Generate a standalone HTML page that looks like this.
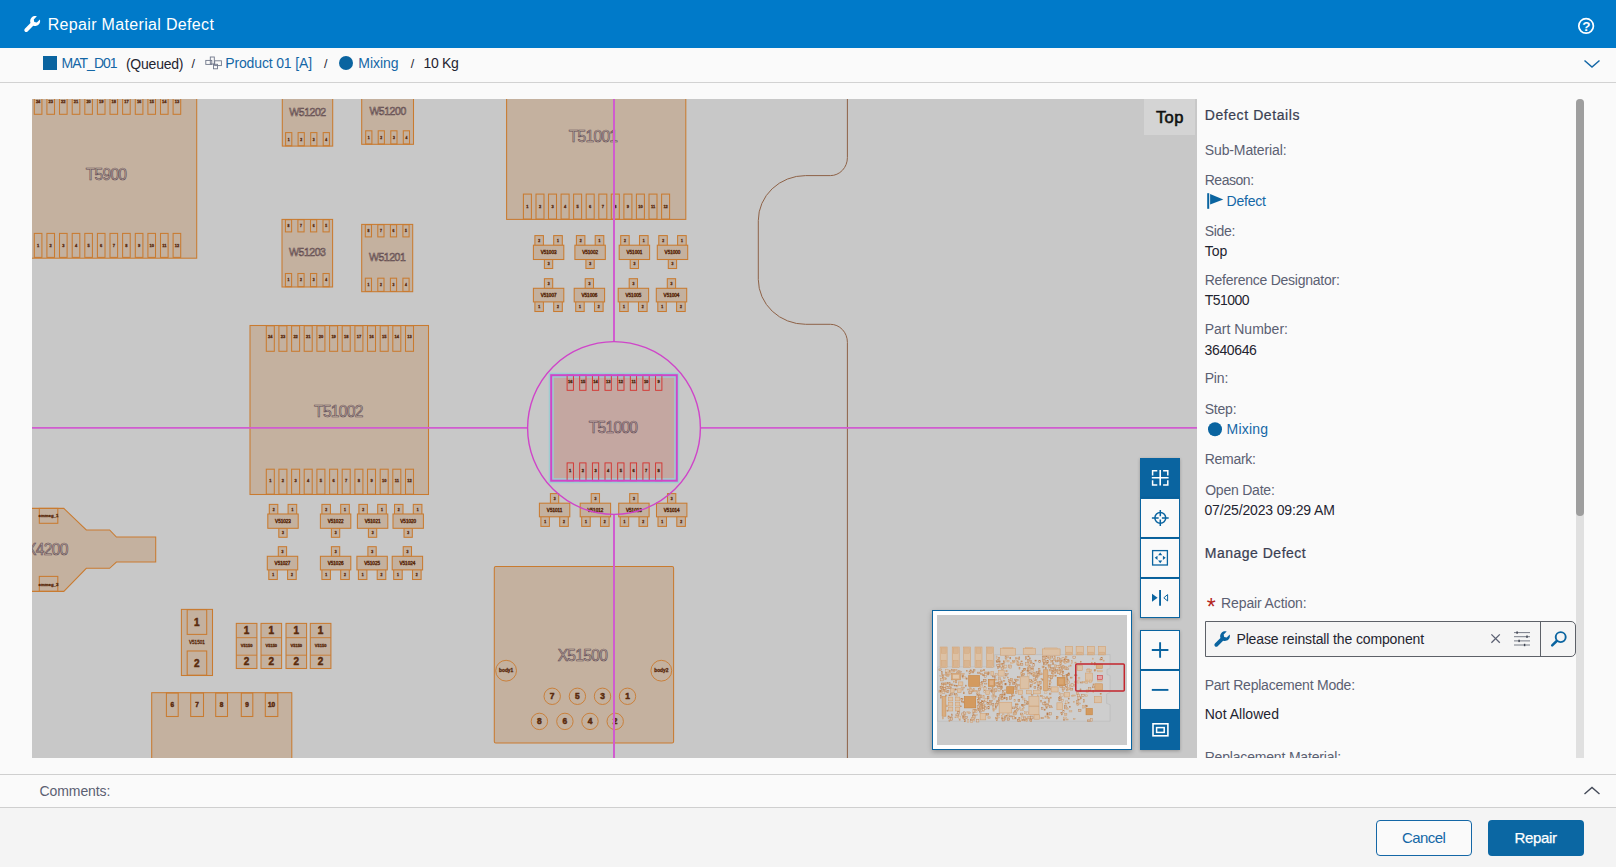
<!DOCTYPE html>
<html lang="en"><head><meta charset="utf-8"><title>Repair Material Defect</title>
<style>
html,body{margin:0;padding:0}
body{width:1616px;height:867px;overflow:hidden;position:relative;background:#fafafa;font-family:"Liberation Sans",sans-serif}
.abs{position:absolute}
.t{position:absolute;white-space:nowrap;line-height:1.149;}
#hdr{left:0;top:0;width:1616px;height:48px;background:#007ac9}
#crumb{left:0;top:48px;width:1616px;height:34px;background:#fafafa;border-bottom:1px solid #d2d2d2}
#pcbwrap{left:32px;top:99px;width:1165px;height:658.6px;background:#c8c8c8;overflow:hidden}
svg.pcb{position:absolute;left:0;top:0}
svg.pcb text.big{paint-order:stroke}
#toplabel{left:1144px;top:99px;width:51px;height:35.6px;background:#d4d4d4}
#mini{left:932px;top:610px;width:197.7px;height:137.8px;border:1px solid #0a64a0;background:#fff;box-shadow:0 2px 5px rgba(0,0,0,.28)}
#mini svg{position:absolute;left:4px;top:4px;background:#cbcbcb}
.tb{position:absolute;left:1140px;width:40px;background:#fafafa;border:1px solid #0a64a0;box-sizing:border-box;box-shadow:0 1px 3px rgba(0,0,0,.25)}
.tb.on{background:#0a64a0}
.tb svg{position:absolute;left:0;top:0}
#track{left:1576px;top:99px;width:8px;height:658.6px;background:#e0e0e0;border-radius:4px 4px 0 0}
#thumb{left:1576px;top:98.800px;width:8px;height:417.100px;background:#9e9e9e;border-radius:4px}
#panelclip{left:1197px;top:757.6px;width:395px;height:16px;background:#fafafa}
#cmt{left:0;top:774px;width:1616px;height:32px;border-top:1px solid #cfcfcf;border-bottom:1px solid #cfcfcf;background:#fafafa}
#foot{left:0;top:808px;width:1616px;height:59px;background:#f4f4f4}
#inp{left:1205px;top:621px;width:370.6px;height:36px;box-sizing:border-box;border:1px solid #5d6168;border-radius:0 5px 5px 0;background:#f5f5f5}
#inpdiv{left:1539.5px;top:621px;width:1px;height:36px;background:#5d6168}
#inpr{left:1540.5px;top:622px;width:34.1px;height:34px;background:#f5f5f5;border-radius:0 4px 4px 0}
#bcancel{left:1376px;top:820px;width:96px;height:36px;box-sizing:border-box;border:1px solid #1467a6;border-radius:4px;background:#fafafa}
#brepair{left:1488px;top:820px;width:96px;height:36px;border-radius:4px;background:#0b67a3}
</style></head><body>
<div id="hdr" class="abs"></div>
<div id="crumb" class="abs"></div>
<div id="pcbwrap" class="abs"><svg class="pcb" width="1165" height="658.6" viewBox="0 0 1165 658.6" font-family="Liberation Sans, sans-serif">
<rect x="-12.0" y="-9.0" width="176.7" height="168.2" fill="#c4b19f" stroke="#c97b30" stroke-width="1.05"/>
<rect x="2.3" y="-9.0" width="7.6" height="24.3" fill="none" stroke="#c97b30" stroke-width="1.05"/>
<text x="6.1" y="4.5" font-size="4.0" fill="#5a2a0c" font-weight="bold" text-anchor="middle" stroke="#5a2a0c" stroke-width="0.3">24</text>
<rect x="14.9" y="-9.0" width="7.6" height="24.3" fill="none" stroke="#c97b30" stroke-width="1.05"/>
<text x="18.7" y="4.5" font-size="4.0" fill="#5a2a0c" font-weight="bold" text-anchor="middle" stroke="#5a2a0c" stroke-width="0.3">23</text>
<rect x="27.5" y="-9.0" width="7.6" height="24.3" fill="none" stroke="#c97b30" stroke-width="1.05"/>
<text x="31.3" y="4.5" font-size="4.0" fill="#5a2a0c" font-weight="bold" text-anchor="middle" stroke="#5a2a0c" stroke-width="0.3">22</text>
<rect x="40.2" y="-9.0" width="7.6" height="24.3" fill="none" stroke="#c97b30" stroke-width="1.05"/>
<text x="44.0" y="4.5" font-size="4.0" fill="#5a2a0c" font-weight="bold" text-anchor="middle" stroke="#5a2a0c" stroke-width="0.3">21</text>
<rect x="52.8" y="-9.0" width="7.6" height="24.3" fill="none" stroke="#c97b30" stroke-width="1.05"/>
<text x="56.6" y="4.5" font-size="4.0" fill="#5a2a0c" font-weight="bold" text-anchor="middle" stroke="#5a2a0c" stroke-width="0.3">20</text>
<rect x="65.4" y="-9.0" width="7.6" height="24.3" fill="none" stroke="#c97b30" stroke-width="1.05"/>
<text x="69.2" y="4.5" font-size="4.0" fill="#5a2a0c" font-weight="bold" text-anchor="middle" stroke="#5a2a0c" stroke-width="0.3">19</text>
<rect x="78.0" y="-9.0" width="7.6" height="24.3" fill="none" stroke="#c97b30" stroke-width="1.05"/>
<text x="81.8" y="4.5" font-size="4.0" fill="#5a2a0c" font-weight="bold" text-anchor="middle" stroke="#5a2a0c" stroke-width="0.3">18</text>
<rect x="90.6" y="-9.0" width="7.6" height="24.3" fill="none" stroke="#c97b30" stroke-width="1.05"/>
<text x="94.4" y="4.5" font-size="4.0" fill="#5a2a0c" font-weight="bold" text-anchor="middle" stroke="#5a2a0c" stroke-width="0.3">17</text>
<rect x="103.3" y="-9.0" width="7.6" height="24.3" fill="none" stroke="#c97b30" stroke-width="1.05"/>
<text x="107.1" y="4.5" font-size="4.0" fill="#5a2a0c" font-weight="bold" text-anchor="middle" stroke="#5a2a0c" stroke-width="0.3">16</text>
<rect x="115.9" y="-9.0" width="7.6" height="24.3" fill="none" stroke="#c97b30" stroke-width="1.05"/>
<text x="119.7" y="4.5" font-size="4.0" fill="#5a2a0c" font-weight="bold" text-anchor="middle" stroke="#5a2a0c" stroke-width="0.3">15</text>
<rect x="128.5" y="-9.0" width="7.6" height="24.3" fill="none" stroke="#c97b30" stroke-width="1.05"/>
<text x="132.3" y="4.5" font-size="4.0" fill="#5a2a0c" font-weight="bold" text-anchor="middle" stroke="#5a2a0c" stroke-width="0.3">14</text>
<rect x="141.1" y="-9.0" width="7.6" height="24.3" fill="none" stroke="#c97b30" stroke-width="1.05"/>
<text x="144.9" y="4.5" font-size="4.0" fill="#5a2a0c" font-weight="bold" text-anchor="middle" stroke="#5a2a0c" stroke-width="0.3">13</text>
<rect x="2.3" y="134.4" width="7.6" height="24.0" fill="none" stroke="#c97b30" stroke-width="1.05"/>
<text x="6.1" y="148.0" font-size="4.0" fill="#5a2a0c" font-weight="bold" text-anchor="middle" stroke="#5a2a0c" stroke-width="0.3">1</text>
<rect x="14.9" y="134.4" width="7.6" height="24.0" fill="none" stroke="#c97b30" stroke-width="1.05"/>
<text x="18.7" y="148.0" font-size="4.0" fill="#5a2a0c" font-weight="bold" text-anchor="middle" stroke="#5a2a0c" stroke-width="0.3">2</text>
<rect x="27.5" y="134.4" width="7.6" height="24.0" fill="none" stroke="#c97b30" stroke-width="1.05"/>
<text x="31.3" y="148.0" font-size="4.0" fill="#5a2a0c" font-weight="bold" text-anchor="middle" stroke="#5a2a0c" stroke-width="0.3">3</text>
<rect x="40.2" y="134.4" width="7.6" height="24.0" fill="none" stroke="#c97b30" stroke-width="1.05"/>
<text x="44.0" y="148.0" font-size="4.0" fill="#5a2a0c" font-weight="bold" text-anchor="middle" stroke="#5a2a0c" stroke-width="0.3">4</text>
<rect x="52.8" y="134.4" width="7.6" height="24.0" fill="none" stroke="#c97b30" stroke-width="1.05"/>
<text x="56.6" y="148.0" font-size="4.0" fill="#5a2a0c" font-weight="bold" text-anchor="middle" stroke="#5a2a0c" stroke-width="0.3">5</text>
<rect x="65.4" y="134.4" width="7.6" height="24.0" fill="none" stroke="#c97b30" stroke-width="1.05"/>
<text x="69.2" y="148.0" font-size="4.0" fill="#5a2a0c" font-weight="bold" text-anchor="middle" stroke="#5a2a0c" stroke-width="0.3">6</text>
<rect x="78.0" y="134.4" width="7.6" height="24.0" fill="none" stroke="#c97b30" stroke-width="1.05"/>
<text x="81.8" y="148.0" font-size="4.0" fill="#5a2a0c" font-weight="bold" text-anchor="middle" stroke="#5a2a0c" stroke-width="0.3">7</text>
<rect x="90.6" y="134.4" width="7.6" height="24.0" fill="none" stroke="#c97b30" stroke-width="1.05"/>
<text x="94.4" y="148.0" font-size="4.0" fill="#5a2a0c" font-weight="bold" text-anchor="middle" stroke="#5a2a0c" stroke-width="0.3">8</text>
<rect x="103.3" y="134.4" width="7.6" height="24.0" fill="none" stroke="#c97b30" stroke-width="1.05"/>
<text x="107.1" y="148.0" font-size="4.0" fill="#5a2a0c" font-weight="bold" text-anchor="middle" stroke="#5a2a0c" stroke-width="0.3">9</text>
<rect x="115.9" y="134.4" width="7.6" height="24.0" fill="none" stroke="#c97b30" stroke-width="1.05"/>
<text x="119.7" y="148.0" font-size="4.0" fill="#5a2a0c" font-weight="bold" text-anchor="middle" stroke="#5a2a0c" stroke-width="0.3">10</text>
<rect x="128.5" y="134.4" width="7.6" height="24.0" fill="none" stroke="#c97b30" stroke-width="1.05"/>
<text x="132.3" y="148.0" font-size="4.0" fill="#5a2a0c" font-weight="bold" text-anchor="middle" stroke="#5a2a0c" stroke-width="0.3">11</text>
<rect x="141.1" y="134.4" width="7.6" height="24.0" fill="none" stroke="#c97b30" stroke-width="1.05"/>
<text x="144.9" y="148.0" font-size="4.0" fill="#5a2a0c" font-weight="bold" text-anchor="middle" stroke="#5a2a0c" stroke-width="0.3">12</text>
<text x="74.0" y="80.9" font-size="15.6" text-anchor="middle" letter-spacing="-0.7" fill="none" stroke="#5e4a56" stroke-width="0.6">T5900</text>
<rect x="250.3" y="-14.0" width="50.4" height="61.1" fill="#c4b19f" stroke="#c97b30" stroke-width="1.05"/>
<rect x="253.6" y="33.6" width="6.2" height="13.2" fill="none" stroke="#c97b30" stroke-width="1.05"/>
<text x="256.7" y="41.6" font-size="3.4" fill="#5a2a0c" font-weight="bold" text-anchor="middle" stroke="#5a2a0c" stroke-width="0.3">1</text>
<rect x="266.1" y="33.6" width="6.2" height="13.2" fill="none" stroke="#c97b30" stroke-width="1.05"/>
<text x="269.2" y="41.6" font-size="3.4" fill="#5a2a0c" font-weight="bold" text-anchor="middle" stroke="#5a2a0c" stroke-width="0.3">2</text>
<rect x="278.7" y="33.6" width="6.2" height="13.2" fill="none" stroke="#c97b30" stroke-width="1.05"/>
<text x="281.8" y="41.6" font-size="3.4" fill="#5a2a0c" font-weight="bold" text-anchor="middle" stroke="#5a2a0c" stroke-width="0.3">3</text>
<rect x="291.2" y="33.6" width="6.2" height="13.2" fill="none" stroke="#c97b30" stroke-width="1.05"/>
<text x="294.3" y="41.6" font-size="3.4" fill="#5a2a0c" font-weight="bold" text-anchor="middle" stroke="#5a2a0c" stroke-width="0.3">4</text>
<text x="275.5" y="16.9" font-size="10.5" letter-spacing="-0.45" text-anchor="middle" fill="none" stroke="#5a444a" stroke-width="0.55">W51202</text>
<rect x="329.7" y="-14.0" width="51.8" height="59.3" fill="#c4b19f" stroke="#c97b30" stroke-width="1.05"/>
<rect x="333.7" y="31.8" width="6.2" height="13.2" fill="none" stroke="#c97b30" stroke-width="1.05"/>
<text x="336.8" y="39.8" font-size="3.4" fill="#5a2a0c" font-weight="bold" text-anchor="middle" stroke="#5a2a0c" stroke-width="0.3">1</text>
<rect x="346.2" y="31.8" width="6.2" height="13.2" fill="none" stroke="#c97b30" stroke-width="1.05"/>
<text x="349.3" y="39.8" font-size="3.4" fill="#5a2a0c" font-weight="bold" text-anchor="middle" stroke="#5a2a0c" stroke-width="0.3">2</text>
<rect x="358.8" y="31.8" width="6.2" height="13.2" fill="none" stroke="#c97b30" stroke-width="1.05"/>
<text x="361.9" y="39.8" font-size="3.4" fill="#5a2a0c" font-weight="bold" text-anchor="middle" stroke="#5a2a0c" stroke-width="0.3">3</text>
<rect x="371.3" y="31.8" width="6.2" height="13.2" fill="none" stroke="#c97b30" stroke-width="1.05"/>
<text x="374.4" y="39.8" font-size="3.4" fill="#5a2a0c" font-weight="bold" text-anchor="middle" stroke="#5a2a0c" stroke-width="0.3">4</text>
<text x="355.6" y="16.0" font-size="10.5" letter-spacing="-0.45" text-anchor="middle" fill="none" stroke="#5a444a" stroke-width="0.55">W51200</text>
<rect x="250.0" y="120.4" width="50.6" height="67.6" fill="#c4b19f" stroke="#c97b30" stroke-width="1.05"/>
<rect x="253.4" y="120.7" width="6.2" height="12.2" fill="none" stroke="#c97b30" stroke-width="1.05"/>
<text x="256.5" y="127.9" font-size="3.4" fill="#5a2a0c" font-weight="bold" text-anchor="middle" stroke="#5a2a0c" stroke-width="0.3">8</text>
<rect x="265.9" y="120.7" width="6.2" height="12.2" fill="none" stroke="#c97b30" stroke-width="1.05"/>
<text x="269.0" y="127.9" font-size="3.4" fill="#5a2a0c" font-weight="bold" text-anchor="middle" stroke="#5a2a0c" stroke-width="0.3">7</text>
<rect x="278.5" y="120.7" width="6.2" height="12.2" fill="none" stroke="#c97b30" stroke-width="1.05"/>
<text x="281.6" y="127.9" font-size="3.4" fill="#5a2a0c" font-weight="bold" text-anchor="middle" stroke="#5a2a0c" stroke-width="0.3">6</text>
<rect x="291.0" y="120.7" width="6.2" height="12.2" fill="none" stroke="#c97b30" stroke-width="1.05"/>
<text x="294.1" y="127.9" font-size="3.4" fill="#5a2a0c" font-weight="bold" text-anchor="middle" stroke="#5a2a0c" stroke-width="0.3">5</text>
<rect x="253.4" y="174.5" width="6.2" height="13.2" fill="none" stroke="#c97b30" stroke-width="1.05"/>
<text x="256.5" y="182.5" font-size="3.4" fill="#5a2a0c" font-weight="bold" text-anchor="middle" stroke="#5a2a0c" stroke-width="0.3">1</text>
<rect x="265.9" y="174.5" width="6.2" height="13.2" fill="none" stroke="#c97b30" stroke-width="1.05"/>
<text x="269.0" y="182.5" font-size="3.4" fill="#5a2a0c" font-weight="bold" text-anchor="middle" stroke="#5a2a0c" stroke-width="0.3">2</text>
<rect x="278.5" y="174.5" width="6.2" height="13.2" fill="none" stroke="#c97b30" stroke-width="1.05"/>
<text x="281.6" y="182.5" font-size="3.4" fill="#5a2a0c" font-weight="bold" text-anchor="middle" stroke="#5a2a0c" stroke-width="0.3">3</text>
<rect x="291.0" y="174.5" width="6.2" height="13.2" fill="none" stroke="#c97b30" stroke-width="1.05"/>
<text x="294.1" y="182.5" font-size="3.4" fill="#5a2a0c" font-weight="bold" text-anchor="middle" stroke="#5a2a0c" stroke-width="0.3">4</text>
<text x="275.3" y="157.5" font-size="10.5" letter-spacing="-0.45" text-anchor="middle" fill="none" stroke="#5a444a" stroke-width="0.55">W51203</text>
<rect x="329.7" y="125.4" width="51.0" height="67.3" fill="#c4b19f" stroke="#c97b30" stroke-width="1.05"/>
<rect x="333.3" y="125.7" width="6.2" height="12.2" fill="none" stroke="#c97b30" stroke-width="1.05"/>
<text x="336.4" y="132.9" font-size="3.4" fill="#5a2a0c" font-weight="bold" text-anchor="middle" stroke="#5a2a0c" stroke-width="0.3">8</text>
<rect x="345.8" y="125.7" width="6.2" height="12.2" fill="none" stroke="#c97b30" stroke-width="1.05"/>
<text x="348.9" y="132.9" font-size="3.4" fill="#5a2a0c" font-weight="bold" text-anchor="middle" stroke="#5a2a0c" stroke-width="0.3">7</text>
<rect x="358.4" y="125.7" width="6.2" height="12.2" fill="none" stroke="#c97b30" stroke-width="1.05"/>
<text x="361.5" y="132.9" font-size="3.4" fill="#5a2a0c" font-weight="bold" text-anchor="middle" stroke="#5a2a0c" stroke-width="0.3">6</text>
<rect x="370.9" y="125.7" width="6.2" height="12.2" fill="none" stroke="#c97b30" stroke-width="1.05"/>
<text x="374.0" y="132.9" font-size="3.4" fill="#5a2a0c" font-weight="bold" text-anchor="middle" stroke="#5a2a0c" stroke-width="0.3">5</text>
<rect x="333.3" y="179.2" width="6.2" height="13.2" fill="none" stroke="#c97b30" stroke-width="1.05"/>
<text x="336.4" y="187.2" font-size="3.4" fill="#5a2a0c" font-weight="bold" text-anchor="middle" stroke="#5a2a0c" stroke-width="0.3">1</text>
<rect x="345.8" y="179.2" width="6.2" height="13.2" fill="none" stroke="#c97b30" stroke-width="1.05"/>
<text x="348.9" y="187.2" font-size="3.4" fill="#5a2a0c" font-weight="bold" text-anchor="middle" stroke="#5a2a0c" stroke-width="0.3">2</text>
<rect x="358.4" y="179.2" width="6.2" height="13.2" fill="none" stroke="#c97b30" stroke-width="1.05"/>
<text x="361.5" y="187.2" font-size="3.4" fill="#5a2a0c" font-weight="bold" text-anchor="middle" stroke="#5a2a0c" stroke-width="0.3">3</text>
<rect x="370.9" y="179.2" width="6.2" height="13.2" fill="none" stroke="#c97b30" stroke-width="1.05"/>
<text x="374.0" y="187.2" font-size="3.4" fill="#5a2a0c" font-weight="bold" text-anchor="middle" stroke="#5a2a0c" stroke-width="0.3">4</text>
<text x="355.2" y="162.5" font-size="10.5" letter-spacing="-0.45" text-anchor="middle" fill="none" stroke="#5a444a" stroke-width="0.55">W51201</text>
<rect x="474.6" y="-14.0" width="179.2" height="134.4" fill="#c4b19f" stroke="#c97b30" stroke-width="1.05"/>
<rect x="491.4" y="95.1" width="8.0" height="25.0" fill="none" stroke="#c97b30" stroke-width="1.05"/>
<text x="495.4" y="109.0" font-size="4.0" fill="#5a2a0c" font-weight="bold" text-anchor="middle" stroke="#5a2a0c" stroke-width="0.3">1</text>
<rect x="504.0" y="95.1" width="8.0" height="25.0" fill="none" stroke="#c97b30" stroke-width="1.05"/>
<text x="508.0" y="109.0" font-size="4.0" fill="#5a2a0c" font-weight="bold" text-anchor="middle" stroke="#5a2a0c" stroke-width="0.3">2</text>
<rect x="516.5" y="95.1" width="8.0" height="25.0" fill="none" stroke="#c97b30" stroke-width="1.05"/>
<text x="520.5" y="109.0" font-size="4.0" fill="#5a2a0c" font-weight="bold" text-anchor="middle" stroke="#5a2a0c" stroke-width="0.3">3</text>
<rect x="529.1" y="95.1" width="8.0" height="25.0" fill="none" stroke="#c97b30" stroke-width="1.05"/>
<text x="533.1" y="109.0" font-size="4.0" fill="#5a2a0c" font-weight="bold" text-anchor="middle" stroke="#5a2a0c" stroke-width="0.3">4</text>
<rect x="541.6" y="95.1" width="8.0" height="25.0" fill="none" stroke="#c97b30" stroke-width="1.05"/>
<text x="545.6" y="109.0" font-size="4.0" fill="#5a2a0c" font-weight="bold" text-anchor="middle" stroke="#5a2a0c" stroke-width="0.3">5</text>
<rect x="554.2" y="95.1" width="8.0" height="25.0" fill="none" stroke="#c97b30" stroke-width="1.05"/>
<text x="558.2" y="109.0" font-size="4.0" fill="#5a2a0c" font-weight="bold" text-anchor="middle" stroke="#5a2a0c" stroke-width="0.3">6</text>
<rect x="566.8" y="95.1" width="8.0" height="25.0" fill="none" stroke="#c97b30" stroke-width="1.05"/>
<text x="570.8" y="109.0" font-size="4.0" fill="#5a2a0c" font-weight="bold" text-anchor="middle" stroke="#5a2a0c" stroke-width="0.3">7</text>
<rect x="579.3" y="95.1" width="8.0" height="25.0" fill="none" stroke="#c97b30" stroke-width="1.05"/>
<text x="583.3" y="109.0" font-size="4.0" fill="#5a2a0c" font-weight="bold" text-anchor="middle" stroke="#5a2a0c" stroke-width="0.3">8</text>
<rect x="591.9" y="95.1" width="8.0" height="25.0" fill="none" stroke="#c97b30" stroke-width="1.05"/>
<text x="595.9" y="109.0" font-size="4.0" fill="#5a2a0c" font-weight="bold" text-anchor="middle" stroke="#5a2a0c" stroke-width="0.3">9</text>
<rect x="604.4" y="95.1" width="8.0" height="25.0" fill="none" stroke="#c97b30" stroke-width="1.05"/>
<text x="608.4" y="109.0" font-size="4.0" fill="#5a2a0c" font-weight="bold" text-anchor="middle" stroke="#5a2a0c" stroke-width="0.3">10</text>
<rect x="617.0" y="95.1" width="8.0" height="25.0" fill="none" stroke="#c97b30" stroke-width="1.05"/>
<text x="621.0" y="109.0" font-size="4.0" fill="#5a2a0c" font-weight="bold" text-anchor="middle" stroke="#5a2a0c" stroke-width="0.3">11</text>
<rect x="629.6" y="95.1" width="8.0" height="25.0" fill="none" stroke="#c97b30" stroke-width="1.05"/>
<text x="633.6" y="109.0" font-size="4.0" fill="#5a2a0c" font-weight="bold" text-anchor="middle" stroke="#5a2a0c" stroke-width="0.3">12</text>
<text x="561.0" y="42.6" font-size="15.6" text-anchor="middle" letter-spacing="-0.7" fill="none" stroke="#5e4a56" stroke-width="0.6">T51001</text>
<rect x="502.9" y="136.6" width="8.5" height="10.1" fill="#c4b19f" stroke="#c97b30" stroke-width="1.05"/>
<text x="507.2" y="142.8" font-size="3.4" fill="#5a2a0c" font-weight="bold" text-anchor="middle" stroke="#5a2a0c" stroke-width="0.3">2</text>
<rect x="521.7" y="136.6" width="8.6" height="10.1" fill="#c4b19f" stroke="#c97b30" stroke-width="1.05"/>
<text x="526.0" y="142.8" font-size="3.4" fill="#5a2a0c" font-weight="bold" text-anchor="middle" stroke="#5a2a0c" stroke-width="0.3">1</text>
<rect x="512.4" y="160.0" width="8.3" height="9.5" fill="#c4b19f" stroke="#c97b30" stroke-width="1.05"/>
<text x="516.6" y="166.1" font-size="3.4" fill="#5a2a0c" font-weight="bold" text-anchor="middle" stroke="#5a2a0c" stroke-width="0.3">3</text>
<rect x="501.4" y="146.2" width="30.4" height="14.3" fill="#c4b19f" stroke="#c97b30" stroke-width="1.05"/>
<text x="516.6" y="154.9" font-size="4.6" fill="#5a2a0c" font-weight="normal" text-anchor="middle" stroke="#5a2a0c" stroke-width="0.4">V51003</text>
<rect x="544.4" y="136.6" width="8.5" height="10.1" fill="#c4b19f" stroke="#c97b30" stroke-width="1.05"/>
<text x="548.7" y="142.8" font-size="3.4" fill="#5a2a0c" font-weight="bold" text-anchor="middle" stroke="#5a2a0c" stroke-width="0.3">2</text>
<rect x="563.2" y="136.6" width="8.6" height="10.1" fill="#c4b19f" stroke="#c97b30" stroke-width="1.05"/>
<text x="567.5" y="142.8" font-size="3.4" fill="#5a2a0c" font-weight="bold" text-anchor="middle" stroke="#5a2a0c" stroke-width="0.3">1</text>
<rect x="553.9" y="160.0" width="8.3" height="9.5" fill="#c4b19f" stroke="#c97b30" stroke-width="1.05"/>
<text x="558.1" y="166.1" font-size="3.4" fill="#5a2a0c" font-weight="bold" text-anchor="middle" stroke="#5a2a0c" stroke-width="0.3">3</text>
<rect x="542.9" y="146.2" width="30.4" height="14.3" fill="#c4b19f" stroke="#c97b30" stroke-width="1.05"/>
<text x="558.1" y="154.9" font-size="4.6" fill="#5a2a0c" font-weight="normal" text-anchor="middle" stroke="#5a2a0c" stroke-width="0.4">V51002</text>
<rect x="588.7" y="136.6" width="8.5" height="10.1" fill="#c4b19f" stroke="#c97b30" stroke-width="1.05"/>
<text x="593.0" y="142.8" font-size="3.4" fill="#5a2a0c" font-weight="bold" text-anchor="middle" stroke="#5a2a0c" stroke-width="0.3">2</text>
<rect x="607.5" y="136.6" width="8.6" height="10.1" fill="#c4b19f" stroke="#c97b30" stroke-width="1.05"/>
<text x="611.8" y="142.8" font-size="3.4" fill="#5a2a0c" font-weight="bold" text-anchor="middle" stroke="#5a2a0c" stroke-width="0.3">1</text>
<rect x="598.2" y="160.0" width="8.3" height="9.5" fill="#c4b19f" stroke="#c97b30" stroke-width="1.05"/>
<text x="602.4" y="166.1" font-size="3.4" fill="#5a2a0c" font-weight="bold" text-anchor="middle" stroke="#5a2a0c" stroke-width="0.3">3</text>
<rect x="587.2" y="146.2" width="30.4" height="14.3" fill="#c4b19f" stroke="#c97b30" stroke-width="1.05"/>
<text x="602.4" y="154.9" font-size="4.6" fill="#5a2a0c" font-weight="normal" text-anchor="middle" stroke="#5a2a0c" stroke-width="0.4">V51001</text>
<rect x="626.8" y="136.6" width="8.5" height="10.1" fill="#c4b19f" stroke="#c97b30" stroke-width="1.05"/>
<text x="631.1" y="142.8" font-size="3.4" fill="#5a2a0c" font-weight="bold" text-anchor="middle" stroke="#5a2a0c" stroke-width="0.3">2</text>
<rect x="645.6" y="136.6" width="8.6" height="10.1" fill="#c4b19f" stroke="#c97b30" stroke-width="1.05"/>
<text x="649.9" y="142.8" font-size="3.4" fill="#5a2a0c" font-weight="bold" text-anchor="middle" stroke="#5a2a0c" stroke-width="0.3">1</text>
<rect x="636.3" y="160.0" width="8.3" height="9.5" fill="#c4b19f" stroke="#c97b30" stroke-width="1.05"/>
<text x="640.5" y="166.1" font-size="3.4" fill="#5a2a0c" font-weight="bold" text-anchor="middle" stroke="#5a2a0c" stroke-width="0.3">3</text>
<rect x="625.3" y="146.2" width="30.4" height="14.3" fill="#c4b19f" stroke="#c97b30" stroke-width="1.05"/>
<text x="640.5" y="154.9" font-size="4.6" fill="#5a2a0c" font-weight="normal" text-anchor="middle" stroke="#5a2a0c" stroke-width="0.4">V51000</text>
<rect x="512.4" y="179.7" width="8.3" height="10.1" fill="#c4b19f" stroke="#c97b30" stroke-width="1.05"/>
<text x="516.6" y="185.9" font-size="3.4" fill="#5a2a0c" font-weight="bold" text-anchor="middle" stroke="#5a2a0c" stroke-width="0.3">3</text>
<rect x="502.9" y="202.4" width="8.5" height="10.1" fill="#c4b19f" stroke="#c97b30" stroke-width="1.05"/>
<text x="507.2" y="208.9" font-size="3.4" fill="#5a2a0c" font-weight="bold" text-anchor="middle" stroke="#5a2a0c" stroke-width="0.3">1</text>
<rect x="521.7" y="202.4" width="8.6" height="10.1" fill="#c4b19f" stroke="#c97b30" stroke-width="1.05"/>
<text x="526.0" y="208.9" font-size="3.4" fill="#5a2a0c" font-weight="bold" text-anchor="middle" stroke="#5a2a0c" stroke-width="0.3">2</text>
<rect x="501.4" y="189.3" width="30.4" height="13.6" fill="#c4b19f" stroke="#c97b30" stroke-width="1.05"/>
<text x="516.6" y="197.7" font-size="4.6" fill="#5a2a0c" font-weight="normal" text-anchor="middle" stroke="#5a2a0c" stroke-width="0.4">V51007</text>
<rect x="553.2" y="179.7" width="8.3" height="10.1" fill="#c4b19f" stroke="#c97b30" stroke-width="1.05"/>
<text x="557.4" y="185.9" font-size="3.4" fill="#5a2a0c" font-weight="bold" text-anchor="middle" stroke="#5a2a0c" stroke-width="0.3">3</text>
<rect x="543.7" y="202.4" width="8.5" height="10.1" fill="#c4b19f" stroke="#c97b30" stroke-width="1.05"/>
<text x="548.0" y="208.9" font-size="3.4" fill="#5a2a0c" font-weight="bold" text-anchor="middle" stroke="#5a2a0c" stroke-width="0.3">1</text>
<rect x="562.5" y="202.4" width="8.6" height="10.1" fill="#c4b19f" stroke="#c97b30" stroke-width="1.05"/>
<text x="566.8" y="208.9" font-size="3.4" fill="#5a2a0c" font-weight="bold" text-anchor="middle" stroke="#5a2a0c" stroke-width="0.3">2</text>
<rect x="542.2" y="189.3" width="30.4" height="13.6" fill="#c4b19f" stroke="#c97b30" stroke-width="1.05"/>
<text x="557.4" y="197.7" font-size="4.6" fill="#5a2a0c" font-weight="normal" text-anchor="middle" stroke="#5a2a0c" stroke-width="0.4">V51006</text>
<rect x="597.2" y="179.7" width="8.3" height="10.1" fill="#c4b19f" stroke="#c97b30" stroke-width="1.05"/>
<text x="601.4" y="185.9" font-size="3.4" fill="#5a2a0c" font-weight="bold" text-anchor="middle" stroke="#5a2a0c" stroke-width="0.3">3</text>
<rect x="587.7" y="202.4" width="8.5" height="10.1" fill="#c4b19f" stroke="#c97b30" stroke-width="1.05"/>
<text x="592.0" y="208.9" font-size="3.4" fill="#5a2a0c" font-weight="bold" text-anchor="middle" stroke="#5a2a0c" stroke-width="0.3">1</text>
<rect x="606.5" y="202.4" width="8.6" height="10.1" fill="#c4b19f" stroke="#c97b30" stroke-width="1.05"/>
<text x="610.8" y="208.9" font-size="3.4" fill="#5a2a0c" font-weight="bold" text-anchor="middle" stroke="#5a2a0c" stroke-width="0.3">2</text>
<rect x="586.2" y="189.3" width="30.4" height="13.6" fill="#c4b19f" stroke="#c97b30" stroke-width="1.05"/>
<text x="601.4" y="197.7" font-size="4.6" fill="#5a2a0c" font-weight="normal" text-anchor="middle" stroke="#5a2a0c" stroke-width="0.4">V51005</text>
<rect x="635.3" y="179.7" width="8.3" height="10.1" fill="#c4b19f" stroke="#c97b30" stroke-width="1.05"/>
<text x="639.5" y="185.9" font-size="3.4" fill="#5a2a0c" font-weight="bold" text-anchor="middle" stroke="#5a2a0c" stroke-width="0.3">3</text>
<rect x="625.8" y="202.4" width="8.5" height="10.1" fill="#c4b19f" stroke="#c97b30" stroke-width="1.05"/>
<text x="630.1" y="208.9" font-size="3.4" fill="#5a2a0c" font-weight="bold" text-anchor="middle" stroke="#5a2a0c" stroke-width="0.3">1</text>
<rect x="644.6" y="202.4" width="8.6" height="10.1" fill="#c4b19f" stroke="#c97b30" stroke-width="1.05"/>
<text x="648.9" y="208.9" font-size="3.4" fill="#5a2a0c" font-weight="bold" text-anchor="middle" stroke="#5a2a0c" stroke-width="0.3">2</text>
<rect x="624.3" y="189.3" width="30.4" height="13.6" fill="#c4b19f" stroke="#c97b30" stroke-width="1.05"/>
<text x="639.5" y="197.7" font-size="4.6" fill="#5a2a0c" font-weight="normal" text-anchor="middle" stroke="#5a2a0c" stroke-width="0.4">V51004</text>
<rect x="237.3" y="405.4" width="8.5" height="10.1" fill="#c4b19f" stroke="#c97b30" stroke-width="1.05"/>
<text x="241.6" y="411.6" font-size="3.4" fill="#5a2a0c" font-weight="bold" text-anchor="middle" stroke="#5a2a0c" stroke-width="0.3">2</text>
<rect x="256.1" y="405.4" width="8.6" height="10.1" fill="#c4b19f" stroke="#c97b30" stroke-width="1.05"/>
<text x="260.4" y="411.6" font-size="3.4" fill="#5a2a0c" font-weight="bold" text-anchor="middle" stroke="#5a2a0c" stroke-width="0.3">1</text>
<rect x="246.8" y="428.8" width="8.3" height="9.5" fill="#c4b19f" stroke="#c97b30" stroke-width="1.05"/>
<text x="251.0" y="434.9" font-size="3.4" fill="#5a2a0c" font-weight="bold" text-anchor="middle" stroke="#5a2a0c" stroke-width="0.3">3</text>
<rect x="235.8" y="415.0" width="30.4" height="14.3" fill="#c4b19f" stroke="#c97b30" stroke-width="1.05"/>
<text x="251.0" y="423.8" font-size="4.6" fill="#5a2a0c" font-weight="normal" text-anchor="middle" stroke="#5a2a0c" stroke-width="0.4">V51023</text>
<rect x="289.9" y="405.4" width="8.5" height="10.1" fill="#c4b19f" stroke="#c97b30" stroke-width="1.05"/>
<text x="294.2" y="411.6" font-size="3.4" fill="#5a2a0c" font-weight="bold" text-anchor="middle" stroke="#5a2a0c" stroke-width="0.3">2</text>
<rect x="308.7" y="405.4" width="8.6" height="10.1" fill="#c4b19f" stroke="#c97b30" stroke-width="1.05"/>
<text x="313.0" y="411.6" font-size="3.4" fill="#5a2a0c" font-weight="bold" text-anchor="middle" stroke="#5a2a0c" stroke-width="0.3">1</text>
<rect x="299.4" y="428.8" width="8.3" height="9.5" fill="#c4b19f" stroke="#c97b30" stroke-width="1.05"/>
<text x="303.6" y="434.9" font-size="3.4" fill="#5a2a0c" font-weight="bold" text-anchor="middle" stroke="#5a2a0c" stroke-width="0.3">3</text>
<rect x="288.4" y="415.0" width="30.4" height="14.3" fill="#c4b19f" stroke="#c97b30" stroke-width="1.05"/>
<text x="303.6" y="423.8" font-size="4.6" fill="#5a2a0c" font-weight="normal" text-anchor="middle" stroke="#5a2a0c" stroke-width="0.4">V51022</text>
<rect x="326.9" y="405.4" width="8.5" height="10.1" fill="#c4b19f" stroke="#c97b30" stroke-width="1.05"/>
<text x="331.2" y="411.6" font-size="3.4" fill="#5a2a0c" font-weight="bold" text-anchor="middle" stroke="#5a2a0c" stroke-width="0.3">2</text>
<rect x="345.7" y="405.4" width="8.6" height="10.1" fill="#c4b19f" stroke="#c97b30" stroke-width="1.05"/>
<text x="350.0" y="411.6" font-size="3.4" fill="#5a2a0c" font-weight="bold" text-anchor="middle" stroke="#5a2a0c" stroke-width="0.3">1</text>
<rect x="336.4" y="428.8" width="8.3" height="9.5" fill="#c4b19f" stroke="#c97b30" stroke-width="1.05"/>
<text x="340.6" y="434.9" font-size="3.4" fill="#5a2a0c" font-weight="bold" text-anchor="middle" stroke="#5a2a0c" stroke-width="0.3">3</text>
<rect x="325.4" y="415.0" width="30.4" height="14.3" fill="#c4b19f" stroke="#c97b30" stroke-width="1.05"/>
<text x="340.6" y="423.8" font-size="4.6" fill="#5a2a0c" font-weight="normal" text-anchor="middle" stroke="#5a2a0c" stroke-width="0.4">V51021</text>
<rect x="362.5" y="405.4" width="8.5" height="10.1" fill="#c4b19f" stroke="#c97b30" stroke-width="1.05"/>
<text x="366.8" y="411.6" font-size="3.4" fill="#5a2a0c" font-weight="bold" text-anchor="middle" stroke="#5a2a0c" stroke-width="0.3">2</text>
<rect x="381.3" y="405.4" width="8.6" height="10.1" fill="#c4b19f" stroke="#c97b30" stroke-width="1.05"/>
<text x="385.6" y="411.6" font-size="3.4" fill="#5a2a0c" font-weight="bold" text-anchor="middle" stroke="#5a2a0c" stroke-width="0.3">1</text>
<rect x="372.0" y="428.8" width="8.3" height="9.5" fill="#c4b19f" stroke="#c97b30" stroke-width="1.05"/>
<text x="376.2" y="434.9" font-size="3.4" fill="#5a2a0c" font-weight="bold" text-anchor="middle" stroke="#5a2a0c" stroke-width="0.3">3</text>
<rect x="361.0" y="415.0" width="30.4" height="14.3" fill="#c4b19f" stroke="#c97b30" stroke-width="1.05"/>
<text x="376.2" y="423.8" font-size="4.6" fill="#5a2a0c" font-weight="normal" text-anchor="middle" stroke="#5a2a0c" stroke-width="0.4">V51020</text>
<rect x="246.3" y="447.7" width="8.3" height="10.1" fill="#c4b19f" stroke="#c97b30" stroke-width="1.05"/>
<text x="250.5" y="453.9" font-size="3.4" fill="#5a2a0c" font-weight="bold" text-anchor="middle" stroke="#5a2a0c" stroke-width="0.3">3</text>
<rect x="236.8" y="470.4" width="8.5" height="10.1" fill="#c4b19f" stroke="#c97b30" stroke-width="1.05"/>
<text x="241.1" y="476.9" font-size="3.4" fill="#5a2a0c" font-weight="bold" text-anchor="middle" stroke="#5a2a0c" stroke-width="0.3">1</text>
<rect x="255.6" y="470.4" width="8.6" height="10.1" fill="#c4b19f" stroke="#c97b30" stroke-width="1.05"/>
<text x="259.9" y="476.9" font-size="3.4" fill="#5a2a0c" font-weight="bold" text-anchor="middle" stroke="#5a2a0c" stroke-width="0.3">2</text>
<rect x="235.3" y="457.3" width="30.4" height="13.6" fill="#c4b19f" stroke="#c97b30" stroke-width="1.05"/>
<text x="250.5" y="465.7" font-size="4.6" fill="#5a2a0c" font-weight="normal" text-anchor="middle" stroke="#5a2a0c" stroke-width="0.4">V51027</text>
<rect x="299.4" y="447.7" width="8.3" height="10.1" fill="#c4b19f" stroke="#c97b30" stroke-width="1.05"/>
<text x="303.6" y="453.9" font-size="3.4" fill="#5a2a0c" font-weight="bold" text-anchor="middle" stroke="#5a2a0c" stroke-width="0.3">3</text>
<rect x="289.9" y="470.4" width="8.5" height="10.1" fill="#c4b19f" stroke="#c97b30" stroke-width="1.05"/>
<text x="294.2" y="476.9" font-size="3.4" fill="#5a2a0c" font-weight="bold" text-anchor="middle" stroke="#5a2a0c" stroke-width="0.3">1</text>
<rect x="308.7" y="470.4" width="8.6" height="10.1" fill="#c4b19f" stroke="#c97b30" stroke-width="1.05"/>
<text x="313.0" y="476.9" font-size="3.4" fill="#5a2a0c" font-weight="bold" text-anchor="middle" stroke="#5a2a0c" stroke-width="0.3">2</text>
<rect x="288.4" y="457.3" width="30.4" height="13.6" fill="#c4b19f" stroke="#c97b30" stroke-width="1.05"/>
<text x="303.6" y="465.7" font-size="4.6" fill="#5a2a0c" font-weight="normal" text-anchor="middle" stroke="#5a2a0c" stroke-width="0.4">V51026</text>
<rect x="335.9" y="447.7" width="8.3" height="10.1" fill="#c4b19f" stroke="#c97b30" stroke-width="1.05"/>
<text x="340.1" y="453.9" font-size="3.4" fill="#5a2a0c" font-weight="bold" text-anchor="middle" stroke="#5a2a0c" stroke-width="0.3">3</text>
<rect x="326.4" y="470.4" width="8.5" height="10.1" fill="#c4b19f" stroke="#c97b30" stroke-width="1.05"/>
<text x="330.7" y="476.9" font-size="3.4" fill="#5a2a0c" font-weight="bold" text-anchor="middle" stroke="#5a2a0c" stroke-width="0.3">1</text>
<rect x="345.2" y="470.4" width="8.6" height="10.1" fill="#c4b19f" stroke="#c97b30" stroke-width="1.05"/>
<text x="349.5" y="476.9" font-size="3.4" fill="#5a2a0c" font-weight="bold" text-anchor="middle" stroke="#5a2a0c" stroke-width="0.3">2</text>
<rect x="324.9" y="457.3" width="30.4" height="13.6" fill="#c4b19f" stroke="#c97b30" stroke-width="1.05"/>
<text x="340.1" y="465.7" font-size="4.6" fill="#5a2a0c" font-weight="normal" text-anchor="middle" stroke="#5a2a0c" stroke-width="0.4">V51025</text>
<rect x="371.2" y="447.7" width="8.3" height="10.1" fill="#c4b19f" stroke="#c97b30" stroke-width="1.05"/>
<text x="375.4" y="453.9" font-size="3.4" fill="#5a2a0c" font-weight="bold" text-anchor="middle" stroke="#5a2a0c" stroke-width="0.3">3</text>
<rect x="361.7" y="470.4" width="8.5" height="10.1" fill="#c4b19f" stroke="#c97b30" stroke-width="1.05"/>
<text x="366.0" y="476.9" font-size="3.4" fill="#5a2a0c" font-weight="bold" text-anchor="middle" stroke="#5a2a0c" stroke-width="0.3">1</text>
<rect x="380.5" y="470.4" width="8.6" height="10.1" fill="#c4b19f" stroke="#c97b30" stroke-width="1.05"/>
<text x="384.8" y="476.9" font-size="3.4" fill="#5a2a0c" font-weight="bold" text-anchor="middle" stroke="#5a2a0c" stroke-width="0.3">2</text>
<rect x="360.2" y="457.3" width="30.4" height="13.6" fill="#c4b19f" stroke="#c97b30" stroke-width="1.05"/>
<text x="375.4" y="465.7" font-size="4.6" fill="#5a2a0c" font-weight="normal" text-anchor="middle" stroke="#5a2a0c" stroke-width="0.4">V51024</text>
<rect x="518.4" y="394.6" width="8.3" height="10.1" fill="#c4b19f" stroke="#c97b30" stroke-width="1.05"/>
<text x="522.6" y="400.8" font-size="3.4" fill="#5a2a0c" font-weight="bold" text-anchor="middle" stroke="#5a2a0c" stroke-width="0.3">3</text>
<rect x="508.9" y="417.3" width="8.5" height="10.1" fill="#c4b19f" stroke="#c97b30" stroke-width="1.05"/>
<text x="513.2" y="423.8" font-size="3.4" fill="#5a2a0c" font-weight="bold" text-anchor="middle" stroke="#5a2a0c" stroke-width="0.3">1</text>
<rect x="527.7" y="417.3" width="8.6" height="10.1" fill="#c4b19f" stroke="#c97b30" stroke-width="1.05"/>
<text x="532.0" y="423.8" font-size="3.4" fill="#5a2a0c" font-weight="bold" text-anchor="middle" stroke="#5a2a0c" stroke-width="0.3">2</text>
<rect x="507.4" y="404.2" width="30.4" height="13.6" fill="#c4b19f" stroke="#c97b30" stroke-width="1.05"/>
<text x="522.6" y="412.6" font-size="4.6" fill="#5a2a0c" font-weight="normal" text-anchor="middle" stroke="#5a2a0c" stroke-width="0.4">V51011</text>
<rect x="559.2" y="394.6" width="8.3" height="10.1" fill="#c4b19f" stroke="#c97b30" stroke-width="1.05"/>
<text x="563.4" y="400.8" font-size="3.4" fill="#5a2a0c" font-weight="bold" text-anchor="middle" stroke="#5a2a0c" stroke-width="0.3">3</text>
<rect x="549.7" y="417.3" width="8.5" height="10.1" fill="#c4b19f" stroke="#c97b30" stroke-width="1.05"/>
<text x="554.0" y="423.8" font-size="3.4" fill="#5a2a0c" font-weight="bold" text-anchor="middle" stroke="#5a2a0c" stroke-width="0.3">1</text>
<rect x="568.5" y="417.3" width="8.6" height="10.1" fill="#c4b19f" stroke="#c97b30" stroke-width="1.05"/>
<text x="572.8" y="423.8" font-size="3.4" fill="#5a2a0c" font-weight="bold" text-anchor="middle" stroke="#5a2a0c" stroke-width="0.3">2</text>
<rect x="548.2" y="404.2" width="30.4" height="13.6" fill="#c4b19f" stroke="#c97b30" stroke-width="1.05"/>
<text x="563.4" y="412.6" font-size="4.6" fill="#5a2a0c" font-weight="normal" text-anchor="middle" stroke="#5a2a0c" stroke-width="0.4">V51012</text>
<rect x="597.7" y="394.6" width="8.3" height="10.1" fill="#c4b19f" stroke="#c97b30" stroke-width="1.05"/>
<text x="601.9" y="400.8" font-size="3.4" fill="#5a2a0c" font-weight="bold" text-anchor="middle" stroke="#5a2a0c" stroke-width="0.3">3</text>
<rect x="588.2" y="417.3" width="8.5" height="10.1" fill="#c4b19f" stroke="#c97b30" stroke-width="1.05"/>
<text x="592.5" y="423.8" font-size="3.4" fill="#5a2a0c" font-weight="bold" text-anchor="middle" stroke="#5a2a0c" stroke-width="0.3">1</text>
<rect x="607.0" y="417.3" width="8.6" height="10.1" fill="#c4b19f" stroke="#c97b30" stroke-width="1.05"/>
<text x="611.3" y="423.8" font-size="3.4" fill="#5a2a0c" font-weight="bold" text-anchor="middle" stroke="#5a2a0c" stroke-width="0.3">2</text>
<rect x="586.7" y="404.2" width="30.4" height="13.6" fill="#c4b19f" stroke="#c97b30" stroke-width="1.05"/>
<text x="601.9" y="412.6" font-size="4.6" fill="#5a2a0c" font-weight="normal" text-anchor="middle" stroke="#5a2a0c" stroke-width="0.4">V51013</text>
<rect x="635.5" y="394.6" width="8.3" height="10.1" fill="#c4b19f" stroke="#c97b30" stroke-width="1.05"/>
<text x="639.7" y="400.8" font-size="3.4" fill="#5a2a0c" font-weight="bold" text-anchor="middle" stroke="#5a2a0c" stroke-width="0.3">3</text>
<rect x="626.0" y="417.3" width="8.5" height="10.1" fill="#c4b19f" stroke="#c97b30" stroke-width="1.05"/>
<text x="630.3" y="423.8" font-size="3.4" fill="#5a2a0c" font-weight="bold" text-anchor="middle" stroke="#5a2a0c" stroke-width="0.3">1</text>
<rect x="644.8" y="417.3" width="8.6" height="10.1" fill="#c4b19f" stroke="#c97b30" stroke-width="1.05"/>
<text x="649.1" y="423.8" font-size="3.4" fill="#5a2a0c" font-weight="bold" text-anchor="middle" stroke="#5a2a0c" stroke-width="0.3">2</text>
<rect x="624.5" y="404.2" width="30.4" height="13.6" fill="#c4b19f" stroke="#c97b30" stroke-width="1.05"/>
<text x="639.7" y="412.6" font-size="4.6" fill="#5a2a0c" font-weight="normal" text-anchor="middle" stroke="#5a2a0c" stroke-width="0.4">V51014</text>
<rect x="218.0" y="226.5" width="178.5" height="169.0" fill="#c4b19f" stroke="#c97b30" stroke-width="1.05"/>
<rect x="234.3" y="226.8" width="8.0" height="25.5" fill="none" stroke="#c97b30" stroke-width="1.05"/>
<text x="238.3" y="239.5" font-size="4.0" fill="#5a2a0c" font-weight="bold" text-anchor="middle" stroke="#5a2a0c" stroke-width="0.3">24</text>
<rect x="246.9" y="226.8" width="8.0" height="25.5" fill="none" stroke="#c97b30" stroke-width="1.05"/>
<text x="250.9" y="239.5" font-size="4.0" fill="#5a2a0c" font-weight="bold" text-anchor="middle" stroke="#5a2a0c" stroke-width="0.3">23</text>
<rect x="259.6" y="226.8" width="8.0" height="25.5" fill="none" stroke="#c97b30" stroke-width="1.05"/>
<text x="263.6" y="239.5" font-size="4.0" fill="#5a2a0c" font-weight="bold" text-anchor="middle" stroke="#5a2a0c" stroke-width="0.3">22</text>
<rect x="272.2" y="226.8" width="8.0" height="25.5" fill="none" stroke="#c97b30" stroke-width="1.05"/>
<text x="276.2" y="239.5" font-size="4.0" fill="#5a2a0c" font-weight="bold" text-anchor="middle" stroke="#5a2a0c" stroke-width="0.3">21</text>
<rect x="284.9" y="226.8" width="8.0" height="25.5" fill="none" stroke="#c97b30" stroke-width="1.05"/>
<text x="288.9" y="239.5" font-size="4.0" fill="#5a2a0c" font-weight="bold" text-anchor="middle" stroke="#5a2a0c" stroke-width="0.3">20</text>
<rect x="297.6" y="226.8" width="8.0" height="25.5" fill="none" stroke="#c97b30" stroke-width="1.05"/>
<text x="301.6" y="239.5" font-size="4.0" fill="#5a2a0c" font-weight="bold" text-anchor="middle" stroke="#5a2a0c" stroke-width="0.3">19</text>
<rect x="310.2" y="226.8" width="8.0" height="25.5" fill="none" stroke="#c97b30" stroke-width="1.05"/>
<text x="314.2" y="239.5" font-size="4.0" fill="#5a2a0c" font-weight="bold" text-anchor="middle" stroke="#5a2a0c" stroke-width="0.3">18</text>
<rect x="322.9" y="226.8" width="8.0" height="25.5" fill="none" stroke="#c97b30" stroke-width="1.05"/>
<text x="326.9" y="239.5" font-size="4.0" fill="#5a2a0c" font-weight="bold" text-anchor="middle" stroke="#5a2a0c" stroke-width="0.3">17</text>
<rect x="335.5" y="226.8" width="8.0" height="25.5" fill="none" stroke="#c97b30" stroke-width="1.05"/>
<text x="339.5" y="239.5" font-size="4.0" fill="#5a2a0c" font-weight="bold" text-anchor="middle" stroke="#5a2a0c" stroke-width="0.3">16</text>
<rect x="348.2" y="226.8" width="8.0" height="25.5" fill="none" stroke="#c97b30" stroke-width="1.05"/>
<text x="352.2" y="239.5" font-size="4.0" fill="#5a2a0c" font-weight="bold" text-anchor="middle" stroke="#5a2a0c" stroke-width="0.3">15</text>
<rect x="360.8" y="226.8" width="8.0" height="25.5" fill="none" stroke="#c97b30" stroke-width="1.05"/>
<text x="364.8" y="239.5" font-size="4.0" fill="#5a2a0c" font-weight="bold" text-anchor="middle" stroke="#5a2a0c" stroke-width="0.3">14</text>
<rect x="373.5" y="226.8" width="8.0" height="25.5" fill="none" stroke="#c97b30" stroke-width="1.05"/>
<text x="377.5" y="239.5" font-size="4.0" fill="#5a2a0c" font-weight="bold" text-anchor="middle" stroke="#5a2a0c" stroke-width="0.3">13</text>
<rect x="234.3" y="370.2" width="8.0" height="25.0" fill="none" stroke="#c97b30" stroke-width="1.05"/>
<text x="238.3" y="383.5" font-size="4.0" fill="#5a2a0c" font-weight="bold" text-anchor="middle" stroke="#5a2a0c" stroke-width="0.3">1</text>
<rect x="246.9" y="370.2" width="8.0" height="25.0" fill="none" stroke="#c97b30" stroke-width="1.05"/>
<text x="250.9" y="383.5" font-size="4.0" fill="#5a2a0c" font-weight="bold" text-anchor="middle" stroke="#5a2a0c" stroke-width="0.3">2</text>
<rect x="259.6" y="370.2" width="8.0" height="25.0" fill="none" stroke="#c97b30" stroke-width="1.05"/>
<text x="263.6" y="383.5" font-size="4.0" fill="#5a2a0c" font-weight="bold" text-anchor="middle" stroke="#5a2a0c" stroke-width="0.3">3</text>
<rect x="272.2" y="370.2" width="8.0" height="25.0" fill="none" stroke="#c97b30" stroke-width="1.05"/>
<text x="276.2" y="383.5" font-size="4.0" fill="#5a2a0c" font-weight="bold" text-anchor="middle" stroke="#5a2a0c" stroke-width="0.3">4</text>
<rect x="284.9" y="370.2" width="8.0" height="25.0" fill="none" stroke="#c97b30" stroke-width="1.05"/>
<text x="288.9" y="383.5" font-size="4.0" fill="#5a2a0c" font-weight="bold" text-anchor="middle" stroke="#5a2a0c" stroke-width="0.3">5</text>
<rect x="297.6" y="370.2" width="8.0" height="25.0" fill="none" stroke="#c97b30" stroke-width="1.05"/>
<text x="301.6" y="383.5" font-size="4.0" fill="#5a2a0c" font-weight="bold" text-anchor="middle" stroke="#5a2a0c" stroke-width="0.3">6</text>
<rect x="310.2" y="370.2" width="8.0" height="25.0" fill="none" stroke="#c97b30" stroke-width="1.05"/>
<text x="314.2" y="383.5" font-size="4.0" fill="#5a2a0c" font-weight="bold" text-anchor="middle" stroke="#5a2a0c" stroke-width="0.3">7</text>
<rect x="322.9" y="370.2" width="8.0" height="25.0" fill="none" stroke="#c97b30" stroke-width="1.05"/>
<text x="326.9" y="383.5" font-size="4.0" fill="#5a2a0c" font-weight="bold" text-anchor="middle" stroke="#5a2a0c" stroke-width="0.3">8</text>
<rect x="335.5" y="370.2" width="8.0" height="25.0" fill="none" stroke="#c97b30" stroke-width="1.05"/>
<text x="339.5" y="383.5" font-size="4.0" fill="#5a2a0c" font-weight="bold" text-anchor="middle" stroke="#5a2a0c" stroke-width="0.3">9</text>
<rect x="348.2" y="370.2" width="8.0" height="25.0" fill="none" stroke="#c97b30" stroke-width="1.05"/>
<text x="352.2" y="383.5" font-size="4.0" fill="#5a2a0c" font-weight="bold" text-anchor="middle" stroke="#5a2a0c" stroke-width="0.3">10</text>
<rect x="360.8" y="370.2" width="8.0" height="25.0" fill="none" stroke="#c97b30" stroke-width="1.05"/>
<text x="364.8" y="383.5" font-size="4.0" fill="#5a2a0c" font-weight="bold" text-anchor="middle" stroke="#5a2a0c" stroke-width="0.3">11</text>
<rect x="373.5" y="370.2" width="8.0" height="25.0" fill="none" stroke="#c97b30" stroke-width="1.05"/>
<text x="377.5" y="383.5" font-size="4.0" fill="#5a2a0c" font-weight="bold" text-anchor="middle" stroke="#5a2a0c" stroke-width="0.3">12</text>
<text x="306.4" y="317.7" font-size="15.6" text-anchor="middle" letter-spacing="-0.7" fill="none" stroke="#5e4a56" stroke-width="0.6">T51002</text>
<polygon points="-12.0,409.4 31.8,409.4 54.3,431.0 77.6,431.0 84.4,438.0 123.7,438.0 123.7,463.1 84.4,463.1 77.6,469.3 54.3,469.3 31.8,492.4 -12.0,492.4" fill="#c4b19f" stroke="#c97b30" stroke-width="1.05"/>
<rect x="7.3" y="409.4" width="18.5" height="14.9" fill="none" stroke="#c97b30" stroke-width="1.05"/>
<text x="16.5" y="418.0" font-size="4.3" fill="#5a2a0c" font-weight="bold" text-anchor="middle" stroke="#5a2a0c" stroke-width="0.3">smmsg_1</text>
<rect x="7.3" y="477.4" width="18.5" height="15.0" fill="none" stroke="#c97b30" stroke-width="1.05"/>
<text x="16.5" y="486.6" font-size="4.3" fill="#5a2a0c" font-weight="bold" text-anchor="middle" stroke="#5a2a0c" stroke-width="0.3">smmsg_3</text>
<text x="35.6" y="456.4" font-size="15.6" text-anchor="end" letter-spacing="-0.7" fill="none" stroke="#5e4a56" stroke-width="0.6">X4200</text>
<rect x="149.4" y="510.4" width="31.1" height="66.1" fill="#c4b19f" stroke="#c97b30" stroke-width="1.05"/>
<rect x="155.2" y="510.7" width="19.5" height="24.7" fill="none" stroke="#c97b30" stroke-width="1.05"/>
<text x="164.9" y="526.8" font-size="10" fill="#5a2a0c" font-weight="bold" text-anchor="middle" stroke="#5a2a0c" stroke-width="0.5">1</text>
<rect x="155.2" y="552.0" width="19.5" height="24.2" fill="none" stroke="#c97b30" stroke-width="1.05"/>
<text x="164.9" y="567.6" font-size="10" fill="#5a2a0c" font-weight="bold" text-anchor="middle" stroke="#5a2a0c" stroke-width="0.5">2</text>
<text x="164.9" y="544.8" font-size="4.6" fill="#5a2a0c" font-weight="normal" text-anchor="middle" stroke="#5a2a0c" stroke-width="0.3">V51501</text>
<rect x="204.3" y="524.4" width="20.6" height="45.1" fill="#c4b19f" stroke="#c97b30" stroke-width="1.05"/>
<line x1="204.3" x2="224.9" y1="538.7" y2="538.7" stroke="#c97b30" stroke-width="0.9"/>
<line x1="204.3" x2="224.9" y1="556.2" y2="556.2" stroke="#c97b30" stroke-width="0.9"/>
<text x="214.6" y="535.0" font-size="10" fill="#5a2a0c" font-weight="bold" text-anchor="middle" stroke="#5a2a0c" stroke-width="0.5">1</text>
<text x="214.6" y="566.2" font-size="10" fill="#5a2a0c" font-weight="bold" text-anchor="middle" stroke="#5a2a0c" stroke-width="0.5">2</text>
<text x="214.6" y="548.2" font-size="4.0" fill="#5a2a0c" font-weight="bold" text-anchor="middle" stroke="#5a2a0c" stroke-width="0.3">V5150</text>
<rect x="229.0" y="524.4" width="20.6" height="45.1" fill="#c4b19f" stroke="#c97b30" stroke-width="1.05"/>
<line x1="229.0" x2="249.6" y1="538.7" y2="538.7" stroke="#c97b30" stroke-width="0.9"/>
<line x1="229.0" x2="249.6" y1="556.2" y2="556.2" stroke="#c97b30" stroke-width="0.9"/>
<text x="239.3" y="535.0" font-size="10" fill="#5a2a0c" font-weight="bold" text-anchor="middle" stroke="#5a2a0c" stroke-width="0.5">1</text>
<text x="239.3" y="566.2" font-size="10" fill="#5a2a0c" font-weight="bold" text-anchor="middle" stroke="#5a2a0c" stroke-width="0.5">2</text>
<text x="239.3" y="548.2" font-size="4.0" fill="#5a2a0c" font-weight="bold" text-anchor="middle" stroke="#5a2a0c" stroke-width="0.3">V5150</text>
<rect x="254.0" y="524.4" width="20.6" height="45.1" fill="#c4b19f" stroke="#c97b30" stroke-width="1.05"/>
<line x1="254.0" x2="274.6" y1="538.7" y2="538.7" stroke="#c97b30" stroke-width="0.9"/>
<line x1="254.0" x2="274.6" y1="556.2" y2="556.2" stroke="#c97b30" stroke-width="0.9"/>
<text x="264.3" y="535.0" font-size="10" fill="#5a2a0c" font-weight="bold" text-anchor="middle" stroke="#5a2a0c" stroke-width="0.5">1</text>
<text x="264.3" y="566.2" font-size="10" fill="#5a2a0c" font-weight="bold" text-anchor="middle" stroke="#5a2a0c" stroke-width="0.5">2</text>
<text x="264.3" y="548.2" font-size="4.0" fill="#5a2a0c" font-weight="bold" text-anchor="middle" stroke="#5a2a0c" stroke-width="0.3">V5150</text>
<rect x="278.3" y="524.4" width="20.6" height="45.1" fill="#c4b19f" stroke="#c97b30" stroke-width="1.05"/>
<line x1="278.3" x2="298.9" y1="538.7" y2="538.7" stroke="#c97b30" stroke-width="0.9"/>
<line x1="278.3" x2="298.9" y1="556.2" y2="556.2" stroke="#c97b30" stroke-width="0.9"/>
<text x="288.6" y="535.0" font-size="10" fill="#5a2a0c" font-weight="bold" text-anchor="middle" stroke="#5a2a0c" stroke-width="0.5">1</text>
<text x="288.6" y="566.2" font-size="10" fill="#5a2a0c" font-weight="bold" text-anchor="middle" stroke="#5a2a0c" stroke-width="0.5">2</text>
<text x="288.6" y="548.2" font-size="4.0" fill="#5a2a0c" font-weight="bold" text-anchor="middle" stroke="#5a2a0c" stroke-width="0.3">V5150</text>
<rect x="119.7" y="593.7" width="140.1" height="82.3" fill="#c4b19f" stroke="#c97b30" stroke-width="1.05"/>
<rect x="134.4" y="594.0" width="11.8" height="23.5" fill="none" stroke="#c97b30" stroke-width="1.05"/>
<text x="140.3" y="608.4" font-size="6.4" fill="#5a2a0c" font-weight="bold" text-anchor="middle" stroke="#5a2a0c" stroke-width="0.5">6</text>
<rect x="158.7" y="594.0" width="12.8" height="23.5" fill="none" stroke="#c97b30" stroke-width="1.05"/>
<text x="165.1" y="608.4" font-size="6.4" fill="#5a2a0c" font-weight="bold" text-anchor="middle" stroke="#5a2a0c" stroke-width="0.5">7</text>
<rect x="183.7" y="594.0" width="11.8" height="23.5" fill="none" stroke="#c97b30" stroke-width="1.05"/>
<text x="189.6" y="608.4" font-size="6.4" fill="#5a2a0c" font-weight="bold" text-anchor="middle" stroke="#5a2a0c" stroke-width="0.5">8</text>
<rect x="209.3" y="594.0" width="11.5" height="23.5" fill="none" stroke="#c97b30" stroke-width="1.05"/>
<text x="215.1" y="608.4" font-size="6.4" fill="#5a2a0c" font-weight="bold" text-anchor="middle" stroke="#5a2a0c" stroke-width="0.5">9</text>
<rect x="233.3" y="594.0" width="12.5" height="23.5" fill="none" stroke="#c97b30" stroke-width="1.05"/>
<text x="239.6" y="608.4" font-size="6.4" fill="#5a2a0c" font-weight="bold" text-anchor="middle" stroke="#5a2a0c" stroke-width="0.5">10</text>
<rect x="462.3" y="467.6" width="179.3" height="176.5" fill="#c4b19f" stroke="#c97b30" stroke-width="1.05" rx="1.5"/>
<text x="550.4" y="562.0" font-size="15.6" text-anchor="middle" letter-spacing="-0.7" fill="none" stroke="#5e4a56" stroke-width="0.6">X51500</text>
<circle cx="474.1" cy="571.7" r="10.4" fill="none" stroke="#c97b30" stroke-width="0.9"/>
<text x="474.1" y="573.3" font-size="4.8" fill="#5a2a0c" font-weight="bold" text-anchor="middle" stroke="#5a2a0c" stroke-width="0.3">body1</text>
<circle cx="629.3" cy="571.7" r="10.4" fill="none" stroke="#c97b30" stroke-width="0.9"/>
<text x="629.3" y="573.3" font-size="4.8" fill="#5a2a0c" font-weight="bold" text-anchor="middle" stroke="#5a2a0c" stroke-width="0.3">body2</text>
<circle cx="520.2" cy="597.3" r="8.2" fill="none" stroke="#c97b30" stroke-width="0.9"/>
<text x="520.2" y="600.4" font-size="8.4" fill="#5a2a0c" font-weight="bold" text-anchor="middle" stroke="#5a2a0c" stroke-width="0.5">7</text>
<circle cx="545.4" cy="597.3" r="8.2" fill="none" stroke="#c97b30" stroke-width="0.9"/>
<text x="545.4" y="600.4" font-size="8.4" fill="#5a2a0c" font-weight="bold" text-anchor="middle" stroke="#5a2a0c" stroke-width="0.5">5</text>
<circle cx="570.5" cy="597.3" r="8.2" fill="none" stroke="#c97b30" stroke-width="0.9"/>
<text x="570.5" y="600.4" font-size="8.4" fill="#5a2a0c" font-weight="bold" text-anchor="middle" stroke="#5a2a0c" stroke-width="0.5">3</text>
<circle cx="595.5" cy="597.3" r="8.2" fill="none" stroke="#c97b30" stroke-width="0.9"/>
<text x="595.5" y="600.4" font-size="8.4" fill="#5a2a0c" font-weight="bold" text-anchor="middle" stroke="#5a2a0c" stroke-width="0.5">1</text>
<circle cx="507.4" cy="622.4" r="8.2" fill="none" stroke="#c97b30" stroke-width="0.9"/>
<text x="507.4" y="625.5" font-size="8.4" fill="#5a2a0c" font-weight="bold" text-anchor="middle" stroke="#5a2a0c" stroke-width="0.5">8</text>
<circle cx="532.9" cy="622.4" r="8.2" fill="none" stroke="#c97b30" stroke-width="0.9"/>
<text x="532.9" y="625.5" font-size="8.4" fill="#5a2a0c" font-weight="bold" text-anchor="middle" stroke="#5a2a0c" stroke-width="0.5">6</text>
<circle cx="558.0" cy="622.4" r="8.2" fill="none" stroke="#c97b30" stroke-width="0.9"/>
<text x="558.0" y="625.5" font-size="8.4" fill="#5a2a0c" font-weight="bold" text-anchor="middle" stroke="#5a2a0c" stroke-width="0.5">4</text>
<circle cx="583.2" cy="622.4" r="8.2" fill="none" stroke="#c97b30" stroke-width="0.9"/>
<text x="583.2" y="625.5" font-size="8.4" fill="#5a2a0c" font-weight="bold" text-anchor="middle" stroke="#5a2a0c" stroke-width="0.5">2</text>
<path d="M815.4,-9.0 V58.6 A17,18 0 0 1 798.4,76.6 H773.6 A47.3,45 0 0 0 726.3,121.6 V180.6 A47.3,45 0 0 0 773.6,225.3 H798.4 A17,18 0 0 1 815.4,243.3 V780" fill="none" stroke="#8e6146" stroke-width="1"/>
<rect x="519.2" y="276.2" width="125.6" height="105.5" fill="#c4a7a1" stroke="#9ecdd1" stroke-width="5"/>
<rect x="535.1" y="276.2" width="6.3" height="15.1" fill="none" stroke="#d4302c" stroke-width="0.9"/>
<text x="538.2" y="283.6" font-size="4.0" fill="#4a2208" font-weight="bold" text-anchor="middle" stroke="#4a2208" stroke-width="0.3">16</text>
<rect x="547.7" y="276.2" width="6.3" height="15.1" fill="none" stroke="#d4302c" stroke-width="0.9"/>
<text x="550.9" y="283.6" font-size="4.0" fill="#4a2208" font-weight="bold" text-anchor="middle" stroke="#4a2208" stroke-width="0.3">15</text>
<rect x="560.4" y="276.2" width="6.3" height="15.1" fill="none" stroke="#d4302c" stroke-width="0.9"/>
<text x="563.5" y="283.6" font-size="4.0" fill="#4a2208" font-weight="bold" text-anchor="middle" stroke="#4a2208" stroke-width="0.3">14</text>
<rect x="573.0" y="276.2" width="6.3" height="15.1" fill="none" stroke="#d4302c" stroke-width="0.9"/>
<text x="576.2" y="283.6" font-size="4.0" fill="#4a2208" font-weight="bold" text-anchor="middle" stroke="#4a2208" stroke-width="0.3">13</text>
<rect x="585.7" y="276.2" width="6.3" height="15.1" fill="none" stroke="#d4302c" stroke-width="0.9"/>
<text x="588.8" y="283.6" font-size="4.0" fill="#4a2208" font-weight="bold" text-anchor="middle" stroke="#4a2208" stroke-width="0.3">12</text>
<rect x="598.3" y="276.2" width="6.3" height="15.1" fill="none" stroke="#d4302c" stroke-width="0.9"/>
<text x="601.5" y="283.6" font-size="4.0" fill="#4a2208" font-weight="bold" text-anchor="middle" stroke="#4a2208" stroke-width="0.3">11</text>
<rect x="610.9" y="276.2" width="6.3" height="15.1" fill="none" stroke="#d4302c" stroke-width="0.9"/>
<text x="614.1" y="283.6" font-size="4.0" fill="#4a2208" font-weight="bold" text-anchor="middle" stroke="#4a2208" stroke-width="0.3">10</text>
<rect x="623.6" y="276.2" width="6.3" height="15.1" fill="none" stroke="#d4302c" stroke-width="0.9"/>
<text x="626.7" y="283.6" font-size="4.0" fill="#4a2208" font-weight="bold" text-anchor="middle" stroke="#4a2208" stroke-width="0.3">9</text>
<rect x="535.1" y="363.9" width="6.3" height="17.8" fill="none" stroke="#d4302c" stroke-width="0.9"/>
<text x="538.2" y="373.5" font-size="4.0" fill="#4a2208" font-weight="bold" text-anchor="middle" stroke="#4a2208" stroke-width="0.3">1</text>
<rect x="547.7" y="363.9" width="6.3" height="17.8" fill="none" stroke="#d4302c" stroke-width="0.9"/>
<text x="550.9" y="373.5" font-size="4.0" fill="#4a2208" font-weight="bold" text-anchor="middle" stroke="#4a2208" stroke-width="0.3">2</text>
<rect x="560.4" y="363.9" width="6.3" height="17.8" fill="none" stroke="#d4302c" stroke-width="0.9"/>
<text x="563.5" y="373.5" font-size="4.0" fill="#4a2208" font-weight="bold" text-anchor="middle" stroke="#4a2208" stroke-width="0.3">3</text>
<rect x="573.0" y="363.9" width="6.3" height="17.8" fill="none" stroke="#d4302c" stroke-width="0.9"/>
<text x="576.2" y="373.5" font-size="4.0" fill="#4a2208" font-weight="bold" text-anchor="middle" stroke="#4a2208" stroke-width="0.3">4</text>
<rect x="585.7" y="363.9" width="6.3" height="17.8" fill="none" stroke="#d4302c" stroke-width="0.9"/>
<text x="588.8" y="373.5" font-size="4.0" fill="#4a2208" font-weight="bold" text-anchor="middle" stroke="#4a2208" stroke-width="0.3">5</text>
<rect x="598.3" y="363.9" width="6.3" height="17.8" fill="none" stroke="#d4302c" stroke-width="0.9"/>
<text x="601.5" y="373.5" font-size="4.0" fill="#4a2208" font-weight="bold" text-anchor="middle" stroke="#4a2208" stroke-width="0.3">6</text>
<rect x="610.9" y="363.9" width="6.3" height="17.8" fill="none" stroke="#d4302c" stroke-width="0.9"/>
<text x="614.1" y="373.5" font-size="4.0" fill="#4a2208" font-weight="bold" text-anchor="middle" stroke="#4a2208" stroke-width="0.3">7</text>
<rect x="623.6" y="363.9" width="6.3" height="17.8" fill="none" stroke="#d4302c" stroke-width="0.9"/>
<text x="626.7" y="373.5" font-size="4.0" fill="#4a2208" font-weight="bold" text-anchor="middle" stroke="#4a2208" stroke-width="0.3">8</text>
<rect x="519.2" y="276.2" width="125.6" height="105.5" fill="none" stroke="#cf45c9" stroke-width="2"/>
<text x="581.0" y="334.0" font-size="15.6" text-anchor="middle" letter-spacing="-0.7" fill="none" stroke="#5e4a56" stroke-width="0.6">T51000</text>
<line x1="582" x2="582" y1="-5" y2="242.6" stroke="#d05ccf" stroke-width="2"/>
<line x1="582" x2="582" y1="415.4" y2="700" stroke="#d05ccf" stroke-width="2"/>
<line x1="-5" x2="495.6" y1="328.8" y2="328.8" stroke="#d05ccf" stroke-width="1.8"/>
<line x1="668.4" x2="1300" y1="328.8" y2="328.8" stroke="#d05ccf" stroke-width="1.8"/>
<circle cx="582" cy="329" r="86.4" fill="none" stroke="#cf45c9" stroke-width="1.4"/>
</svg></div>
<div id="toplabel" class="abs"></div>
<div id="mini" class="abs"><svg class="mini" width="190" height="130" viewBox="0 0 190 130">
<polygon points="0.6,51.9 57.7,51.9 57.7,39.6 173.1,39.6 173.1,53.5 170.0,54.4 170.0,59.5 173.1,60.5 173.1,77.6 169.6,78.9 169.6,88.4 173.1,89.7 173.1,106.2 86.9,106.2 85.6,104.9 84.3,106.2 0.6,106.2 0.6,78.3 1.6,77.0 0.6,75.7" fill="#cecece" stroke="#b9b9b9" stroke-width="0.6"/>
<rect x="3.1" y="32.0" width="7.0" height="20.3" fill="#dcc1a5" stroke="#d29c69" stroke-width="0.5"/>
<rect x="4.2" y="32.9" width="4.9" height="5.5" fill="#d8b592" stroke="#d29d6b" stroke-width="0.3"/>
<rect x="4.2" y="45.3" width="4.9" height="6.1" fill="#d8b592" stroke="#d29d6b" stroke-width="0.3"/>
<rect x="15.2" y="32.0" width="7.0" height="20.3" fill="#dcc1a5" stroke="#d29c69" stroke-width="0.5"/>
<rect x="16.2" y="32.9" width="4.9" height="5.5" fill="#d8b592" stroke="#d29d6b" stroke-width="0.3"/>
<rect x="16.2" y="45.3" width="4.9" height="6.1" fill="#d8b592" stroke="#d29d6b" stroke-width="0.3"/>
<rect x="26.6" y="32.0" width="7.0" height="20.3" fill="#dcc1a5" stroke="#d29c69" stroke-width="0.5"/>
<rect x="27.6" y="32.9" width="4.9" height="5.5" fill="#d8b592" stroke="#d29d6b" stroke-width="0.3"/>
<rect x="27.6" y="45.3" width="4.9" height="6.1" fill="#d8b592" stroke="#d29d6b" stroke-width="0.3"/>
<rect x="38.0" y="32.0" width="7.0" height="20.3" fill="#dcc1a5" stroke="#d29c69" stroke-width="0.5"/>
<rect x="39.0" y="32.9" width="4.9" height="5.5" fill="#d8b592" stroke="#d29d6b" stroke-width="0.3"/>
<rect x="39.0" y="45.3" width="4.9" height="6.1" fill="#d8b592" stroke="#d29d6b" stroke-width="0.3"/>
<rect x="49.5" y="32.0" width="7.0" height="20.3" fill="#dcc1a5" stroke="#d29c69" stroke-width="0.5"/>
<rect x="50.5" y="32.9" width="4.9" height="5.5" fill="#d8b592" stroke="#d29d6b" stroke-width="0.3"/>
<rect x="50.5" y="45.3" width="4.9" height="6.1" fill="#d8b592" stroke="#d29d6b" stroke-width="0.3"/>
<rect x="63.4" y="33.2" width="15.2" height="7.0" fill="#dcc1a5" stroke="#d29c69" stroke-width="0.5"/>
<rect x="65.9" y="32.2" width="10.1" height="1.0" fill="#dcc0a2" stroke="#d29d6b" stroke-width="0.3"/>
<rect x="86.2" y="33.2" width="12.1" height="6.3" fill="#dcc1a5" stroke="#d29c69" stroke-width="0.5"/>
<rect x="88.8" y="32.2" width="7.0" height="1.0" fill="#dcc0a2" stroke="#d29d6b" stroke-width="0.3"/>
<rect x="105.3" y="33.9" width="17.8" height="6.3" fill="#dcc1a5" stroke="#d29c69" stroke-width="0.5"/>
<rect x="107.8" y="32.9" width="12.7" height="1.0" fill="#dcc0a2" stroke="#d29d6b" stroke-width="0.3"/>
<rect x="128.5" y="31.3" width="7.2" height="8.6" fill="#dcc1a5" stroke="#d29c69" stroke-width="0.5"/>
<rect x="129.5" y="37.1" width="5.2" height="2.2" fill="#d8b592" stroke="#d29d6b" stroke-width="0.3"/>
<rect x="139.1" y="31.3" width="7.2" height="8.6" fill="#dcc1a5" stroke="#d29c69" stroke-width="0.5"/>
<rect x="140.2" y="37.1" width="5.2" height="2.2" fill="#d8b592" stroke="#d29d6b" stroke-width="0.3"/>
<rect x="150.3" y="31.3" width="7.2" height="8.6" fill="#dcc1a5" stroke="#d29c69" stroke-width="0.5"/>
<rect x="151.3" y="37.1" width="5.2" height="2.2" fill="#d8b592" stroke="#d29d6b" stroke-width="0.3"/>
<rect x="161.5" y="31.3" width="7.2" height="8.6" fill="#dcc1a5" stroke="#d29c69" stroke-width="0.5"/>
<rect x="162.5" y="37.1" width="5.2" height="2.2" fill="#d8b592" stroke="#d29d6b" stroke-width="0.3"/>
<rect x="14.6" y="58.6" width="8.9" height="6.3" fill="#d9ae82" stroke="#cd8f54" stroke-width="0.55"/>
<rect x="15.8" y="59.6" width="6.3" height="4.3" fill="#e0c8ae" stroke="#d29d6b" stroke-width="0.3"/>
<rect x="31.7" y="60.5" width="10.8" height="10.8" fill="#d39a5f" stroke="#c8843f" stroke-width="0.6"/>
<rect x="51.4" y="64.3" width="6.3" height="7.0" fill="#d39a5f" stroke="#c8843f" stroke-width="0.6"/>
<rect x="52.4" y="65.3" width="4.3" height="4.9" fill="#dcb088" stroke="#d29d6b" stroke-width="0.3"/>
<rect x="27.3" y="81.5" width="11.4" height="11.4" fill="#d39a5f" stroke="#c8843f" stroke-width="0.6"/>
<rect x="69.7" y="71.7" width="7.0" height="6.6" fill="#d39a5f" stroke="#c8843f" stroke-width="0.6"/>
<rect x="120.2" y="62.4" width="7.9" height="8.2" fill="#d39a5f" stroke="#c8843f" stroke-width="0.6"/>
<rect x="121.6" y="63.8" width="5.1" height="5.5" fill="#d8a672" stroke="#d29d6b" stroke-width="0.3"/>
<rect x="83.1" y="61.8" width="8.9" height="12.1" fill="#dcc1a5" stroke="#d29c69" stroke-width="0.5"/>
<rect x="61.5" y="55.4" width="5.7" height="5.7" fill="#dcc1a5" stroke="#d29c69" stroke-width="0.5"/>
<rect x="62.1" y="87.2" width="12.7" height="10.8" fill="#dcc1a5" stroke="#d29c69" stroke-width="0.5"/>
<rect x="91.9" y="81.5" width="10.1" height="9.5" fill="#dcc1a5" stroke="#d29c69" stroke-width="0.5"/>
<rect x="91.9" y="91.6" width="10.1" height="8.2" fill="#dcc1a5" stroke="#d29c69" stroke-width="0.5"/>
<rect x="106.5" y="54.8" width="4.4" height="20.9" fill="#d9ae82" stroke="#cd8f54" stroke-width="0.55"/>
<rect x="114.1" y="71.9" width="7.0" height="5.1" fill="#dcc1a5" stroke="#d29c69" stroke-width="0.5"/>
<rect x="119.9" y="87.8" width="5.7" height="7.0" fill="#dcc1a5" stroke="#d29c69" stroke-width="0.5"/>
<rect x="148.4" y="58.0" width="7.0" height="8.2" fill="#dcc1a5" stroke="#d29c69" stroke-width="0.5"/>
<rect x="149.3" y="65.0" width="1.6" height="2.9" fill="#dcc0a2" stroke="#d29d6b" stroke-width="0.3"/>
<rect x="152.6" y="65.0" width="1.8" height="2.9" fill="#dcc0a2" stroke="#d29d6b" stroke-width="0.3"/>
<rect x="157.9" y="68.8" width="7.6" height="6.3" fill="#d9ae82" stroke="#cd8f54" stroke-width="0.55"/>
<rect x="159.2" y="49.1" width="6.3" height="4.4" fill="#d9ae82" stroke="#cd8f54" stroke-width="0.55"/>
<rect x="140.2" y="50.4" width="5.1" height="5.1" fill="#dcc1a5" stroke="#d29c69" stroke-width="0.5"/>
<rect x="157.3" y="81.5" width="7.0" height="6.3" fill="#dcc1a5" stroke="#d29c69" stroke-width="0.5"/>
<rect x="149.0" y="93.5" width="6.3" height="6.3" fill="#d39a5f" stroke="#c8843f" stroke-width="0.6"/>
<rect x="43.1" y="98.6" width="5.7" height="6.3" fill="#dcc1a5" stroke="#d29c69" stroke-width="0.5"/>
<rect x="97.0" y="99.8" width="5.7" height="4.4" fill="#dcc1a5" stroke="#d29c69" stroke-width="0.5"/>
<rect x="5.1" y="81.5" width="3.8" height="19.7" fill="#d9ae82" stroke="#cd8f54" stroke-width="0.55"/>
<rect x="53.9" y="56.7" width="2.5" height="3.8" fill="#dcc1a5" stroke="#d29c69" stroke-width="0.5"/>
<rect x="21.5" y="66.9" width="4.4" height="3.8" fill="#dcc1a5" stroke="#d29c69" stroke-width="0.5"/>
<rect x="48.8" y="75.7" width="3.8" height="3.8" fill="#dcc1a5" stroke="#d29c69" stroke-width="0.5"/>
<rect x="127.5" y="77.6" width="5.1" height="4.4" fill="#dcc1a5" stroke="#d29c69" stroke-width="0.5"/>
<rect x="81.2" y="75.1" width="4.4" height="4.4" fill="#dcc1a5" stroke="#d29c69" stroke-width="0.5"/>
<rect x="89.4" y="75.7" width="5.1" height="3.2" fill="#dcc1a5" stroke="#d29c69" stroke-width="0.5"/>
<rect x="96.4" y="75.7" width="7.0" height="3.2" fill="#dcc1a5" stroke="#d29c69" stroke-width="0.5"/>
<rect x="11.4" y="82.1" width="4.4" height="3.8" fill="#dcc1a5" stroke="#d29c69" stroke-width="0.5"/>
<rect x="11.4" y="87.2" width="4.4" height="3.8" fill="#dcc1a5" stroke="#d29c69" stroke-width="0.5"/>
<rect x="11.4" y="92.2" width="4.4" height="3.8" fill="#dcc1a5" stroke="#d29c69" stroke-width="0.5"/>
<rect x="18.4" y="82.1" width="4.4" height="3.8" fill="#dcc1a5" stroke="#d29c69" stroke-width="0.5"/>
<rect x="18.4" y="87.2" width="4.4" height="3.8" fill="#dcc1a5" stroke="#d29c69" stroke-width="0.5"/>
<rect x="18.4" y="92.2" width="4.4" height="3.8" fill="#dcc1a5" stroke="#d29c69" stroke-width="0.5"/>
<rect x="13.3" y="73.8" width="3.8" height="3.8" fill="#dcc1a5" stroke="#d29c69" stroke-width="0.5"/>
<rect x="20.3" y="73.8" width="3.8" height="3.8" fill="#dcc1a5" stroke="#d29c69" stroke-width="0.5"/>
<rect x="160.7" y="65.3" width="4.6" height="1.0" fill="#dcc0a2" stroke="#d29d6b" stroke-width="0.3"/>
<rect x="160.7" y="55.4" width="4.6" height="1.5" fill="#dcc0a2" stroke="#d29d6b" stroke-width="0.3"/>
<rect x="149.7" y="54.4" width="5.1" height="2.3" fill="#dcc0a2" stroke="#d29d6b" stroke-width="0.3"/>
<rect x="78.2" y="76.7" width="1.8" height="1.8" fill="#d6bea6" stroke="#c48a58" stroke-width="0.42"/>
<rect x="102.3" y="66.2" width="1.8" height="2.8" fill="#d6bea6" stroke="#b87a4a" stroke-width="0.42"/>
<rect x="4.4" y="74.7" width="1.0" height="1.0" fill="#d6bea6" stroke="#c48a58" stroke-width="0.42"/>
<rect x="101.6" y="53.4" width="1.3" height="2.8" fill="#dbccbd" stroke="#bd8150" stroke-width="0.42"/>
<rect x="112.4" y="66.9" width="2.3" height="1.0" fill="#dbccbd" stroke="#d0a47a" stroke-width="0.42"/>
<rect x="129.8" y="73.7" width="1.0" height="1.0" fill="#d8c6b4" stroke="#bd8150" stroke-width="0.42"/>
<rect x="155.5" y="71.0" width="1.8" height="1.8" fill="#d8c6b4" stroke="#b87a4a" stroke-width="0.42"/>
<rect x="24.6" y="86.1" width="1.0" height="1.0" fill="#d4b89c" stroke="#bd8150" stroke-width="0.42"/>
<rect x="31.9" y="76.7" width="1.8" height="2.3" fill="#d6bea6" stroke="#c48a58" stroke-width="0.42"/>
<rect x="72.6" y="65.4" width="1.8" height="1.8" fill="#d6bea6" stroke="#cc9a6c" stroke-width="0.42"/>
<rect x="33.5" y="104.7" width="2.3" height="2.8" fill="#d8c6b4" stroke="#cc9a6c" stroke-width="0.42"/>
<rect x="45.5" y="90.4" width="1.5" height="1.5" fill="#d4b89c" stroke="#cc9a6c" stroke-width="0.42"/>
<rect x="14.4" y="54.2" width="2.8" height="1.3" fill="#d8c6b4" stroke="#b87a4a" stroke-width="0.42"/>
<rect x="64.1" y="80.7" width="1.3" height="2.3" fill="#d4b89c" stroke="#b87a4a" stroke-width="0.42"/>
<rect x="124.3" y="51.0" width="2.8" height="2.3" fill="#d6bea6" stroke="#bd8150" stroke-width="0.42"/>
<rect x="45.2" y="93.6" width="2.3" height="1.8" fill="#dbccbd" stroke="#b87a4a" stroke-width="0.42"/>
<rect x="40.4" y="76.7" width="2.3" height="2.3" fill="#d8c6b4" stroke="#d0a47a" stroke-width="0.42"/>
<rect x="37.7" y="99.5" width="2.8" height="1.0" fill="#d8c6b4" stroke="#d0a47a" stroke-width="0.42"/>
<rect x="9.7" y="58.9" width="2.3" height="2.3" fill="#d6bea6" stroke="#cc9a6c" stroke-width="0.42"/>
<rect x="125.5" y="74.3" width="1.3" height="2.3" fill="#d8c6b4" stroke="#cc9a6c" stroke-width="0.42"/>
<rect x="78.3" y="64.4" width="1.0" height="2.8" fill="#d6bea6" stroke="#d0a47a" stroke-width="0.42"/>
<rect x="61.2" y="84.7" width="1.0" height="1.8" fill="#d8c6b4" stroke="#bd8150" stroke-width="0.42"/>
<rect x="100.2" y="79.9" width="1.0" height="1.0" fill="#d8c6b4" stroke="#d0a47a" stroke-width="0.42"/>
<rect x="143.3" y="46.2" width="1.0" height="1.5" fill="#d8c6b4" stroke="#bd8150" stroke-width="0.42"/>
<rect x="5.6" y="102.2" width="1.0" height="1.8" fill="#d4b89c" stroke="#d0a47a" stroke-width="0.42"/>
<rect x="108.9" y="92.3" width="1.3" height="1.3" fill="#d4b89c" stroke="#c48a58" stroke-width="0.42"/>
<rect x="100.3" y="61.1" width="1.3" height="1.3" fill="#d4b89c" stroke="#d0a47a" stroke-width="0.42"/>
<rect x="55.9" y="93.9" width="1.5" height="2.3" fill="#d8c6b4" stroke="#d0a47a" stroke-width="0.42"/>
<rect x="98.1" y="60.7" width="2.3" height="1.0" fill="#d6bea6" stroke="#bd8150" stroke-width="0.42"/>
<rect x="78.6" y="42.4" width="1.5" height="1.3" fill="#d6bea6" stroke="#cc9a6c" stroke-width="0.42"/>
<rect x="82.0" y="52.3" width="1.0" height="1.8" fill="#d8c6b4" stroke="#c48a58" stroke-width="0.42"/>
<rect x="40.1" y="90.7" width="2.3" height="2.8" fill="#d6bea6" stroke="#bd8150" stroke-width="0.42"/>
<rect x="112.0" y="73.1" width="1.5" height="1.8" fill="#dbccbd" stroke="#c48a58" stroke-width="0.42"/>
<rect x="22.7" y="56.4" width="1.8" height="1.0" fill="#dbccbd" stroke="#b87a4a" stroke-width="0.42"/>
<rect x="46.1" y="86.9" width="1.0" height="1.5" fill="#d8c6b4" stroke="#cc9a6c" stroke-width="0.42"/>
<rect x="157.1" y="54.8" width="1.8" height="1.0" fill="#d6bea6" stroke="#b87a4a" stroke-width="0.42"/>
<rect x="58.4" y="91.3" width="1.3" height="1.8" fill="#d6bea6" stroke="#b87a4a" stroke-width="0.42"/>
<rect x="76.1" y="97.2" width="2.3" height="2.8" fill="#d8c6b4" stroke="#c48a58" stroke-width="0.42"/>
<rect x="93.8" y="58.3" width="1.8" height="1.3" fill="#d4b89c" stroke="#b87a4a" stroke-width="0.42"/>
<rect x="65.5" y="75.3" width="1.0" height="2.3" fill="#d4b89c" stroke="#b87a4a" stroke-width="0.42"/>
<rect x="118.5" y="45.1" width="2.3" height="1.8" fill="#d4b89c" stroke="#bd8150" stroke-width="0.42"/>
<rect x="47.3" y="71.2" width="1.3" height="1.5" fill="#d4b89c" stroke="#bd8150" stroke-width="0.42"/>
<rect x="90.5" y="47.8" width="1.8" height="2.3" fill="#d8c6b4" stroke="#d0a47a" stroke-width="0.42"/>
<rect x="23.7" y="90.8" width="1.0" height="1.0" fill="#d6bea6" stroke="#c48a58" stroke-width="0.42"/>
<rect x="40.2" y="84.9" width="1.5" height="2.8" fill="#dbccbd" stroke="#c48a58" stroke-width="0.42"/>
<rect x="106.4" y="47.6" width="2.8" height="2.3" fill="#d8c6b4" stroke="#b87a4a" stroke-width="0.42"/>
<rect x="107.1" y="86.8" width="1.8" height="1.0" fill="#d4b89c" stroke="#bd8150" stroke-width="0.42"/>
<rect x="38.4" y="75.6" width="2.3" height="1.3" fill="#d6bea6" stroke="#d0a47a" stroke-width="0.42"/>
<rect x="157.6" y="54.8" width="1.0" height="1.3" fill="#d6bea6" stroke="#c48a58" stroke-width="0.42"/>
<rect x="124.5" y="57.5" width="1.0" height="1.8" fill="#d4b89c" stroke="#b87a4a" stroke-width="0.42"/>
<rect x="117.5" y="42.0" width="1.3" height="2.3" fill="#dbccbd" stroke="#d0a47a" stroke-width="0.42"/>
<rect x="36.3" y="94.7" width="1.5" height="2.8" fill="#d8c6b4" stroke="#b87a4a" stroke-width="0.42"/>
<rect x="12.3" y="101.8" width="1.8" height="1.0" fill="#d8c6b4" stroke="#d0a47a" stroke-width="0.42"/>
<rect x="67.8" y="68.2" width="1.5" height="1.8" fill="#d6bea6" stroke="#b87a4a" stroke-width="0.42"/>
<rect x="64.8" y="81.5" width="1.0" height="1.3" fill="#d6bea6" stroke="#bd8150" stroke-width="0.42"/>
<rect x="78.5" y="88.2" width="1.8" height="1.3" fill="#d6bea6" stroke="#cc9a6c" stroke-width="0.42"/>
<rect x="88.4" y="41.8" width="1.0" height="2.8" fill="#d4b89c" stroke="#b87a4a" stroke-width="0.42"/>
<rect x="103.0" y="73.2" width="1.5" height="1.5" fill="#dbccbd" stroke="#cc9a6c" stroke-width="0.42"/>
<rect x="127.5" y="90.7" width="1.8" height="1.3" fill="#dbccbd" stroke="#b87a4a" stroke-width="0.42"/>
<rect x="123.8" y="45.4" width="1.5" height="1.5" fill="#d4b89c" stroke="#cc9a6c" stroke-width="0.42"/>
<rect x="3.7" y="63.6" width="2.8" height="2.3" fill="#d8c6b4" stroke="#c48a58" stroke-width="0.42"/>
<rect x="20.1" y="56.0" width="1.8" height="1.8" fill="#d8c6b4" stroke="#c48a58" stroke-width="0.42"/>
<rect x="111.2" y="41.5" width="1.5" height="1.5" fill="#dbccbd" stroke="#d0a47a" stroke-width="0.42"/>
<rect x="67.1" y="101.0" width="1.8" height="1.8" fill="#d6bea6" stroke="#bd8150" stroke-width="0.42"/>
<rect x="96.5" y="59.0" width="2.8" height="2.8" fill="#dbccbd" stroke="#cc9a6c" stroke-width="0.42"/>
<rect x="4.2" y="56.6" width="1.0" height="2.8" fill="#d6bea6" stroke="#bd8150" stroke-width="0.42"/>
<rect x="129.2" y="65.8" width="1.5" height="2.8" fill="#d4b89c" stroke="#cc9a6c" stroke-width="0.42"/>
<rect x="44.2" y="89.3" width="1.0" height="2.3" fill="#d8c6b4" stroke="#bd8150" stroke-width="0.42"/>
<rect x="26.2" y="102.4" width="1.3" height="2.3" fill="#d8c6b4" stroke="#cc9a6c" stroke-width="0.42"/>
<rect x="62.1" y="50.8" width="1.5" height="1.8" fill="#d6bea6" stroke="#bd8150" stroke-width="0.42"/>
<rect x="100.1" y="67.7" width="2.8" height="2.3" fill="#d6bea6" stroke="#d0a47a" stroke-width="0.42"/>
<rect x="125.8" y="56.1" width="1.0" height="2.3" fill="#dbccbd" stroke="#b87a4a" stroke-width="0.42"/>
<rect x="47.6" y="68.1" width="2.3" height="1.0" fill="#d8c6b4" stroke="#c48a58" stroke-width="0.42"/>
<rect x="93.3" y="45.5" width="1.0" height="2.8" fill="#d6bea6" stroke="#b87a4a" stroke-width="0.42"/>
<rect x="61.6" y="62.5" width="1.8" height="2.8" fill="#d6bea6" stroke="#cc9a6c" stroke-width="0.42"/>
<rect x="137.2" y="69.5" width="1.3" height="1.8" fill="#d4b89c" stroke="#d0a47a" stroke-width="0.42"/>
<rect x="67.7" y="50.5" width="1.3" height="2.8" fill="#dbccbd" stroke="#d0a47a" stroke-width="0.42"/>
<rect x="112.2" y="78.1" width="1.8" height="1.5" fill="#d8c6b4" stroke="#b87a4a" stroke-width="0.42"/>
<rect x="80.1" y="93.6" width="1.0" height="1.0" fill="#dbccbd" stroke="#c48a58" stroke-width="0.42"/>
<rect x="85.4" y="89.8" width="1.5" height="1.5" fill="#d6bea6" stroke="#c48a58" stroke-width="0.42"/>
<rect x="156.0" y="68.9" width="1.5" height="1.8" fill="#dbccbd" stroke="#c48a58" stroke-width="0.42"/>
<rect x="69.3" y="100.7" width="2.3" height="1.3" fill="#d8c6b4" stroke="#d0a47a" stroke-width="0.42"/>
<rect x="64.0" y="65.9" width="1.3" height="2.3" fill="#d6bea6" stroke="#c48a58" stroke-width="0.42"/>
<rect x="17.0" y="70.0" width="1.5" height="1.0" fill="#d6bea6" stroke="#b87a4a" stroke-width="0.42"/>
<rect x="53.4" y="75.8" width="1.5" height="1.0" fill="#dbccbd" stroke="#cc9a6c" stroke-width="0.42"/>
<rect x="43.3" y="55.0" width="2.3" height="1.5" fill="#d4b89c" stroke="#bd8150" stroke-width="0.42"/>
<rect x="24.9" y="72.1" width="2.8" height="1.0" fill="#d8c6b4" stroke="#bd8150" stroke-width="0.42"/>
<rect x="129.6" y="104.0" width="1.5" height="1.0" fill="#d4b89c" stroke="#cc9a6c" stroke-width="0.42"/>
<rect x="90.3" y="86.3" width="1.0" height="1.8" fill="#d4b89c" stroke="#c48a58" stroke-width="0.42"/>
<rect x="67.6" y="74.8" width="1.5" height="1.0" fill="#d4b89c" stroke="#d0a47a" stroke-width="0.42"/>
<rect x="125.2" y="60.3" width="1.3" height="1.3" fill="#d8c6b4" stroke="#bd8150" stroke-width="0.42"/>
<rect x="4.8" y="71.7" width="1.0" height="1.5" fill="#d8c6b4" stroke="#c48a58" stroke-width="0.42"/>
<rect x="33.0" y="54.8" width="1.3" height="2.3" fill="#d4b89c" stroke="#b87a4a" stroke-width="0.42"/>
<rect x="94.2" y="102.2" width="1.8" height="1.3" fill="#d4b89c" stroke="#cc9a6c" stroke-width="0.42"/>
<rect x="136.6" y="103.4" width="1.5" height="1.0" fill="#d6bea6" stroke="#cc9a6c" stroke-width="0.42"/>
<rect x="43.5" y="67.9" width="1.3" height="1.8" fill="#d6bea6" stroke="#d0a47a" stroke-width="0.42"/>
<rect x="26.3" y="99.0" width="2.3" height="1.3" fill="#dbccbd" stroke="#b87a4a" stroke-width="0.42"/>
<rect x="92.1" y="50.5" width="1.3" height="1.0" fill="#d6bea6" stroke="#c48a58" stroke-width="0.42"/>
<rect x="122.8" y="47.1" width="1.8" height="2.8" fill="#d4b89c" stroke="#cc9a6c" stroke-width="0.42"/>
<rect x="163.1" y="78.4" width="1.5" height="1.0" fill="#d6bea6" stroke="#bd8150" stroke-width="0.42"/>
<rect x="8.2" y="67.3" width="1.8" height="1.3" fill="#dbccbd" stroke="#d0a47a" stroke-width="0.42"/>
<rect x="77.0" y="96.2" width="2.8" height="2.8" fill="#d4b89c" stroke="#c48a58" stroke-width="0.42"/>
<rect x="132.1" y="95.7" width="2.8" height="1.3" fill="#d6bea6" stroke="#d0a47a" stroke-width="0.42"/>
<rect x="107.8" y="100.9" width="1.5" height="1.8" fill="#d8c6b4" stroke="#d0a47a" stroke-width="0.42"/>
<rect x="108.2" y="52.3" width="1.3" height="1.8" fill="#d8c6b4" stroke="#bd8150" stroke-width="0.42"/>
<rect x="101.9" y="46.6" width="1.3" height="1.0" fill="#d6bea6" stroke="#cc9a6c" stroke-width="0.42"/>
<rect x="55.5" y="91.4" width="1.3" height="2.8" fill="#d8c6b4" stroke="#d0a47a" stroke-width="0.42"/>
<rect x="105.0" y="51.0" width="2.3" height="1.5" fill="#d6bea6" stroke="#d0a47a" stroke-width="0.42"/>
<rect x="35.3" y="100.7" width="2.8" height="2.8" fill="#d6bea6" stroke="#b87a4a" stroke-width="0.42"/>
<rect x="80.0" y="48.8" width="2.8" height="1.3" fill="#d6bea6" stroke="#b87a4a" stroke-width="0.42"/>
<rect x="26.5" y="100.7" width="1.0" height="1.5" fill="#dbccbd" stroke="#c48a58" stroke-width="0.42"/>
<rect x="129.8" y="64.1" width="1.3" height="1.3" fill="#d8c6b4" stroke="#bd8150" stroke-width="0.42"/>
<rect x="113.0" y="60.6" width="2.8" height="2.8" fill="#d4b89c" stroke="#b87a4a" stroke-width="0.42"/>
<rect x="67.1" y="77.3" width="1.3" height="1.5" fill="#d6bea6" stroke="#d0a47a" stroke-width="0.42"/>
<rect x="97.2" y="66.9" width="1.5" height="1.8" fill="#d4b89c" stroke="#bd8150" stroke-width="0.42"/>
<rect x="72.8" y="42.4" width="1.0" height="1.5" fill="#d4b89c" stroke="#bd8150" stroke-width="0.42"/>
<rect x="102.0" y="45.3" width="1.0" height="1.8" fill="#d6bea6" stroke="#b87a4a" stroke-width="0.42"/>
<rect x="19.7" y="99.1" width="2.3" height="1.5" fill="#d4b89c" stroke="#c48a58" stroke-width="0.42"/>
<rect x="150.3" y="104.9" width="2.8" height="1.5" fill="#d4b89c" stroke="#b87a4a" stroke-width="0.42"/>
<rect x="154.3" y="47.2" width="1.0" height="2.3" fill="#d4b89c" stroke="#cc9a6c" stroke-width="0.42"/>
<rect x="51.8" y="87.5" width="1.0" height="1.5" fill="#d6bea6" stroke="#cc9a6c" stroke-width="0.42"/>
<rect x="150.1" y="53.8" width="2.8" height="1.0" fill="#d6bea6" stroke="#d0a47a" stroke-width="0.42"/>
<rect x="30.9" y="97.2" width="2.3" height="1.3" fill="#d6bea6" stroke="#c48a58" stroke-width="0.42"/>
<rect x="111.6" y="60.5" width="1.5" height="1.5" fill="#d4b89c" stroke="#c48a58" stroke-width="0.42"/>
<rect x="58.4" y="102.2" width="1.8" height="1.8" fill="#d8c6b4" stroke="#c48a58" stroke-width="0.42"/>
<rect x="41.6" y="83.4" width="1.5" height="1.5" fill="#d8c6b4" stroke="#b87a4a" stroke-width="0.42"/>
<rect x="88.9" y="103.5" width="1.3" height="2.8" fill="#d6bea6" stroke="#d0a47a" stroke-width="0.42"/>
<rect x="24.2" y="83.6" width="1.8" height="1.0" fill="#d4b89c" stroke="#b87a4a" stroke-width="0.42"/>
<rect x="14.3" y="99.0" width="1.0" height="2.3" fill="#dbccbd" stroke="#b87a4a" stroke-width="0.42"/>
<rect x="44.2" y="92.3" width="1.0" height="1.3" fill="#dbccbd" stroke="#c48a58" stroke-width="0.42"/>
<rect x="43.4" y="58.7" width="2.3" height="1.0" fill="#d6bea6" stroke="#c48a58" stroke-width="0.42"/>
<rect x="79.8" y="88.9" width="1.8" height="1.0" fill="#d4b89c" stroke="#cc9a6c" stroke-width="0.42"/>
<rect x="32.2" y="76.5" width="2.8" height="1.5" fill="#dbccbd" stroke="#bd8150" stroke-width="0.42"/>
<rect x="132.3" y="91.2" width="1.3" height="1.5" fill="#d4b89c" stroke="#b87a4a" stroke-width="0.42"/>
<rect x="39.2" y="78.0" width="1.8" height="1.5" fill="#d8c6b4" stroke="#c48a58" stroke-width="0.42"/>
<rect x="4.9" y="72.6" width="1.8" height="2.3" fill="#d4b89c" stroke="#d0a47a" stroke-width="0.42"/>
<rect x="54.9" y="80.7" width="2.3" height="1.5" fill="#d4b89c" stroke="#cc9a6c" stroke-width="0.42"/>
<rect x="111.6" y="73.6" width="1.8" height="1.5" fill="#d6bea6" stroke="#c48a58" stroke-width="0.42"/>
<rect x="85.7" y="83.1" width="2.3" height="1.8" fill="#d8c6b4" stroke="#d0a47a" stroke-width="0.42"/>
<rect x="71.2" y="64.2" width="1.3" height="2.8" fill="#d8c6b4" stroke="#c48a58" stroke-width="0.42"/>
<rect x="84.5" y="89.6" width="1.3" height="1.3" fill="#d4b89c" stroke="#b87a4a" stroke-width="0.42"/>
<rect x="127.6" y="43.4" width="1.3" height="1.8" fill="#d6bea6" stroke="#cc9a6c" stroke-width="0.42"/>
<rect x="68.2" y="60.0" width="1.8" height="1.0" fill="#d8c6b4" stroke="#b87a4a" stroke-width="0.42"/>
<rect x="40.7" y="57.1" width="2.3" height="1.3" fill="#d4b89c" stroke="#bd8150" stroke-width="0.42"/>
<rect x="16.4" y="55.4" width="1.5" height="1.5" fill="#d6bea6" stroke="#cc9a6c" stroke-width="0.42"/>
<rect x="59.8" y="85.4" width="2.3" height="1.3" fill="#d4b89c" stroke="#bd8150" stroke-width="0.42"/>
<rect x="10.2" y="67.7" width="1.3" height="1.3" fill="#d6bea6" stroke="#bd8150" stroke-width="0.42"/>
<rect x="36.2" y="54.6" width="1.8" height="1.5" fill="#d4b89c" stroke="#bd8150" stroke-width="0.42"/>
<rect x="84.6" y="81.0" width="1.3" height="1.8" fill="#d6bea6" stroke="#b87a4a" stroke-width="0.42"/>
<rect x="66.5" y="45.5" width="2.8" height="1.5" fill="#dbccbd" stroke="#d0a47a" stroke-width="0.42"/>
<rect x="131.1" y="87.2" width="1.0" height="1.0" fill="#dbccbd" stroke="#bd8150" stroke-width="0.42"/>
<rect x="77.8" y="95.6" width="1.8" height="1.5" fill="#dbccbd" stroke="#b87a4a" stroke-width="0.42"/>
<rect x="114.8" y="60.2" width="2.3" height="1.3" fill="#d4b89c" stroke="#cc9a6c" stroke-width="0.42"/>
<rect x="33.6" y="73.8" width="1.3" height="1.0" fill="#d6bea6" stroke="#d0a47a" stroke-width="0.42"/>
<rect x="78.1" y="65.0" width="1.3" height="1.5" fill="#d4b89c" stroke="#bd8150" stroke-width="0.42"/>
<rect x="24.9" y="74.0" width="1.5" height="1.3" fill="#d8c6b4" stroke="#d0a47a" stroke-width="0.42"/>
<rect x="64.4" y="80.0" width="1.3" height="1.0" fill="#d8c6b4" stroke="#bd8150" stroke-width="0.42"/>
<rect x="113.3" y="45.1" width="1.3" height="2.3" fill="#dbccbd" stroke="#cc9a6c" stroke-width="0.42"/>
<rect x="41.5" y="81.4" width="1.0" height="1.8" fill="#d8c6b4" stroke="#bd8150" stroke-width="0.42"/>
<rect x="85.8" y="58.8" width="1.3" height="1.8" fill="#d6bea6" stroke="#bd8150" stroke-width="0.42"/>
<rect x="89.7" y="88.4" width="1.8" height="1.3" fill="#d4b89c" stroke="#b87a4a" stroke-width="0.42"/>
<rect x="123.2" y="97.6" width="1.0" height="1.0" fill="#d8c6b4" stroke="#d0a47a" stroke-width="0.42"/>
<rect x="66.7" y="62.7" width="1.5" height="1.0" fill="#d6bea6" stroke="#cc9a6c" stroke-width="0.42"/>
<rect x="40.4" y="84.4" width="1.3" height="2.3" fill="#d8c6b4" stroke="#b87a4a" stroke-width="0.42"/>
<rect x="107.2" y="76.8" width="2.8" height="1.5" fill="#dbccbd" stroke="#d0a47a" stroke-width="0.42"/>
<rect x="63.8" y="83.7" width="1.8" height="1.3" fill="#d6bea6" stroke="#d0a47a" stroke-width="0.42"/>
<rect x="88.6" y="48.9" width="1.0" height="1.0" fill="#d8c6b4" stroke="#d0a47a" stroke-width="0.42"/>
<rect x="10.9" y="57.1" width="2.3" height="2.8" fill="#d4b89c" stroke="#d0a47a" stroke-width="0.42"/>
<rect x="122.7" y="57.0" width="2.8" height="2.8" fill="#dbccbd" stroke="#c48a58" stroke-width="0.42"/>
<rect x="58.2" y="89.5" width="2.3" height="1.3" fill="#d4b89c" stroke="#c48a58" stroke-width="0.42"/>
<rect x="107.0" y="94.1" width="1.3" height="1.3" fill="#d4b89c" stroke="#b87a4a" stroke-width="0.42"/>
<rect x="114.8" y="55.7" width="1.3" height="1.0" fill="#d4b89c" stroke="#b87a4a" stroke-width="0.42"/>
<rect x="47.6" y="57.0" width="2.8" height="1.8" fill="#d4b89c" stroke="#c48a58" stroke-width="0.42"/>
<rect x="70.1" y="98.8" width="2.3" height="1.8" fill="#d6bea6" stroke="#d0a47a" stroke-width="0.42"/>
<rect x="13.2" y="69.0" width="2.8" height="1.5" fill="#d6bea6" stroke="#bd8150" stroke-width="0.42"/>
<rect x="20.0" y="100.7" width="1.5" height="1.8" fill="#d4b89c" stroke="#cc9a6c" stroke-width="0.42"/>
<rect x="27.5" y="97.5" width="1.5" height="2.3" fill="#d6bea6" stroke="#d0a47a" stroke-width="0.42"/>
<rect x="32.7" y="71.8" width="1.3" height="1.8" fill="#d4b89c" stroke="#cc9a6c" stroke-width="0.42"/>
<rect x="50.9" y="56.8" width="1.8" height="2.3" fill="#d8c6b4" stroke="#c48a58" stroke-width="0.42"/>
<rect x="115.7" y="58.2" width="1.0" height="2.3" fill="#dbccbd" stroke="#cc9a6c" stroke-width="0.42"/>
<rect x="88.6" y="41.5" width="1.3" height="1.0" fill="#dbccbd" stroke="#cc9a6c" stroke-width="0.42"/>
<rect x="131.3" y="57.8" width="1.3" height="2.8" fill="#d4b89c" stroke="#bd8150" stroke-width="0.42"/>
<rect x="53.8" y="74.9" width="2.8" height="1.0" fill="#d4b89c" stroke="#bd8150" stroke-width="0.42"/>
<rect x="143.6" y="67.0" width="2.3" height="1.0" fill="#d8c6b4" stroke="#b87a4a" stroke-width="0.42"/>
<rect x="25.6" y="61.6" width="2.8" height="1.5" fill="#dbccbd" stroke="#d0a47a" stroke-width="0.42"/>
<rect x="46.5" y="54.5" width="1.3" height="1.3" fill="#d8c6b4" stroke="#c48a58" stroke-width="0.42"/>
<rect x="61.0" y="68.5" width="1.0" height="1.8" fill="#d8c6b4" stroke="#bd8150" stroke-width="0.42"/>
<rect x="17.9" y="101.8" width="1.3" height="1.0" fill="#d6bea6" stroke="#d0a47a" stroke-width="0.42"/>
<rect x="13.1" y="78.6" width="2.3" height="1.5" fill="#d4b89c" stroke="#bd8150" stroke-width="0.42"/>
<rect x="121.0" y="52.2" width="1.5" height="1.0" fill="#d4b89c" stroke="#d0a47a" stroke-width="0.42"/>
<rect x="60.0" y="69.0" width="2.8" height="2.8" fill="#d4b89c" stroke="#b87a4a" stroke-width="0.42"/>
<rect x="40.7" y="79.3" width="2.3" height="1.0" fill="#d8c6b4" stroke="#b87a4a" stroke-width="0.42"/>
<rect x="81.0" y="104.5" width="2.8" height="2.3" fill="#dbccbd" stroke="#c48a58" stroke-width="0.42"/>
<rect x="126.2" y="104.2" width="1.8" height="1.0" fill="#d6bea6" stroke="#bd8150" stroke-width="0.42"/>
<rect x="19.5" y="57.0" width="1.5" height="1.0" fill="#d6bea6" stroke="#cc9a6c" stroke-width="0.42"/>
<rect x="121.9" y="56.9" width="1.5" height="1.8" fill="#d6bea6" stroke="#b87a4a" stroke-width="0.42"/>
<rect x="4.3" y="68.2" width="1.8" height="1.5" fill="#d6bea6" stroke="#cc9a6c" stroke-width="0.42"/>
<rect x="166.0" y="45.1" width="1.5" height="1.3" fill="#d8c6b4" stroke="#d0a47a" stroke-width="0.42"/>
<rect x="8.1" y="63.0" width="1.3" height="1.5" fill="#d8c6b4" stroke="#bd8150" stroke-width="0.42"/>
<rect x="139.6" y="85.7" width="1.5" height="2.8" fill="#d6bea6" stroke="#c48a58" stroke-width="0.42"/>
<rect x="21.5" y="101.1" width="2.3" height="2.3" fill="#dbccbd" stroke="#d0a47a" stroke-width="0.42"/>
<rect x="35.0" y="104.6" width="2.8" height="1.3" fill="#dbccbd" stroke="#d0a47a" stroke-width="0.42"/>
<rect x="46.7" y="64.9" width="2.3" height="1.8" fill="#dbccbd" stroke="#bd8150" stroke-width="0.42"/>
<rect x="17.9" y="73.8" width="1.8" height="1.3" fill="#d4b89c" stroke="#b87a4a" stroke-width="0.42"/>
<rect x="113.5" y="41.7" width="2.3" height="1.3" fill="#d8c6b4" stroke="#bd8150" stroke-width="0.42"/>
<rect x="65.1" y="78.9" width="1.5" height="1.8" fill="#d4b89c" stroke="#d0a47a" stroke-width="0.42"/>
<rect x="94.0" y="47.2" width="1.3" height="1.0" fill="#dbccbd" stroke="#cc9a6c" stroke-width="0.42"/>
<rect x="59.9" y="98.4" width="1.0" height="2.8" fill="#d6bea6" stroke="#bd8150" stroke-width="0.42"/>
<rect x="12.2" y="55.1" width="1.0" height="1.8" fill="#d4b89c" stroke="#c48a58" stroke-width="0.42"/>
<rect x="111.5" y="85.8" width="1.0" height="1.8" fill="#d4b89c" stroke="#c48a58" stroke-width="0.42"/>
<rect x="135.9" y="41.1" width="2.8" height="2.3" fill="#dbccbd" stroke="#bd8150" stroke-width="0.42"/>
<rect x="61.1" y="75.2" width="2.3" height="1.0" fill="#d8c6b4" stroke="#d0a47a" stroke-width="0.42"/>
<rect x="13.3" y="56.1" width="2.8" height="1.0" fill="#dbccbd" stroke="#d0a47a" stroke-width="0.42"/>
<rect x="80.6" y="104.3" width="2.3" height="1.8" fill="#d6bea6" stroke="#b87a4a" stroke-width="0.42"/>
<rect x="26.2" y="77.0" width="1.3" height="1.8" fill="#d8c6b4" stroke="#bd8150" stroke-width="0.42"/>
<rect x="155.8" y="75.7" width="1.0" height="1.8" fill="#d4b89c" stroke="#d0a47a" stroke-width="0.42"/>
<rect x="112.2" y="97.7" width="2.3" height="2.3" fill="#d8c6b4" stroke="#bd8150" stroke-width="0.42"/>
<rect x="54.4" y="74.9" width="1.3" height="2.3" fill="#d4b89c" stroke="#b87a4a" stroke-width="0.42"/>
<rect x="56.3" y="93.3" width="2.8" height="1.0" fill="#dbccbd" stroke="#cc9a6c" stroke-width="0.42"/>
<rect x="54.9" y="71.9" width="1.3" height="2.3" fill="#d4b89c" stroke="#cc9a6c" stroke-width="0.42"/>
<rect x="64.9" y="78.9" width="1.0" height="1.0" fill="#dbccbd" stroke="#c48a58" stroke-width="0.42"/>
<rect x="63.6" y="79.2" width="1.5" height="1.5" fill="#d6bea6" stroke="#b87a4a" stroke-width="0.42"/>
<rect x="130.6" y="44.4" width="1.3" height="1.8" fill="#d8c6b4" stroke="#b87a4a" stroke-width="0.42"/>
<rect x="129.8" y="62.9" width="1.0" height="1.3" fill="#dbccbd" stroke="#b87a4a" stroke-width="0.42"/>
<rect x="47.5" y="91.8" width="1.8" height="2.8" fill="#dbccbd" stroke="#bd8150" stroke-width="0.42"/>
<rect x="68.8" y="55.3" width="1.5" height="1.5" fill="#d8c6b4" stroke="#d0a47a" stroke-width="0.42"/>
<rect x="50.0" y="58.9" width="1.8" height="1.0" fill="#d4b89c" stroke="#b87a4a" stroke-width="0.42"/>
<rect x="59.3" y="86.8" width="2.3" height="2.8" fill="#d6bea6" stroke="#b87a4a" stroke-width="0.42"/>
<rect x="58.5" y="80.9" width="1.0" height="1.3" fill="#d8c6b4" stroke="#bd8150" stroke-width="0.42"/>
<rect x="117.5" y="49.8" width="1.8" height="2.8" fill="#d4b89c" stroke="#cc9a6c" stroke-width="0.42"/>
<rect x="77.0" y="98.3" width="2.8" height="1.0" fill="#d8c6b4" stroke="#d0a47a" stroke-width="0.42"/>
<rect x="21.1" y="96.5" width="1.0" height="1.8" fill="#dbccbd" stroke="#b87a4a" stroke-width="0.42"/>
<rect x="25.5" y="101.6" width="1.3" height="1.5" fill="#d4b89c" stroke="#bd8150" stroke-width="0.42"/>
<rect x="7.2" y="68.5" width="1.8" height="1.3" fill="#d4b89c" stroke="#bd8150" stroke-width="0.42"/>
<rect x="75.6" y="92.0" width="2.3" height="1.8" fill="#d8c6b4" stroke="#b87a4a" stroke-width="0.42"/>
<rect x="127.1" y="51.5" width="2.3" height="1.5" fill="#d6bea6" stroke="#cc9a6c" stroke-width="0.42"/>
<rect x="60.3" y="51.4" width="1.5" height="1.8" fill="#d4b89c" stroke="#bd8150" stroke-width="0.42"/>
<rect x="61.1" y="67.2" width="1.0" height="1.5" fill="#d8c6b4" stroke="#d0a47a" stroke-width="0.42"/>
<rect x="27.2" y="104.5" width="1.5" height="2.3" fill="#d6bea6" stroke="#b87a4a" stroke-width="0.42"/>
<rect x="137.8" y="47.1" width="1.3" height="1.3" fill="#dbccbd" stroke="#cc9a6c" stroke-width="0.42"/>
<rect x="30.3" y="104.7" width="1.5" height="2.8" fill="#dbccbd" stroke="#d0a47a" stroke-width="0.42"/>
<rect x="92.5" y="57.1" width="1.5" height="1.5" fill="#dbccbd" stroke="#b87a4a" stroke-width="0.42"/>
<rect x="24.1" y="71.9" width="1.5" height="1.0" fill="#dbccbd" stroke="#d0a47a" stroke-width="0.42"/>
<rect x="128.5" y="85.9" width="2.3" height="2.8" fill="#dbccbd" stroke="#d0a47a" stroke-width="0.42"/>
<rect x="11.0" y="100.9" width="1.5" height="2.8" fill="#d6bea6" stroke="#bd8150" stroke-width="0.42"/>
<rect x="78.3" y="64.6" width="2.8" height="1.3" fill="#dbccbd" stroke="#b87a4a" stroke-width="0.42"/>
<rect x="124.5" y="97.6" width="1.0" height="2.3" fill="#d8c6b4" stroke="#b87a4a" stroke-width="0.42"/>
<rect x="22.1" y="104.2" width="1.5" height="1.5" fill="#d6bea6" stroke="#cc9a6c" stroke-width="0.42"/>
<rect x="71.6" y="50.0" width="2.8" height="2.3" fill="#d8c6b4" stroke="#bd8150" stroke-width="0.42"/>
<rect x="90.8" y="52.7" width="2.3" height="2.8" fill="#dbccbd" stroke="#b87a4a" stroke-width="0.42"/>
<rect x="86.1" y="53.5" width="2.8" height="1.0" fill="#d4b89c" stroke="#c48a58" stroke-width="0.42"/>
<rect x="83.9" y="45.9" width="1.8" height="1.0" fill="#d8c6b4" stroke="#c48a58" stroke-width="0.42"/>
<rect x="131.7" y="50.9" width="1.0" height="1.0" fill="#dbccbd" stroke="#d0a47a" stroke-width="0.42"/>
<rect x="64.5" y="102.2" width="1.3" height="1.8" fill="#d6bea6" stroke="#bd8150" stroke-width="0.42"/>
<rect x="61.3" y="82.6" width="1.8" height="1.3" fill="#d6bea6" stroke="#c48a58" stroke-width="0.42"/>
<rect x="33.0" y="55.7" width="1.5" height="2.3" fill="#dbccbd" stroke="#c48a58" stroke-width="0.42"/>
<rect x="114.9" y="45.3" width="1.0" height="1.8" fill="#d6bea6" stroke="#bd8150" stroke-width="0.42"/>
<rect x="85.0" y="55.3" width="1.5" height="1.5" fill="#d6bea6" stroke="#c48a58" stroke-width="0.42"/>
<rect x="25.8" y="86.6" width="1.0" height="1.3" fill="#d6bea6" stroke="#c48a58" stroke-width="0.42"/>
<rect x="120.3" y="56.0" width="2.8" height="2.8" fill="#d4b89c" stroke="#d0a47a" stroke-width="0.42"/>
<rect x="64.7" y="48.6" width="1.5" height="1.3" fill="#d8c6b4" stroke="#c48a58" stroke-width="0.42"/>
<rect x="124.3" y="84.2" width="1.0" height="1.5" fill="#dbccbd" stroke="#c48a58" stroke-width="0.42"/>
<rect x="100.2" y="58.4" width="2.3" height="2.3" fill="#d4b89c" stroke="#b87a4a" stroke-width="0.42"/>
<rect x="112.2" y="41.9" width="1.5" height="2.8" fill="#d6bea6" stroke="#c48a58" stroke-width="0.42"/>
<rect x="83.5" y="98.1" width="2.3" height="1.8" fill="#dbccbd" stroke="#b87a4a" stroke-width="0.42"/>
<rect x="81.0" y="84.3" width="1.8" height="2.3" fill="#d4b89c" stroke="#b87a4a" stroke-width="0.42"/>
<rect x="6.0" y="68.0" width="1.8" height="2.3" fill="#d8c6b4" stroke="#bd8150" stroke-width="0.42"/>
<rect x="6.0" y="62.8" width="1.3" height="1.5" fill="#d8c6b4" stroke="#d0a47a" stroke-width="0.42"/>
<rect x="45.8" y="80.5" width="1.5" height="2.8" fill="#d4b89c" stroke="#d0a47a" stroke-width="0.42"/>
<rect x="93.0" y="70.3" width="1.5" height="1.8" fill="#d6bea6" stroke="#b87a4a" stroke-width="0.42"/>
<rect x="87.7" y="103.9" width="1.5" height="1.3" fill="#dbccbd" stroke="#c48a58" stroke-width="0.42"/>
<rect x="95.5" y="66.7" width="2.8" height="1.5" fill="#dbccbd" stroke="#cc9a6c" stroke-width="0.42"/>
<rect x="108.8" y="41.1" width="1.8" height="2.3" fill="#d8c6b4" stroke="#bd8150" stroke-width="0.42"/>
<rect x="127.6" y="92.1" width="2.8" height="1.8" fill="#d8c6b4" stroke="#bd8150" stroke-width="0.42"/>
<rect x="79.9" y="46.6" width="1.8" height="2.8" fill="#d4b89c" stroke="#cc9a6c" stroke-width="0.42"/>
<rect x="76.6" y="46.3" width="1.0" height="1.3" fill="#d4b89c" stroke="#cc9a6c" stroke-width="0.42"/>
<rect x="38.2" y="94.3" width="1.5" height="2.8" fill="#d6bea6" stroke="#c48a58" stroke-width="0.42"/>
<rect x="136.4" y="86.4" width="1.3" height="1.0" fill="#d4b89c" stroke="#d0a47a" stroke-width="0.42"/>
<rect x="122.4" y="43.7" width="1.0" height="2.3" fill="#dbccbd" stroke="#bd8150" stroke-width="0.42"/>
<rect x="135.5" y="80.0" width="2.8" height="1.0" fill="#d6bea6" stroke="#cc9a6c" stroke-width="0.42"/>
<rect x="45.7" y="59.3" width="1.8" height="1.5" fill="#dbccbd" stroke="#c48a58" stroke-width="0.42"/>
<rect x="121.4" y="82.4" width="2.8" height="2.8" fill="#d8c6b4" stroke="#bd8150" stroke-width="0.42"/>
<rect x="148.3" y="90.1" width="1.0" height="2.3" fill="#dbccbd" stroke="#bd8150" stroke-width="0.42"/>
<rect x="61.5" y="42.3" width="1.3" height="1.8" fill="#d6bea6" stroke="#c48a58" stroke-width="0.42"/>
<rect x="112.2" y="90.5" width="2.3" height="1.8" fill="#dbccbd" stroke="#bd8150" stroke-width="0.42"/>
<rect x="111.2" y="84.8" width="1.5" height="1.5" fill="#d8c6b4" stroke="#cc9a6c" stroke-width="0.42"/>
<rect x="50.9" y="101.8" width="2.3" height="1.5" fill="#d4b89c" stroke="#cc9a6c" stroke-width="0.42"/>
<rect x="58.1" y="58.7" width="2.3" height="1.8" fill="#d8c6b4" stroke="#cc9a6c" stroke-width="0.42"/>
<rect x="129.5" y="74.6" width="1.5" height="1.3" fill="#dbccbd" stroke="#c48a58" stroke-width="0.42"/>
<rect x="75.1" y="66.4" width="1.5" height="1.0" fill="#dbccbd" stroke="#d0a47a" stroke-width="0.42"/>
<rect x="90.8" y="101.6" width="2.8" height="2.3" fill="#d4b89c" stroke="#c48a58" stroke-width="0.42"/>
<rect x="81.8" y="102.3" width="1.0" height="1.8" fill="#d4b89c" stroke="#bd8150" stroke-width="0.42"/>
<rect x="110.1" y="101.0" width="1.5" height="2.3" fill="#d4b89c" stroke="#cc9a6c" stroke-width="0.42"/>
<rect x="90.9" y="53.0" width="1.0" height="2.3" fill="#d6bea6" stroke="#c48a58" stroke-width="0.42"/>
<rect x="94.9" y="58.3" width="2.8" height="2.3" fill="#dbccbd" stroke="#d0a47a" stroke-width="0.42"/>
<rect x="78.9" y="68.6" width="1.0" height="1.8" fill="#d6bea6" stroke="#d0a47a" stroke-width="0.42"/>
<rect x="47.3" y="85.3" width="1.8" height="1.3" fill="#d4b89c" stroke="#bd8150" stroke-width="0.42"/>
<rect x="42.4" y="96.2" width="1.8" height="1.0" fill="#d8c6b4" stroke="#b87a4a" stroke-width="0.42"/>
<rect x="81.8" y="41.9" width="1.0" height="2.8" fill="#d4b89c" stroke="#bd8150" stroke-width="0.42"/>
<rect x="45.3" y="91.5" width="2.8" height="1.5" fill="#d4b89c" stroke="#c48a58" stroke-width="0.42"/>
<rect x="63.6" y="68.8" width="1.8" height="1.8" fill="#dbccbd" stroke="#c48a58" stroke-width="0.42"/>
<rect x="153.4" y="103.4" width="1.8" height="2.8" fill="#d8c6b4" stroke="#c48a58" stroke-width="0.42"/>
<rect x="51.9" y="87.2" width="2.3" height="2.8" fill="#d4b89c" stroke="#bd8150" stroke-width="0.42"/>
<rect x="92.8" y="103.6" width="1.5" height="2.3" fill="#d4b89c" stroke="#cc9a6c" stroke-width="0.42"/>
<rect x="63.4" y="71.5" width="1.5" height="2.8" fill="#d4b89c" stroke="#b87a4a" stroke-width="0.42"/>
<rect x="5.7" y="59.4" width="1.8" height="1.0" fill="#d8c6b4" stroke="#cc9a6c" stroke-width="0.42"/>
<rect x="52.6" y="85.2" width="2.8" height="1.5" fill="#d6bea6" stroke="#bd8150" stroke-width="0.42"/>
<rect x="120.9" y="50.2" width="2.3" height="2.3" fill="#d8c6b4" stroke="#b87a4a" stroke-width="0.42"/>
<rect x="65.1" y="83.0" width="1.3" height="1.5" fill="#d6bea6" stroke="#c48a58" stroke-width="0.42"/>
<rect x="46.5" y="72.2" width="2.8" height="2.3" fill="#d8c6b4" stroke="#d0a47a" stroke-width="0.42"/>
<rect x="120.2" y="42.6" width="2.3" height="1.5" fill="#dbccbd" stroke="#c48a58" stroke-width="0.42"/>
<rect x="94.5" y="79.4" width="1.5" height="1.3" fill="#dbccbd" stroke="#bd8150" stroke-width="0.42"/>
<rect x="103.9" y="63.2" width="1.5" height="1.3" fill="#d4b89c" stroke="#d0a47a" stroke-width="0.42"/>
<rect x="11.9" y="72.4" width="2.8" height="1.0" fill="#d8c6b4" stroke="#b87a4a" stroke-width="0.42"/>
<rect x="47.9" y="83.6" width="2.8" height="2.8" fill="#dbccbd" stroke="#cc9a6c" stroke-width="0.42"/>
<rect x="96.6" y="63.7" width="1.5" height="1.0" fill="#d6bea6" stroke="#d0a47a" stroke-width="0.42"/>
<rect x="63.3" y="67.5" width="1.3" height="1.5" fill="#d6bea6" stroke="#cc9a6c" stroke-width="0.42"/>
<rect x="116.2" y="53.0" width="2.3" height="2.3" fill="#d4b89c" stroke="#b87a4a" stroke-width="0.42"/>
<rect x="43.1" y="93.2" width="1.5" height="2.3" fill="#dbccbd" stroke="#bd8150" stroke-width="0.42"/>
<rect x="5.6" y="60.1" width="1.0" height="2.8" fill="#d8c6b4" stroke="#b87a4a" stroke-width="0.42"/>
<rect x="78.9" y="74.3" width="1.5" height="2.3" fill="#d4b89c" stroke="#d0a47a" stroke-width="0.42"/>
<rect x="89.1" y="104.3" width="1.0" height="2.3" fill="#d8c6b4" stroke="#cc9a6c" stroke-width="0.42"/>
<rect x="128.6" y="69.5" width="1.8" height="2.3" fill="#d8c6b4" stroke="#b87a4a" stroke-width="0.42"/>
<rect x="121.6" y="45.3" width="2.8" height="1.3" fill="#d4b89c" stroke="#c48a58" stroke-width="0.42"/>
<rect x="105.6" y="41.6" width="2.8" height="2.8" fill="#d6bea6" stroke="#b87a4a" stroke-width="0.42"/>
<rect x="129.8" y="44.5" width="1.0" height="2.8" fill="#d6bea6" stroke="#c48a58" stroke-width="0.42"/>
<rect x="108.9" y="88.3" width="2.8" height="1.5" fill="#dbccbd" stroke="#c48a58" stroke-width="0.42"/>
<rect x="122.5" y="52.7" width="1.8" height="2.8" fill="#d8c6b4" stroke="#c48a58" stroke-width="0.42"/>
<rect x="101.6" y="58.2" width="1.3" height="2.8" fill="#d8c6b4" stroke="#cc9a6c" stroke-width="0.42"/>
<rect x="44.3" y="85.4" width="1.8" height="1.5" fill="#d8c6b4" stroke="#bd8150" stroke-width="0.42"/>
<rect x="62.6" y="79.9" width="2.3" height="1.5" fill="#d4b89c" stroke="#c48a58" stroke-width="0.42"/>
<rect x="112.9" y="82.1" width="1.8" height="1.3" fill="#d4b89c" stroke="#cc9a6c" stroke-width="0.42"/>
<rect x="65.3" y="51.3" width="1.5" height="2.8" fill="#d8c6b4" stroke="#d0a47a" stroke-width="0.42"/>
<rect x="101.9" y="55.6" width="1.3" height="1.3" fill="#d4b89c" stroke="#cc9a6c" stroke-width="0.42"/>
<rect x="75.6" y="45.6" width="2.3" height="1.3" fill="#d8c6b4" stroke="#c48a58" stroke-width="0.42"/>
<rect x="2.8" y="60.6" width="2.3" height="1.0" fill="#d6bea6" stroke="#d0a47a" stroke-width="0.42"/>
<rect x="93.3" y="101.1" width="1.3" height="1.3" fill="#d4b89c" stroke="#d0a47a" stroke-width="0.42"/>
<rect x="46.4" y="59.9" width="1.3" height="1.0" fill="#d6bea6" stroke="#bd8150" stroke-width="0.42"/>
<rect x="95.9" y="48.6" width="1.8" height="2.8" fill="#dbccbd" stroke="#b87a4a" stroke-width="0.42"/>
<rect x="104.0" y="102.3" width="2.3" height="1.5" fill="#d6bea6" stroke="#bd8150" stroke-width="0.42"/>
<rect x="56.3" y="79.7" width="1.3" height="1.5" fill="#d4b89c" stroke="#cc9a6c" stroke-width="0.42"/>
<rect x="46.2" y="64.3" width="2.8" height="2.3" fill="#d6bea6" stroke="#b87a4a" stroke-width="0.42"/>
<rect x="59.1" y="40.9" width="1.0" height="2.8" fill="#d8c6b4" stroke="#d0a47a" stroke-width="0.42"/>
<rect x="6.4" y="68.5" width="1.3" height="1.8" fill="#d6bea6" stroke="#bd8150" stroke-width="0.42"/>
<rect x="105.9" y="51.2" width="1.0" height="1.8" fill="#d4b89c" stroke="#c48a58" stroke-width="0.42"/>
<rect x="93.9" y="53.3" width="2.8" height="2.8" fill="#dbccbd" stroke="#cc9a6c" stroke-width="0.42"/>
<rect x="64.2" y="100.6" width="1.3" height="1.8" fill="#dbccbd" stroke="#d0a47a" stroke-width="0.42"/>
<rect x="18.9" y="78.4" width="1.0" height="1.3" fill="#dbccbd" stroke="#c48a58" stroke-width="0.42"/>
<rect x="64.8" y="82.5" width="1.5" height="1.8" fill="#d6bea6" stroke="#cc9a6c" stroke-width="0.42"/>
<rect x="3.7" y="71.4" width="1.5" height="1.8" fill="#d6bea6" stroke="#b87a4a" stroke-width="0.42"/>
<rect x="46.8" y="75.4" width="1.5" height="2.3" fill="#dbccbd" stroke="#cc9a6c" stroke-width="0.42"/>
<rect x="137.5" y="66.1" width="1.8" height="1.8" fill="#d4b89c" stroke="#d0a47a" stroke-width="0.42"/>
<rect x="111.5" y="60.8" width="1.8" height="1.3" fill="#d8c6b4" stroke="#cc9a6c" stroke-width="0.42"/>
<rect x="24.8" y="97.9" width="2.8" height="2.8" fill="#d8c6b4" stroke="#b87a4a" stroke-width="0.42"/>
<rect x="115.8" y="54.6" width="1.8" height="1.3" fill="#d8c6b4" stroke="#d0a47a" stroke-width="0.42"/>
<rect x="111.9" y="71.0" width="1.3" height="1.0" fill="#d6bea6" stroke="#bd8150" stroke-width="0.42"/>
<rect x="72.6" y="50.9" width="1.8" height="2.3" fill="#d6bea6" stroke="#d0a47a" stroke-width="0.42"/>
<rect x="12.1" y="67.6" width="1.0" height="2.3" fill="#d6bea6" stroke="#c48a58" stroke-width="0.42"/>
<rect x="89.1" y="96.9" width="2.3" height="2.8" fill="#dbccbd" stroke="#c48a58" stroke-width="0.42"/>
<rect x="58.7" y="67.8" width="2.8" height="2.8" fill="#d6bea6" stroke="#bd8150" stroke-width="0.42"/>
<rect x="43.0" y="67.8" width="2.8" height="1.8" fill="#dbccbd" stroke="#c48a58" stroke-width="0.42"/>
<rect x="64.1" y="52.1" width="2.3" height="2.3" fill="#d6bea6" stroke="#c48a58" stroke-width="0.42"/>
<rect x="96.5" y="58.0" width="2.8" height="2.8" fill="#d6bea6" stroke="#d0a47a" stroke-width="0.42"/>
<rect x="67.0" y="82.0" width="1.5" height="1.8" fill="#dbccbd" stroke="#b87a4a" stroke-width="0.42"/>
<rect x="65.7" y="48.4" width="1.3" height="2.8" fill="#d8c6b4" stroke="#b87a4a" stroke-width="0.42"/>
<rect x="44.8" y="89.5" width="1.3" height="1.0" fill="#d8c6b4" stroke="#d0a47a" stroke-width="0.42"/>
<rect x="119.9" y="101.2" width="1.5" height="1.8" fill="#dbccbd" stroke="#d0a47a" stroke-width="0.42"/>
<rect x="124.9" y="42.8" width="2.8" height="2.3" fill="#dbccbd" stroke="#bd8150" stroke-width="0.42"/>
<rect x="4.4" y="69.9" width="2.3" height="1.8" fill="#dbccbd" stroke="#d0a47a" stroke-width="0.42"/>
<rect x="7.8" y="67.8" width="1.5" height="1.5" fill="#d6bea6" stroke="#d0a47a" stroke-width="0.42"/>
<rect x="106.8" y="89.3" width="1.0" height="1.3" fill="#dbccbd" stroke="#cc9a6c" stroke-width="0.42"/>
<rect x="127.6" y="98.2" width="2.3" height="2.3" fill="#d4b89c" stroke="#cc9a6c" stroke-width="0.42"/>
<rect x="139.9" y="88.6" width="1.5" height="1.0" fill="#d4b89c" stroke="#c48a58" stroke-width="0.42"/>
<rect x="133.3" y="62.1" width="1.8" height="1.0" fill="#d4b89c" stroke="#b87a4a" stroke-width="0.42"/>
<rect x="65.7" y="98.8" width="1.3" height="1.0" fill="#dbccbd" stroke="#d0a47a" stroke-width="0.42"/>
<rect x="111.2" y="83.6" width="1.3" height="1.8" fill="#dbccbd" stroke="#b87a4a" stroke-width="0.42"/>
<rect x="112.3" y="68.3" width="1.0" height="1.5" fill="#d8c6b4" stroke="#bd8150" stroke-width="0.42"/>
<rect x="35.2" y="75.0" width="2.3" height="1.8" fill="#d8c6b4" stroke="#c48a58" stroke-width="0.42"/>
<rect x="129.4" y="93.3" width="2.3" height="1.3" fill="#d8c6b4" stroke="#d0a47a" stroke-width="0.42"/>
<rect x="29.6" y="55.7" width="1.0" height="1.0" fill="#d4b89c" stroke="#c48a58" stroke-width="0.42"/>
<rect x="163.9" y="42.6" width="1.8" height="2.3" fill="#dbccbd" stroke="#b87a4a" stroke-width="0.42"/>
<rect x="119.6" y="50.7" width="2.3" height="1.8" fill="#dbccbd" stroke="#cc9a6c" stroke-width="0.42"/>
<rect x="10.4" y="59.2" width="1.5" height="1.8" fill="#d4b89c" stroke="#cc9a6c" stroke-width="0.42"/>
<rect x="43.3" y="87.7" width="1.5" height="1.8" fill="#d6bea6" stroke="#bd8150" stroke-width="0.42"/>
<rect x="92.7" y="64.5" width="1.8" height="2.8" fill="#d8c6b4" stroke="#d0a47a" stroke-width="0.42"/>
<rect x="106.9" y="41.3" width="1.5" height="1.3" fill="#d8c6b4" stroke="#c48a58" stroke-width="0.42"/>
<rect x="6.9" y="71.6" width="1.0" height="2.8" fill="#d8c6b4" stroke="#d0a47a" stroke-width="0.42"/>
<rect x="3.1" y="75.2" width="1.3" height="1.0" fill="#d4b89c" stroke="#cc9a6c" stroke-width="0.42"/>
<rect x="18.3" y="65.6" width="1.5" height="2.3" fill="#d4b89c" stroke="#c48a58" stroke-width="0.42"/>
<rect x="143.0" y="73.9" width="1.0" height="2.3" fill="#d8c6b4" stroke="#b87a4a" stroke-width="0.42"/>
<rect x="126.0" y="60.5" width="1.8" height="1.0" fill="#dbccbd" stroke="#c48a58" stroke-width="0.42"/>
<rect x="115.3" y="47.9" width="1.5" height="1.8" fill="#d4b89c" stroke="#b87a4a" stroke-width="0.42"/>
<rect x="43.1" y="70.3" width="2.8" height="1.8" fill="#dbccbd" stroke="#d0a47a" stroke-width="0.42"/>
<rect x="17.2" y="54.3" width="2.8" height="1.0" fill="#d6bea6" stroke="#cc9a6c" stroke-width="0.42"/>
<rect x="42.8" y="91.2" width="1.5" height="2.3" fill="#d8c6b4" stroke="#bd8150" stroke-width="0.42"/>
<rect x="122.8" y="71.1" width="2.8" height="1.5" fill="#dbccbd" stroke="#b87a4a" stroke-width="0.42"/>
<rect x="103.5" y="85.7" width="1.3" height="1.3" fill="#dbccbd" stroke="#c48a58" stroke-width="0.42"/>
<rect x="125.1" y="72.1" width="2.3" height="2.8" fill="#d4b89c" stroke="#c48a58" stroke-width="0.42"/>
<rect x="109.8" y="45.2" width="1.8" height="2.8" fill="#d4b89c" stroke="#bd8150" stroke-width="0.42"/>
<rect x="148.3" y="79.9" width="2.3" height="1.3" fill="#dbccbd" stroke="#cc9a6c" stroke-width="0.42"/>
<rect x="59.1" y="45.4" width="2.8" height="1.0" fill="#d8c6b4" stroke="#bd8150" stroke-width="0.42"/>
<rect x="104.2" y="92.6" width="1.8" height="1.8" fill="#d8c6b4" stroke="#b87a4a" stroke-width="0.42"/>
<rect x="105.5" y="81.8" width="2.3" height="1.5" fill="#dbccbd" stroke="#cc9a6c" stroke-width="0.42"/>
<rect x="145.7" y="90.3" width="1.8" height="2.8" fill="#d4b89c" stroke="#cc9a6c" stroke-width="0.42"/>
<rect x="68.5" y="58.5" width="2.8" height="1.0" fill="#dbccbd" stroke="#bd8150" stroke-width="0.42"/>
<rect x="127.4" y="46.7" width="2.3" height="1.8" fill="#dbccbd" stroke="#cc9a6c" stroke-width="0.42"/>
<rect x="59.2" y="103.5" width="1.3" height="2.3" fill="#dbccbd" stroke="#c48a58" stroke-width="0.42"/>
<rect x="56.6" y="74.4" width="1.8" height="2.8" fill="#dbccbd" stroke="#d0a47a" stroke-width="0.42"/>
<rect x="92.1" y="45.0" width="1.5" height="1.5" fill="#d6bea6" stroke="#d0a47a" stroke-width="0.42"/>
<rect x="126.9" y="44.4" width="1.3" height="1.3" fill="#d8c6b4" stroke="#b87a4a" stroke-width="0.42"/>
<rect x="55.8" y="83.4" width="2.3" height="1.3" fill="#dbccbd" stroke="#d0a47a" stroke-width="0.42"/>
<rect x="17.0" y="78.1" width="1.0" height="1.8" fill="#d8c6b4" stroke="#b87a4a" stroke-width="0.42"/>
<rect x="90.8" y="40.9" width="1.3" height="1.0" fill="#d4b89c" stroke="#bd8150" stroke-width="0.42"/>
<rect x="111.5" y="41.1" width="1.8" height="2.8" fill="#d8c6b4" stroke="#d0a47a" stroke-width="0.42"/>
<rect x="90.6" y="58.5" width="1.5" height="2.8" fill="#dbccbd" stroke="#d0a47a" stroke-width="0.42"/>
<rect x="16.3" y="66.2" width="1.3" height="1.3" fill="#d8c6b4" stroke="#cc9a6c" stroke-width="0.42"/>
<rect x="6.7" y="72.5" width="1.8" height="1.8" fill="#dbccbd" stroke="#b87a4a" stroke-width="0.42"/>
<rect x="120.3" y="55.7" width="2.8" height="2.8" fill="#d6bea6" stroke="#c48a58" stroke-width="0.42"/>
<rect x="51.7" y="73.1" width="1.8" height="1.0" fill="#d6bea6" stroke="#b87a4a" stroke-width="0.42"/>
<rect x="85.0" y="93.4" width="1.3" height="1.0" fill="#d6bea6" stroke="#d0a47a" stroke-width="0.42"/>
<rect x="117.0" y="41.0" width="1.5" height="1.0" fill="#dbccbd" stroke="#cc9a6c" stroke-width="0.42"/>
<rect x="93.8" y="64.9" width="1.3" height="2.8" fill="#d4b89c" stroke="#c48a58" stroke-width="0.42"/>
<rect x="119.1" y="55.2" width="1.3" height="1.0" fill="#d4b89c" stroke="#d0a47a" stroke-width="0.42"/>
<rect x="39.6" y="104.2" width="2.3" height="2.8" fill="#dbccbd" stroke="#bd8150" stroke-width="0.42"/>
<rect x="12.5" y="69.7" width="2.3" height="1.3" fill="#d8c6b4" stroke="#c48a58" stroke-width="0.42"/>
<rect x="25.0" y="60.3" width="1.3" height="1.8" fill="#d4b89c" stroke="#b87a4a" stroke-width="0.42"/>
<rect x="84.3" y="99.3" width="1.8" height="2.8" fill="#d6bea6" stroke="#d0a47a" stroke-width="0.42"/>
<rect x="60.1" y="44.5" width="1.8" height="1.8" fill="#d4b89c" stroke="#c48a58" stroke-width="0.42"/>
<rect x="105.9" y="44.9" width="2.8" height="2.3" fill="#d6bea6" stroke="#b87a4a" stroke-width="0.42"/>
<rect x="97.9" y="45.1" width="1.8" height="1.0" fill="#d4b89c" stroke="#bd8150" stroke-width="0.42"/>
<rect x="139.9" y="88.2" width="1.8" height="2.3" fill="#d4b89c" stroke="#cc9a6c" stroke-width="0.42"/>
<rect x="140.8" y="84.4" width="1.3" height="1.0" fill="#d8c6b4" stroke="#bd8150" stroke-width="0.42"/>
<rect x="77.0" y="84.4" width="1.5" height="2.3" fill="#d8c6b4" stroke="#cc9a6c" stroke-width="0.42"/>
<rect x="101.6" y="57.5" width="1.0" height="1.3" fill="#dbccbd" stroke="#bd8150" stroke-width="0.42"/>
<rect x="99.1" y="56.6" width="2.3" height="1.3" fill="#dbccbd" stroke="#b87a4a" stroke-width="0.42"/>
<rect x="96.6" y="57.7" width="1.3" height="1.5" fill="#d6bea6" stroke="#b87a4a" stroke-width="0.42"/>
<rect x="60.2" y="102.0" width="2.3" height="1.0" fill="#dbccbd" stroke="#cc9a6c" stroke-width="0.42"/>
<rect x="8.6" y="80.0" width="1.3" height="1.0" fill="#d8c6b4" stroke="#c48a58" stroke-width="0.42"/>
<rect x="132.9" y="50.0" width="1.5" height="1.3" fill="#dbccbd" stroke="#cc9a6c" stroke-width="0.42"/>
<rect x="141.7" y="94.3" width="2.3" height="2.3" fill="#d6bea6" stroke="#b87a4a" stroke-width="0.42"/>
<rect x="41.0" y="80.4" width="1.0" height="1.8" fill="#dbccbd" stroke="#c48a58" stroke-width="0.42"/>
<rect x="29.9" y="96.7" width="2.8" height="1.0" fill="#d6bea6" stroke="#d0a47a" stroke-width="0.42"/>
<rect x="137.7" y="59.8" width="2.3" height="1.0" fill="#d6bea6" stroke="#b87a4a" stroke-width="0.42"/>
<rect x="99.0" y="60.9" width="1.0" height="1.5" fill="#d8c6b4" stroke="#b87a4a" stroke-width="0.42"/>
<rect x="68.8" y="100.2" width="1.8" height="1.3" fill="#d8c6b4" stroke="#c48a58" stroke-width="0.42"/>
<rect x="113.4" y="52.3" width="2.8" height="1.3" fill="#d4b89c" stroke="#bd8150" stroke-width="0.42"/>
<rect x="118.1" y="54.7" width="2.8" height="1.0" fill="#dbccbd" stroke="#b87a4a" stroke-width="0.42"/>
<rect x="47.3" y="89.2" width="1.3" height="1.5" fill="#dbccbd" stroke="#d0a47a" stroke-width="0.42"/>
<rect x="130.6" y="72.4" width="2.8" height="2.3" fill="#d6bea6" stroke="#d0a47a" stroke-width="0.42"/>
<rect x="85.5" y="104.6" width="2.3" height="1.3" fill="#d4b89c" stroke="#bd8150" stroke-width="0.42"/>
<rect x="134.0" y="68.8" width="2.3" height="2.8" fill="#dbccbd" stroke="#b87a4a" stroke-width="0.42"/>
<rect x="10.3" y="71.6" width="2.8" height="1.8" fill="#d6bea6" stroke="#bd8150" stroke-width="0.42"/>
<rect x="30.6" y="74.0" width="1.5" height="1.0" fill="#d4b89c" stroke="#cc9a6c" stroke-width="0.42"/>
<rect x="94.5" y="53.7" width="1.8" height="1.0" fill="#d4b89c" stroke="#c48a58" stroke-width="0.42"/>
<rect x="134.4" y="80.2" width="2.3" height="1.0" fill="#d4b89c" stroke="#d0a47a" stroke-width="0.42"/>
<rect x="33.7" y="104.1" width="2.8" height="1.5" fill="#dbccbd" stroke="#b87a4a" stroke-width="0.42"/>
<rect x="84.1" y="59.3" width="1.3" height="1.8" fill="#d6bea6" stroke="#c48a58" stroke-width="0.42"/>
<rect x="75.7" y="67.9" width="2.3" height="1.5" fill="#d4b89c" stroke="#b87a4a" stroke-width="0.42"/>
<rect x="109.5" y="81.6" width="1.3" height="1.3" fill="#dbccbd" stroke="#d0a47a" stroke-width="0.42"/>
<rect x="44.8" y="86.5" width="1.8" height="1.8" fill="#dbccbd" stroke="#b87a4a" stroke-width="0.42"/>
<rect x="62.0" y="48.8" width="2.3" height="1.0" fill="#dbccbd" stroke="#cc9a6c" stroke-width="0.42"/>
<rect x="19.6" y="70.4" width="1.3" height="1.5" fill="#d8c6b4" stroke="#cc9a6c" stroke-width="0.42"/>
<rect x="124.9" y="56.2" width="1.0" height="1.0" fill="#d6bea6" stroke="#bd8150" stroke-width="0.42"/>
<rect x="64.7" y="71.6" width="1.0" height="1.8" fill="#d4b89c" stroke="#bd8150" stroke-width="0.42"/>
<rect x="128.9" y="72.0" width="1.3" height="2.3" fill="#d8c6b4" stroke="#cc9a6c" stroke-width="0.42"/>
<rect x="105.4" y="44.4" width="1.5" height="2.3" fill="#d4b89c" stroke="#cc9a6c" stroke-width="0.42"/>
<rect x="40.2" y="85.0" width="2.3" height="1.5" fill="#d8c6b4" stroke="#d0a47a" stroke-width="0.42"/>
<rect x="42.6" y="71.8" width="1.3" height="2.3" fill="#d6bea6" stroke="#d0a47a" stroke-width="0.42"/>
<rect x="41.0" y="86.8" width="1.3" height="2.8" fill="#d4b89c" stroke="#b87a4a" stroke-width="0.42"/>
<rect x="43.8" y="90.8" width="1.0" height="1.3" fill="#d8c6b4" stroke="#b87a4a" stroke-width="0.42"/>
<rect x="39.5" y="80.8" width="1.5" height="1.5" fill="#d8c6b4" stroke="#d0a47a" stroke-width="0.42"/>
<rect x="70.6" y="45.2" width="1.5" height="1.8" fill="#d6bea6" stroke="#d0a47a" stroke-width="0.42"/>
<rect x="3.0" y="71.7" width="2.3" height="1.3" fill="#d4b89c" stroke="#b87a4a" stroke-width="0.42"/>
<rect x="44.7" y="66.7" width="1.3" height="1.5" fill="#d4b89c" stroke="#b87a4a" stroke-width="0.42"/>
<rect x="74.3" y="79.0" width="1.0" height="2.8" fill="#dbccbd" stroke="#c48a58" stroke-width="0.42"/>
<rect x="95.9" y="60.2" width="2.8" height="1.0" fill="#d4b89c" stroke="#c48a58" stroke-width="0.42"/>
<rect x="9.6" y="90.0" width="1.0" height="1.8" fill="#d6bea6" stroke="#cc9a6c" stroke-width="0.42"/>
<rect x="41.4" y="73.4" width="2.3" height="2.3" fill="#d6bea6" stroke="#b87a4a" stroke-width="0.42"/>
<rect x="89.9" y="55.2" width="1.3" height="1.5" fill="#d4b89c" stroke="#bd8150" stroke-width="0.42"/>
<rect x="72.3" y="81.6" width="2.3" height="2.8" fill="#d4b89c" stroke="#bd8150" stroke-width="0.42"/>
<rect x="79.7" y="94.0" width="1.5" height="1.3" fill="#d8c6b4" stroke="#b87a4a" stroke-width="0.42"/>
<rect x="50.4" y="81.6" width="1.3" height="2.3" fill="#d4b89c" stroke="#b87a4a" stroke-width="0.42"/>
<rect x="61.5" y="98.6" width="1.3" height="1.5" fill="#d8c6b4" stroke="#c48a58" stroke-width="0.42"/>
<rect x="55.7" y="61.0" width="1.8" height="1.0" fill="#d4b89c" stroke="#b87a4a" stroke-width="0.42"/>
<rect x="108.6" y="89.3" width="2.8" height="2.3" fill="#d4b89c" stroke="#bd8150" stroke-width="0.42"/>
<rect x="134.5" y="45.7" width="1.0" height="2.8" fill="#dbccbd" stroke="#cc9a6c" stroke-width="0.42"/>
<rect x="112.3" y="50.8" width="1.5" height="1.5" fill="#d6bea6" stroke="#b87a4a" stroke-width="0.42"/>
<rect x="58.1" y="88.2" width="2.8" height="2.8" fill="#d6bea6" stroke="#bd8150" stroke-width="0.42"/>
<rect x="72.7" y="100.9" width="2.8" height="1.0" fill="#d6bea6" stroke="#b87a4a" stroke-width="0.42"/>
<rect x="116.5" y="43.8" width="1.5" height="1.8" fill="#d6bea6" stroke="#c48a58" stroke-width="0.42"/>
<rect x="102.8" y="58.0" width="2.3" height="1.8" fill="#d6bea6" stroke="#bd8150" stroke-width="0.42"/>
<rect x="9.1" y="76.2" width="1.8" height="1.3" fill="#dbccbd" stroke="#c48a58" stroke-width="0.42"/>
<rect x="125.3" y="50.8" width="1.8" height="1.5" fill="#d4b89c" stroke="#c48a58" stroke-width="0.42"/>
<rect x="58.4" y="64.0" width="1.3" height="1.3" fill="#d4b89c" stroke="#cc9a6c" stroke-width="0.42"/>
<rect x="50.8" y="91.2" width="1.5" height="2.8" fill="#d6bea6" stroke="#bd8150" stroke-width="0.42"/>
<rect x="85.5" y="58.2" width="1.8" height="1.8" fill="#d4b89c" stroke="#c48a58" stroke-width="0.42"/>
<rect x="101.9" y="45.3" width="1.5" height="2.3" fill="#dbccbd" stroke="#bd8150" stroke-width="0.42"/>
<rect x="106.9" y="41.3" width="1.8" height="1.0" fill="#d4b89c" stroke="#cc9a6c" stroke-width="0.42"/>
<rect x="83.7" y="94.8" width="2.8" height="1.0" fill="#d6bea6" stroke="#d0a47a" stroke-width="0.42"/>
<rect x="41.5" y="80.4" width="1.8" height="2.3" fill="#d4b89c" stroke="#c48a58" stroke-width="0.42"/>
<rect x="47.7" y="60.7" width="1.5" height="1.5" fill="#dbccbd" stroke="#c48a58" stroke-width="0.42"/>
<rect x="140.9" y="81.4" width="2.8" height="2.8" fill="#d8c6b4" stroke="#b87a4a" stroke-width="0.42"/>
<rect x="6.3" y="74.5" width="1.3" height="2.8" fill="#d8c6b4" stroke="#bd8150" stroke-width="0.42"/>
<rect x="118.0" y="60.6" width="1.5" height="1.0" fill="#d8c6b4" stroke="#bd8150" stroke-width="0.42"/>
<rect x="34.3" y="102.5" width="2.8" height="1.8" fill="#d6bea6" stroke="#cc9a6c" stroke-width="0.42"/>
<rect x="78.7" y="95.1" width="1.5" height="1.8" fill="#d6bea6" stroke="#d0a47a" stroke-width="0.42"/>
<rect x="103.3" y="71.4" width="1.3" height="2.8" fill="#d4b89c" stroke="#bd8150" stroke-width="0.42"/>
<rect x="3.2" y="77.4" width="1.8" height="1.8" fill="#dbccbd" stroke="#d0a47a" stroke-width="0.42"/>
<rect x="68.1" y="41.0" width="1.0" height="2.8" fill="#d8c6b4" stroke="#bd8150" stroke-width="0.42"/>
<rect x="93.7" y="101.1" width="2.3" height="2.8" fill="#d8c6b4" stroke="#b87a4a" stroke-width="0.42"/>
<rect x="75.5" y="80.0" width="1.8" height="1.0" fill="#dbccbd" stroke="#bd8150" stroke-width="0.42"/>
<rect x="112.4" y="54.2" width="1.8" height="1.8" fill="#d4b89c" stroke="#c48a58" stroke-width="0.42"/>
<rect x="90.6" y="44.4" width="1.3" height="2.8" fill="#d6bea6" stroke="#bd8150" stroke-width="0.42"/>
<rect x="57.7" y="73.8" width="2.3" height="2.8" fill="#d4b89c" stroke="#bd8150" stroke-width="0.42"/>
<rect x="79.1" y="72.5" width="1.3" height="1.5" fill="#d8c6b4" stroke="#cc9a6c" stroke-width="0.42"/>
<rect x="114.3" y="57.0" width="2.8" height="1.8" fill="#d4b89c" stroke="#c48a58" stroke-width="0.42"/>
<rect x="127.9" y="88.3" width="1.5" height="1.0" fill="#dbccbd" stroke="#cc9a6c" stroke-width="0.42"/>
<rect x="127.5" y="52.1" width="2.8" height="2.3" fill="#d6bea6" stroke="#cc9a6c" stroke-width="0.42"/>
<rect x="45.4" y="90.1" width="1.8" height="2.8" fill="#d6bea6" stroke="#bd8150" stroke-width="0.42"/>
<rect x="128.6" y="41.5" width="1.3" height="1.5" fill="#d8c6b4" stroke="#c48a58" stroke-width="0.42"/>
<rect x="28.7" y="70.1" width="1.0" height="1.5" fill="#d8c6b4" stroke="#b87a4a" stroke-width="0.42"/>
<rect x="139.4" y="77.7" width="2.3" height="1.8" fill="#d4b89c" stroke="#cc9a6c" stroke-width="0.42"/>
<rect x="79.8" y="69.4" width="2.8" height="1.5" fill="#d4b89c" stroke="#c48a58" stroke-width="0.42"/>
<rect x="143.7" y="82.4" width="1.0" height="1.5" fill="#d4b89c" stroke="#c48a58" stroke-width="0.42"/>
<rect x="93.0" y="104.3" width="1.8" height="2.3" fill="#d4b89c" stroke="#b87a4a" stroke-width="0.42"/>
<rect x="82.8" y="104.3" width="1.5" height="1.3" fill="#d4b89c" stroke="#d0a47a" stroke-width="0.42"/>
<rect x="65.1" y="103.7" width="2.3" height="2.3" fill="#d4b89c" stroke="#b87a4a" stroke-width="0.42"/>
<rect x="61.3" y="49.7" width="1.3" height="1.0" fill="#d4b89c" stroke="#b87a4a" stroke-width="0.42"/>
<rect x="20.6" y="96.7" width="1.5" height="2.3" fill="#d8c6b4" stroke="#bd8150" stroke-width="0.42"/>
<rect x="132.6" y="69.9" width="1.0" height="1.5" fill="#d4b89c" stroke="#cc9a6c" stroke-width="0.42"/>
<rect x="111.1" y="42.4" width="1.5" height="1.0" fill="#d8c6b4" stroke="#cc9a6c" stroke-width="0.42"/>
<rect x="133.0" y="73.3" width="2.8" height="1.8" fill="#d6bea6" stroke="#b87a4a" stroke-width="0.42"/>
<rect x="162.9" y="44.0" width="1.0" height="1.0" fill="#d8c6b4" stroke="#bd8150" stroke-width="0.42"/>
<rect x="100.6" y="66.4" width="1.5" height="1.3" fill="#dbccbd" stroke="#cc9a6c" stroke-width="0.42"/>
<rect x="73.3" y="63.5" width="2.3" height="2.3" fill="#d4b89c" stroke="#c48a58" stroke-width="0.42"/>
<rect x="67.1" y="50.1" width="2.8" height="2.3" fill="#dbccbd" stroke="#cc9a6c" stroke-width="0.42"/>
<rect x="100.6" y="72.5" width="1.5" height="1.8" fill="#d8c6b4" stroke="#bd8150" stroke-width="0.42"/>
<rect x="51.0" y="81.1" width="1.0" height="2.8" fill="#d4b89c" stroke="#c48a58" stroke-width="0.42"/>
<rect x="119.4" y="101.7" width="1.3" height="2.3" fill="#d6bea6" stroke="#bd8150" stroke-width="0.42"/>
<rect x="32.0" y="75.9" width="2.8" height="2.8" fill="#d6bea6" stroke="#b87a4a" stroke-width="0.42"/>
<rect x="103.1" y="80.3" width="2.3" height="1.3" fill="#d4b89c" stroke="#c48a58" stroke-width="0.42"/>
<rect x="83.8" y="57.1" width="1.5" height="2.3" fill="#d4b89c" stroke="#cc9a6c" stroke-width="0.42"/>
<rect x="111.0" y="50.2" width="1.5" height="1.3" fill="#d4b89c" stroke="#b87a4a" stroke-width="0.42"/>
<rect x="107.1" y="41.2" width="1.8" height="1.8" fill="#dbccbd" stroke="#c48a58" stroke-width="0.42"/>
<rect x="77.5" y="71.7" width="1.3" height="2.8" fill="#d4b89c" stroke="#c48a58" stroke-width="0.42"/>
<rect x="86.2" y="92.2" width="1.5" height="1.5" fill="#d8c6b4" stroke="#d0a47a" stroke-width="0.42"/>
<rect x="82.5" y="91.9" width="1.0" height="2.3" fill="#d8c6b4" stroke="#d0a47a" stroke-width="0.42"/>
<rect x="90.9" y="56.1" width="1.0" height="2.3" fill="#dbccbd" stroke="#c48a58" stroke-width="0.42"/>
<rect x="122.4" y="81.6" width="1.0" height="1.5" fill="#d6bea6" stroke="#c48a58" stroke-width="0.42"/>
<rect x="81.1" y="48.0" width="2.8" height="1.8" fill="#dbccbd" stroke="#cc9a6c" stroke-width="0.42"/>
<rect x="93.2" y="69.3" width="2.3" height="1.3" fill="#dbccbd" stroke="#bd8150" stroke-width="0.42"/>
<rect x="45.7" y="95.4" width="1.8" height="1.0" fill="#d6bea6" stroke="#cc9a6c" stroke-width="0.42"/>
<rect x="41.0" y="93.3" width="1.3" height="2.3" fill="#d4b89c" stroke="#c48a58" stroke-width="0.42"/>
<rect x="123.8" y="78.5" width="2.8" height="2.8" fill="#d8c6b4" stroke="#cc9a6c" stroke-width="0.42"/>
<rect x="128.9" y="59.7" width="1.5" height="1.5" fill="#d6bea6" stroke="#c48a58" stroke-width="0.42"/>
<rect x="126.7" y="102.1" width="2.8" height="1.5" fill="#dbccbd" stroke="#cc9a6c" stroke-width="0.42"/>
<rect x="105.0" y="64.5" width="1.0" height="1.0" fill="#d4b89c" stroke="#bd8150" stroke-width="0.42"/>
<rect x="149.2" y="90.5" width="1.5" height="1.3" fill="#d4b89c" stroke="#b87a4a" stroke-width="0.42"/>
<rect x="140.2" y="79.5" width="2.3" height="2.3" fill="#dbccbd" stroke="#c48a58" stroke-width="0.42"/>
<rect x="75.7" y="46.3" width="2.3" height="1.3" fill="#d8c6b4" stroke="#d0a47a" stroke-width="0.42"/>
<rect x="21.2" y="55.5" width="1.8" height="1.0" fill="#d8c6b4" stroke="#cc9a6c" stroke-width="0.42"/>
<rect x="145.6" y="66.5" width="2.3" height="1.3" fill="#d6bea6" stroke="#d0a47a" stroke-width="0.42"/>
<rect x="60.8" y="71.8" width="2.8" height="1.8" fill="#d6bea6" stroke="#bd8150" stroke-width="0.42"/>
<rect x="38.3" y="95.9" width="1.8" height="1.8" fill="#dbccbd" stroke="#cc9a6c" stroke-width="0.42"/>
<rect x="123.5" y="54.3" width="1.0" height="1.5" fill="#d8c6b4" stroke="#d0a47a" stroke-width="0.42"/>
<rect x="6.6" y="62.9" width="1.8" height="1.0" fill="#d6bea6" stroke="#c48a58" stroke-width="0.42"/>
<rect x="146.2" y="84.4" width="1.3" height="2.8" fill="#d8c6b4" stroke="#c48a58" stroke-width="0.42"/>
<rect x="97.5" y="65.2" width="1.3" height="1.0" fill="#d8c6b4" stroke="#cc9a6c" stroke-width="0.42"/>
<rect x="6.5" y="62.4" width="1.8" height="1.5" fill="#d8c6b4" stroke="#d0a47a" stroke-width="0.42"/>
<rect x="61.0" y="49.0" width="2.3" height="1.3" fill="#d4b89c" stroke="#d0a47a" stroke-width="0.42"/>
<rect x="11.9" y="79.8" width="1.5" height="1.0" fill="#dbccbd" stroke="#bd8150" stroke-width="0.42"/>
<rect x="55.2" y="88.9" width="1.0" height="1.3" fill="#dbccbd" stroke="#d0a47a" stroke-width="0.42"/>
<rect x="13.2" y="102.5" width="2.3" height="2.8" fill="#d6bea6" stroke="#b87a4a" stroke-width="0.42"/>
<rect x="10.1" y="75.7" width="1.8" height="1.5" fill="#d6bea6" stroke="#b87a4a" stroke-width="0.42"/>
<rect x="8.3" y="54.2" width="2.8" height="2.8" fill="#dbccbd" stroke="#cc9a6c" stroke-width="0.42"/>
<rect x="55.0" y="88.7" width="1.8" height="1.8" fill="#d8c6b4" stroke="#b87a4a" stroke-width="0.42"/>
<rect x="69.5" y="41.0" width="1.8" height="1.8" fill="#d6bea6" stroke="#cc9a6c" stroke-width="0.42"/>
<rect x="141.1" y="62.5" width="1.8" height="1.5" fill="#d8c6b4" stroke="#d0a47a" stroke-width="0.42"/>
<rect x="93.8" y="51.9" width="2.3" height="1.3" fill="#d6bea6" stroke="#bd8150" stroke-width="0.42"/>
<rect x="120.9" y="54.8" width="1.0" height="1.0" fill="#dbccbd" stroke="#d0a47a" stroke-width="0.42"/>
<rect x="129.5" y="61.2" width="1.0" height="1.8" fill="#d6bea6" stroke="#c48a58" stroke-width="0.42"/>
<rect x="86.0" y="89.2" width="2.3" height="1.3" fill="#dbccbd" stroke="#bd8150" stroke-width="0.42"/>
<rect x="126.3" y="46.7" width="1.8" height="1.0" fill="#d4b89c" stroke="#cc9a6c" stroke-width="0.42"/>
<rect x="61.9" y="45.8" width="1.3" height="1.8" fill="#d6bea6" stroke="#bd8150" stroke-width="0.42"/>
<rect x="32.0" y="56.7" width="1.5" height="2.3" fill="#d8c6b4" stroke="#c48a58" stroke-width="0.42"/>
<rect x="78.9" y="91.7" width="1.5" height="1.0" fill="#d4b89c" stroke="#d0a47a" stroke-width="0.42"/>
<rect x="87.2" y="96.6" width="1.5" height="2.3" fill="#d8c6b4" stroke="#d0a47a" stroke-width="0.42"/>
<rect x="115.9" y="56.6" width="2.8" height="2.3" fill="#d8c6b4" stroke="#c48a58" stroke-width="0.42"/>
<rect x="55.4" y="76.8" width="2.3" height="2.8" fill="#d4b89c" stroke="#cc9a6c" stroke-width="0.42"/>
<rect x="67.5" y="103.6" width="1.5" height="1.3" fill="#d6bea6" stroke="#cc9a6c" stroke-width="0.42"/>
<rect x="18.9" y="99.0" width="2.8" height="1.8" fill="#dbccbd" stroke="#b87a4a" stroke-width="0.42"/>
<rect x="105.6" y="87.8" width="2.3" height="1.8" fill="#d8c6b4" stroke="#bd8150" stroke-width="0.42"/>
<rect x="59.7" y="46.7" width="1.5" height="1.0" fill="#d6bea6" stroke="#b87a4a" stroke-width="0.42"/>
<rect x="108.5" y="82.8" width="2.8" height="1.0" fill="#d8c6b4" stroke="#c48a58" stroke-width="0.42"/>
<rect x="91.0" y="51.4" width="1.3" height="1.8" fill="#d6bea6" stroke="#d0a47a" stroke-width="0.42"/>
<rect x="26.7" y="96.8" width="1.3" height="2.8" fill="#dbccbd" stroke="#b87a4a" stroke-width="0.42"/>
<rect x="7.6" y="74.3" width="1.5" height="2.3" fill="#d8c6b4" stroke="#bd8150" stroke-width="0.42"/>
<rect x="92.5" y="64.8" width="1.5" height="1.5" fill="#dbccbd" stroke="#c48a58" stroke-width="0.42"/>
<rect x="151.6" y="72.7" width="2.3" height="2.8" fill="#d6bea6" stroke="#bd8150" stroke-width="0.42"/>
<rect x="36.7" y="73.6" width="1.0" height="2.3" fill="#d8c6b4" stroke="#cc9a6c" stroke-width="0.42"/>
<rect x="78.9" y="43.6" width="2.8" height="1.8" fill="#d8c6b4" stroke="#c48a58" stroke-width="0.42"/>
<rect x="92.4" y="42.8" width="1.0" height="1.3" fill="#d6bea6" stroke="#b87a4a" stroke-width="0.42"/>
<rect x="35.9" y="97.2" width="1.0" height="2.8" fill="#d6bea6" stroke="#bd8150" stroke-width="0.42"/>
<rect x="111.4" y="102.6" width="1.5" height="1.0" fill="#dbccbd" stroke="#cc9a6c" stroke-width="0.42"/>
<rect x="6.2" y="69.5" width="2.8" height="2.8" fill="#dbccbd" stroke="#bd8150" stroke-width="0.42"/>
<rect x="76.4" y="46.3" width="1.0" height="1.0" fill="#d8c6b4" stroke="#cc9a6c" stroke-width="0.42"/>
<rect x="112.8" y="91.8" width="2.8" height="1.0" fill="#dbccbd" stroke="#bd8150" stroke-width="0.42"/>
<rect x="149.1" y="74.8" width="2.3" height="2.8" fill="#d8c6b4" stroke="#d0a47a" stroke-width="0.42"/>
<rect x="82.6" y="103.0" width="1.8" height="2.8" fill="#d8c6b4" stroke="#cc9a6c" stroke-width="0.42"/>
<rect x="76.8" y="67.3" width="1.3" height="1.0" fill="#dbccbd" stroke="#b87a4a" stroke-width="0.42"/>
<rect x="155.6" y="43.1" width="1.0" height="1.5" fill="#d8c6b4" stroke="#d0a47a" stroke-width="0.42"/>
<rect x="69.2" y="82.7" width="1.0" height="2.3" fill="#d4b89c" stroke="#bd8150" stroke-width="0.42"/>
<rect x="28.9" y="62.9" width="1.8" height="1.8" fill="#d8c6b4" stroke="#bd8150" stroke-width="0.42"/>
<rect x="106.6" y="48.4" width="1.3" height="1.3" fill="#dbccbd" stroke="#bd8150" stroke-width="0.42"/>
<rect x="131.2" y="83.1" width="1.0" height="1.0" fill="#d4b89c" stroke="#b87a4a" stroke-width="0.42"/>
<rect x="25.1" y="58.3" width="1.8" height="2.3" fill="#d4b89c" stroke="#bd8150" stroke-width="0.42"/>
<rect x="86.6" y="101.9" width="2.3" height="2.8" fill="#d6bea6" stroke="#b87a4a" stroke-width="0.42"/>
<rect x="36.9" y="75.5" width="2.3" height="1.3" fill="#dbccbd" stroke="#cc9a6c" stroke-width="0.42"/>
<rect x="77.8" y="102.7" width="1.3" height="1.3" fill="#dbccbd" stroke="#c48a58" stroke-width="0.42"/>
<rect x="78.7" y="70.1" width="1.8" height="1.8" fill="#d8c6b4" stroke="#bd8150" stroke-width="0.42"/>
<rect x="109.8" y="97.8" width="1.8" height="2.3" fill="#dbccbd" stroke="#b87a4a" stroke-width="0.42"/>
<rect x="1.9" y="53.9" width="2.3" height="1.5" fill="#d6bea6" stroke="#bd8150" stroke-width="0.42"/>
<rect x="113.3" y="63.3" width="1.3" height="1.0" fill="#d4b89c" stroke="#c48a58" stroke-width="0.42"/>
<rect x="1.9" y="75.0" width="2.3" height="2.3" fill="#d8c6b4" stroke="#d0a47a" stroke-width="0.42"/>
<rect x="80.2" y="61.5" width="2.3" height="1.3" fill="#d4b89c" stroke="#bd8150" stroke-width="0.42"/>
<rect x="5.1" y="76.1" width="2.8" height="2.3" fill="#dbccbd" stroke="#c48a58" stroke-width="0.42"/>
<rect x="59.8" y="67.8" width="2.8" height="1.0" fill="#d4b89c" stroke="#b87a4a" stroke-width="0.42"/>
<rect x="57.2" y="60.9" width="1.3" height="2.3" fill="#dbccbd" stroke="#b87a4a" stroke-width="0.42"/>
<rect x="98.2" y="63.0" width="1.3" height="2.8" fill="#d4b89c" stroke="#d0a47a" stroke-width="0.42"/>
<rect x="95.8" y="57.0" width="1.8" height="2.8" fill="#d4b89c" stroke="#d0a47a" stroke-width="0.42"/>
<rect x="122.5" y="83.6" width="1.0" height="2.3" fill="#dbccbd" stroke="#bd8150" stroke-width="0.42"/>
<rect x="111.2" y="51.6" width="1.5" height="1.5" fill="#d6bea6" stroke="#d0a47a" stroke-width="0.42"/>
<rect x="78.5" y="89.7" width="1.5" height="2.8" fill="#d8c6b4" stroke="#b87a4a" stroke-width="0.42"/>
<rect x="130.4" y="65.9" width="1.8" height="2.8" fill="#d8c6b4" stroke="#c48a58" stroke-width="0.42"/>
<rect x="3.4" y="80.3" width="1.0" height="2.8" fill="#d8c6b4" stroke="#b87a4a" stroke-width="0.42"/>
<rect x="109.8" y="48.1" width="1.0" height="1.0" fill="#d4b89c" stroke="#cc9a6c" stroke-width="0.42"/>
<rect x="116.8" y="55.9" width="2.3" height="1.5" fill="#d4b89c" stroke="#bd8150" stroke-width="0.42"/>
<rect x="86.7" y="54.0" width="1.5" height="1.5" fill="#dbccbd" stroke="#c48a58" stroke-width="0.42"/>
<rect x="59.8" y="49.3" width="2.8" height="1.8" fill="#dbccbd" stroke="#b87a4a" stroke-width="0.42"/>
<rect x="122.0" y="77.4" width="1.0" height="2.3" fill="#d6bea6" stroke="#d0a47a" stroke-width="0.42"/>
<rect x="40.9" y="94.2" width="2.8" height="1.0" fill="#d6bea6" stroke="#bd8150" stroke-width="0.42"/>
<rect x="8.3" y="57.5" width="1.5" height="2.8" fill="#d4b89c" stroke="#c48a58" stroke-width="0.42"/>
<rect x="32.8" y="74.0" width="2.3" height="2.3" fill="#d6bea6" stroke="#cc9a6c" stroke-width="0.42"/>
<rect x="72.2" y="67.3" width="1.3" height="2.8" fill="#dbccbd" stroke="#b87a4a" stroke-width="0.42"/>
<rect x="11.9" y="104.9" width="1.0" height="1.8" fill="#d6bea6" stroke="#c48a58" stroke-width="0.42"/>
<rect x="100.8" y="69.8" width="1.5" height="1.8" fill="#d8c6b4" stroke="#b87a4a" stroke-width="0.42"/>
<rect x="130.8" y="58.6" width="1.3" height="1.8" fill="#d6bea6" stroke="#b87a4a" stroke-width="0.42"/>
<rect x="152.4" y="55.9" width="1.0" height="1.5" fill="#d4b89c" stroke="#d0a47a" stroke-width="0.42"/>
<rect x="73.4" y="47.4" width="2.8" height="1.3" fill="#dbccbd" stroke="#d0a47a" stroke-width="0.42"/>
<rect x="35.3" y="56.1" width="1.5" height="1.8" fill="#dbccbd" stroke="#b87a4a" stroke-width="0.42"/>
<rect x="97.0" y="71.3" width="1.8" height="2.3" fill="#d6bea6" stroke="#bd8150" stroke-width="0.42"/>
<rect x="81.0" y="49.8" width="1.5" height="1.0" fill="#d8c6b4" stroke="#cc9a6c" stroke-width="0.42"/>
<rect x="42.4" y="88.1" width="2.8" height="1.0" fill="#dbccbd" stroke="#b87a4a" stroke-width="0.42"/>
<rect x="124.4" y="84.4" width="1.8" height="2.3" fill="#dbccbd" stroke="#cc9a6c" stroke-width="0.42"/>
<rect x="111.3" y="49.5" width="2.8" height="1.0" fill="#d8c6b4" stroke="#c48a58" stroke-width="0.42"/>
<rect x="49.9" y="87.2" width="1.5" height="2.3" fill="#d4b89c" stroke="#b87a4a" stroke-width="0.42"/>
<rect x="88.3" y="47.3" width="2.8" height="2.8" fill="#d8c6b4" stroke="#c48a58" stroke-width="0.42"/>
<rect x="49.7" y="98.8" width="1.8" height="1.3" fill="#dbccbd" stroke="#bd8150" stroke-width="0.42"/>
<rect x="75.2" y="101.2" width="2.3" height="2.8" fill="#dbccbd" stroke="#bd8150" stroke-width="0.42"/>
<rect x="66.8" y="78.8" width="1.5" height="1.5" fill="#dbccbd" stroke="#b87a4a" stroke-width="0.42"/>
<rect x="130.6" y="59.3" width="1.0" height="1.5" fill="#d4b89c" stroke="#b87a4a" stroke-width="0.42"/>
<rect x="70.4" y="102.9" width="2.3" height="2.3" fill="#d4b89c" stroke="#b87a4a" stroke-width="0.42"/>
<rect x="131.1" y="45.4" width="1.0" height="1.8" fill="#d8c6b4" stroke="#c48a58" stroke-width="0.42"/>
<rect x="140.9" y="88.0" width="2.8" height="1.0" fill="#dbccbd" stroke="#c48a58" stroke-width="0.42"/>
<rect x="157.4" y="47.7" width="1.3" height="2.3" fill="#d6bea6" stroke="#bd8150" stroke-width="0.42"/>
<rect x="6.9" y="74.8" width="1.3" height="1.5" fill="#d4b89c" stroke="#cc9a6c" stroke-width="0.42"/>
<rect x="18.1" y="79.6" width="2.3" height="1.5" fill="#d6bea6" stroke="#cc9a6c" stroke-width="0.42"/>
<rect x="43.3" y="87.7" width="1.0" height="1.8" fill="#dbccbd" stroke="#bd8150" stroke-width="0.42"/>
<rect x="87.1" y="53.5" width="1.5" height="1.8" fill="#d6bea6" stroke="#bd8150" stroke-width="0.42"/>
<rect x="94.1" y="69.4" width="1.0" height="1.3" fill="#d8c6b4" stroke="#d0a47a" stroke-width="0.42"/>
<rect x="23.9" y="83.3" width="1.8" height="2.3" fill="#d4b89c" stroke="#bd8150" stroke-width="0.42"/>
<rect x="144.4" y="79.6" width="2.8" height="1.8" fill="#dbccbd" stroke="#b87a4a" stroke-width="0.42"/>
<rect x="66.3" y="46.1" width="1.0" height="2.3" fill="#d6bea6" stroke="#bd8150" stroke-width="0.42"/>
<rect x="4.7" y="68.0" width="1.8" height="1.0" fill="#d8c6b4" stroke="#bd8150" stroke-width="0.42"/>
<rect x="43.3" y="80.0" width="1.5" height="2.8" fill="#d8c6b4" stroke="#c48a58" stroke-width="0.42"/>
<rect x="18.8" y="70.2" width="1.8" height="1.5" fill="#dbccbd" stroke="#bd8150" stroke-width="0.42"/>
<rect x="125.8" y="95.7" width="1.3" height="1.8" fill="#dbccbd" stroke="#bd8150" stroke-width="0.42"/>
<rect x="49.5" y="98.4" width="2.3" height="1.5" fill="#d4b89c" stroke="#c48a58" stroke-width="0.42"/>
<rect x="112.0" y="65.2" width="1.8" height="1.0" fill="#dbccbd" stroke="#bd8150" stroke-width="0.42"/>
<rect x="148.0" y="67.0" width="2.8" height="1.3" fill="#d8c6b4" stroke="#d0a47a" stroke-width="0.42"/>
<rect x="83.6" y="48.6" width="2.3" height="1.8" fill="#d6bea6" stroke="#bd8150" stroke-width="0.42"/>
<rect x="61.1" y="64.1" width="2.8" height="2.3" fill="#dbccbd" stroke="#c48a58" stroke-width="0.42"/>
<rect x="28.0" y="101.7" width="2.3" height="1.8" fill="#d6bea6" stroke="#b87a4a" stroke-width="0.42"/>
<rect x="70.2" y="62.0" width="1.5" height="1.0" fill="#d6bea6" stroke="#cc9a6c" stroke-width="0.42"/>
<rect x="140.6" y="65.8" width="1.5" height="2.3" fill="#d8c6b4" stroke="#d0a47a" stroke-width="0.42"/>
<rect x="128.8" y="44.3" width="1.5" height="2.8" fill="#dbccbd" stroke="#cc9a6c" stroke-width="0.42"/>
<rect x="2.8" y="75.3" width="1.3" height="1.5" fill="#dbccbd" stroke="#bd8150" stroke-width="0.42"/>
<rect x="87.7" y="85.7" width="1.5" height="2.3" fill="#d8c6b4" stroke="#bd8150" stroke-width="0.42"/>
<rect x="96.9" y="65.8" width="2.3" height="1.5" fill="#dbccbd" stroke="#c48a58" stroke-width="0.42"/>
<rect x="129.0" y="53.0" width="2.3" height="1.8" fill="#d8c6b4" stroke="#b87a4a" stroke-width="0.42"/>
<rect x="68.5" y="43.2" width="1.5" height="1.5" fill="#d4b89c" stroke="#d0a47a" stroke-width="0.42"/>
<rect x="77.7" y="64.1" width="1.8" height="1.0" fill="#d6bea6" stroke="#c48a58" stroke-width="0.42"/>
<rect x="9.9" y="95.1" width="1.0" height="1.5" fill="#d8c6b4" stroke="#bd8150" stroke-width="0.42"/>
<rect x="66.6" y="65.2" width="1.3" height="1.3" fill="#dbccbd" stroke="#c48a58" stroke-width="0.42"/>
<rect x="8.8" y="71.9" width="2.3" height="1.8" fill="#dbccbd" stroke="#b87a4a" stroke-width="0.42"/>
<rect x="35.2" y="94.8" width="1.8" height="2.3" fill="#d8c6b4" stroke="#d0a47a" stroke-width="0.42"/>
<rect x="24.5" y="58.3" width="2.8" height="1.3" fill="#d8c6b4" stroke="#d0a47a" stroke-width="0.42"/>
<rect x="98.6" y="62.2" width="1.5" height="2.3" fill="#dbccbd" stroke="#bd8150" stroke-width="0.42"/>
<rect x="123.0" y="54.1" width="2.8" height="1.5" fill="#d6bea6" stroke="#c48a58" stroke-width="0.42"/>
<rect x="43.2" y="90.7" width="1.3" height="2.8" fill="#d4b89c" stroke="#cc9a6c" stroke-width="0.42"/>
<rect x="160.4" y="60.5" width="5.1" height="4.1" fill="#e2a3a6" stroke="#cf3a3a" stroke-width="0.6"/>
<rect x="138.8" y="49.1" width="48.5" height="26.8" fill="none" stroke="#c4262e" stroke-width="1.5" rx="1"/>
</svg></div>
<!-- toolbar -->
<div class="tb on" style="top:458px;height:40px"><svg width="38" height="38" viewBox="-1 0 38 38"><g fill="none" stroke="#fff" stroke-width="1.5"><path d="M10.600,16.500V11.800H15.300 M21.100,11.800H25.800V16.500 M25.800,21.200V25.900H21.100 M15.300,25.900H10.600V21.200"/><path d="M18.200,11V26.600 M9.800,18.700H26.600" stroke-width="1.600"/></g></svg></div>
<div class="tb" style="top:498px;height:40px"><svg width="38" height="38" viewBox="-1 0 38 38"><g fill="none" stroke="#0a64a0" stroke-width="1.500"><circle cx="18.300" cy="18.900" r="5.400"/><path d="M18.300,10.900V17.300 M18.300,20.500V26.900 M9.900,18.900H16.700 M19.900,18.900H26.700"/></g></svg></div>
<div class="tb" style="top:538px;height:40px"><svg width="38" height="38" viewBox="-1 0 38 38"><rect x="10.600" y="11.600" width="14.800" height="14.400" fill="none" stroke="#0a64a0" stroke-width="1.300"/><g fill="#0a64a0"><path d="M18.200,13.400l2.100,2.800h-4.200z M18.200,24.200l2.100,-2.800h-4.200z M12.700,18.800l2.800,-2.100v4.200z M23.700,18.800l-2.800,-2.100v4.200z"/></g></svg></div>
<div class="tb" style="top:578px;height:40px"><svg width="38" height="38" viewBox="-1 0 38 38"><path d="M18.050,11.100V26.700" stroke="#0a64a0" stroke-width="1.900"/><path d="M10,14.700L15.600,18.700L10,22.700Z" fill="#0a64a0"/><path d="M25.600,15.600L21.800,18.800L25.600,22Z" fill="none" stroke="#0a64a0" stroke-width="1"/></svg></div>
<div class="tb" style="top:630px;height:40px"><svg width="38" height="38" viewBox="-1 0 38 38"><path d="M18.100,11.200V26.700 M9.800,19H26.400" stroke="#0a64a0" stroke-width="1.900"/></svg></div>
<div class="tb" style="top:670px;height:40px"><svg width="38" height="38" viewBox="-1 0 38 38"><path d="M9.800,18.900H26.400" stroke="#0a64a0" stroke-width="1.900"/></svg></div>
<div class="tb on" style="top:710px;height:40px"><svg width="38" height="38" viewBox="-1 0 38 38"><rect x="11" y="12.800" width="14.900" height="12" fill="none" stroke="#fff" stroke-width="1.600"/><rect x="14.600" y="16.600" width="7.600" height="4.800" fill="none" stroke="#fff" stroke-width="1.500"/></svg></div>
<span id="t32" class="t clip" style="left:1204.68px;top:749.01px;font-size:14px;color:#5b6072;font-weight:400;letter-spacing:-0.181px">Replacement Material:</span>
<div id="panelclip" class="abs"></div>
<div id="cmt" class="abs"></div>
<div id="foot" class="abs"></div>
<div id="track" class="abs"></div><div id="thumb" class="abs"></div>
<div id="inp" class="abs"></div><div id="inpdiv" class="abs"></div>
<div id="bcancel" class="abs"></div><div id="brepair" class="abs"></div>
<!-- icons -->
<svg class="abs" style="left:0;top:0" width="1616" height="867" viewBox="0 0 1616 867">
 <!-- header wrench -->
 <g id="wr1" transform="translate(23.8,15.600) scale(1.060)"><path d="M15.2,3.6c0.5,1.7 0.1,3.6-1.2,4.9c-1.4,1.4-3.400,1.700-5.100,1.100l-5.300,5.300c-0.700,0.700-1.900,0.700-2.600,0c-0.700-0.700-0.700-1.900,0-2.600l5.300-5.300c-0.600-1.700-0.300-3.700,1.100-5.100c1.300-1.300,3.200-1.700,4.900-1.200l-2.900,2.900l0.500,2.400l2.400,0.500z" fill="#fff"/></g>
 <!-- help -->
 <circle cx="1586.1" cy="25.900" r="7.300" fill="none" stroke="#fff" stroke-width="1.700"/>
 <!-- breadcrumb icons -->
 <rect x="43" y="56" width="14" height="14" fill="#0a64a0"/>
 <g fill="none" stroke="#70778a" stroke-width="0.9"><rect x="210.300" y="57" width="4" height="7"/><rect x="205.800" y="60.400" width="6" height="4"/><rect x="214.700" y="60.800" width="6.700" height="4.800"/><rect x="213.500" y="64.300" width="4" height="4.500"/></g>
 <circle cx="346" cy="63" r="7" fill="#0a64a0"/>
 <path d="M1584.500,60.500L1592,67L1599.500,60.500" fill="none" stroke="#1467a6" stroke-width="1.5"/>
 <!-- flag -->
 <path d="M1208.200,193.200V208.800" stroke="#0a64a0" stroke-width="2"/><path d="M1210.100,193.900L1223.300,199.400L1210.100,204.600Z" fill="#0a64a0"/>
 <circle cx="1215" cy="429.300" r="7" fill="#0a64a0"/>
 <!-- input icons -->
 <g transform="translate(1213.900,630.700) scale(1.040)"><path d="M15.200,3.600c0.500,1.700 0.100,3.600-1.200,4.900c-1.400,1.400-3.400,1.700-5.100,1.100l-5.300,5.300c-0.700,0.700-1.900,0.700-2.600,0c-0.700-0.700-0.700-1.900,0-2.600l5.300-5.300c-0.600-1.700-0.300-3.700,1.100-5.100c1.300-1.300,3.200-1.700,4.900-1.200l-2.900,2.900l0.500,2.400l2.400,0.500z" fill="#0a64a0"/></g>
 <path d="M1491.400,634.400l8.400,8.400 M1499.800,634.400l-8.400,8.400" stroke="#5b6072" stroke-width="1.300"/>
 <g stroke="#6a6f7c" stroke-width="0.900" fill="#3d4250"><path d="M1514,632.600h16 M1514,636.700h16 M1514,640.900h16 M1514,645h16"/><rect x="1516.400" y="631.400" width="1.400" height="2.400" stroke="none"/><rect x="1526.300" y="635.500" width="1.400" height="2.400" stroke="none"/><rect x="1518.400" y="639.700" width="1.400" height="2.400" stroke="none"/><rect x="1523.900" y="643.800" width="1.400" height="2.400" stroke="none"/></g>
 <g fill="none" stroke="#0a64a0" stroke-width="1.900"><circle cx="1560.700" cy="637.100" r="5"/><path d="M1556.700,641L1552.200,645.400" stroke-width="2.500" stroke-linecap="round"/></g>
 <!-- comments chevron -->
 <path d="M1584.500,794L1592,787.500L1599.500,794" fill="none" stroke="#444a58" stroke-width="1.400"/>
</svg>
<span class="t" style="left:1582.150px;top:18.600px;font-size:13.500px;font-weight:700;color:#fff">?</span>
<span id="t0" class="t " style="left:47.72px;top:16.36px;font-size:16px;color:#ffffff;font-weight:400;letter-spacing:0.332px">Repair Material Defect</span>
<span id="t1" class="t " style="left:61.53px;top:55.01px;font-size:14px;color:#1467a6;font-weight:400;letter-spacing:-0.978px">MAT_D01</span>
<span id="t2" class="t " style="left:125.89px;top:56.01px;font-size:14px;color:#1f2430;font-weight:400;letter-spacing:-0.217px">(Queued)</span>
<span id="t3" class="t " style="left:191.44px;top:56.87px;font-size:12.5px;color:#1f2430;font-weight:400;letter-spacing:0.000px">/</span>
<span id="t4" class="t " style="left:225.30px;top:55.01px;font-size:14px;color:#1467a6;font-weight:400;letter-spacing:-0.153px">Product 01 [A]</span>
<span id="t5" class="t " style="left:323.96px;top:56.87px;font-size:12.5px;color:#1f2430;font-weight:400;letter-spacing:0.000px">/</span>
<span id="t6" class="t " style="left:358.31px;top:55.01px;font-size:14px;color:#1467a6;font-weight:400;letter-spacing:-0.054px">Mixing</span>
<span id="t7" class="t " style="left:410.75px;top:56.87px;font-size:12.5px;color:#1f2430;font-weight:400;letter-spacing:0.000px">/</span>
<span id="t8" class="t " style="left:423.61px;top:55.01px;font-size:14px;color:#1f2430;font-weight:400;letter-spacing:-0.350px">10 Kg</span>
<span id="t9" class="t " style="left:1155.93px;top:107.57px;font-size:16.5px;color:#111111;font-weight:400;letter-spacing:0.438px;-webkit-text-stroke:0.6px #111111">Top</span>
<span id="t10" class="t " style="left:1204.73px;top:107.01px;font-size:14px;color:#3a3f52;font-weight:400;letter-spacing:0.581px;-webkit-text-stroke:0.24px #3a3f52">Defect Details</span>
<span id="t11" class="t " style="left:1204.75px;top:142.01px;font-size:14px;color:#5b6072;font-weight:400;letter-spacing:-0.120px">Sub-Material:</span>
<span id="t12" class="t " style="left:1204.68px;top:172.01px;font-size:14px;color:#5b6072;font-weight:400;letter-spacing:-0.458px">Reason:</span>
<span id="t13" class="t " style="left:1226.60px;top:193.01px;font-size:14px;color:#1467a6;font-weight:400;letter-spacing:-0.227px">Defect</span>
<span id="t14" class="t " style="left:1204.75px;top:223.01px;font-size:14px;color:#5b6072;font-weight:400;letter-spacing:-0.340px">Side:</span>
<span id="t15" class="t " style="left:1204.79px;top:243.01px;font-size:14px;color:#1f2430;font-weight:400;letter-spacing:0.020px">Top</span>
<span id="t16" class="t " style="left:1204.68px;top:272.01px;font-size:14px;color:#5b6072;font-weight:400;letter-spacing:-0.247px">Reference Designator:</span>
<span id="t17" class="t " style="left:1204.79px;top:292.01px;font-size:14px;color:#1f2430;font-weight:400;letter-spacing:-0.525px">T51000</span>
<span id="t18" class="t " style="left:1204.68px;top:321.01px;font-size:14px;color:#5b6072;font-weight:400;letter-spacing:0.002px">Part Number:</span>
<span id="t19" class="t " style="left:1204.56px;top:342.01px;font-size:14px;color:#1f2430;font-weight:400;letter-spacing:-0.358px">3640646</span>
<span id="t20" class="t " style="left:1204.68px;top:370.01px;font-size:14px;color:#5b6072;font-weight:400;letter-spacing:-0.151px">Pin:</span>
<span id="t21" class="t " style="left:1204.75px;top:401.01px;font-size:14px;color:#5b6072;font-weight:400;letter-spacing:-0.226px">Step:</span>
<span id="t22" class="t " style="left:1226.60px;top:421.01px;font-size:14px;color:#1467a6;font-weight:400;letter-spacing:0.178px">Mixing</span>
<span id="t23" class="t " style="left:1204.68px;top:451.01px;font-size:14px;color:#5b6072;font-weight:400;letter-spacing:-0.271px">Remark:</span>
<span id="t24" class="t " style="left:1205.16px;top:482.01px;font-size:14px;color:#5b6072;font-weight:400;letter-spacing:-0.220px">Open Date:</span>
<span id="t25" class="t " style="left:1204.45px;top:502.01px;font-size:14px;color:#1f2430;font-weight:400;letter-spacing:-0.152px">07/25/2023 09:29 AM</span>
<span id="t26" class="t " style="left:1204.73px;top:545.01px;font-size:14px;color:#3a3f52;font-weight:400;letter-spacing:0.506px;-webkit-text-stroke:0.24px #3a3f52">Manage Defect</span>
<span id="t27" class="t " style="left:1206.75px;top:593.84px;font-size:23px;color:#b3261e;font-weight:400;letter-spacing:0.000px">*</span>
<span id="t28" class="t " style="left:1221.11px;top:595.01px;font-size:14px;color:#5b6072;font-weight:400;letter-spacing:-0.130px">Repair Action:</span>
<span id="t29" class="t " style="left:1236.43px;top:631.01px;font-size:14px;color:#1f2430;font-weight:400;letter-spacing:-0.129px">Please reinstall the component</span>
<span id="t30" class="t " style="left:1204.68px;top:677.01px;font-size:14px;color:#5b6072;font-weight:400;letter-spacing:-0.213px">Part Replacement Mode:</span>
<span id="t31" class="t " style="left:1204.68px;top:706.01px;font-size:14px;color:#1f2430;font-weight:400;letter-spacing:0.032px">Not Allowed</span>
<span id="t33" class="t " style="left:39.56px;top:783.01px;font-size:14px;color:#5b6072;font-weight:400;letter-spacing:-0.088px">Comments:</span>
<span id="t34" class="t " style="left:1401.90px;top:828.93px;font-size:15px;color:#1467a6;font-weight:400;letter-spacing:-0.533px">Cancel</span>
<span id="t35" class="t " style="left:1514.57px;top:828.93px;font-size:15px;color:#ffffff;font-weight:400;letter-spacing:-0.362px;-webkit-text-stroke:0.25px #ffffff">Repair</span>
</body></html>
